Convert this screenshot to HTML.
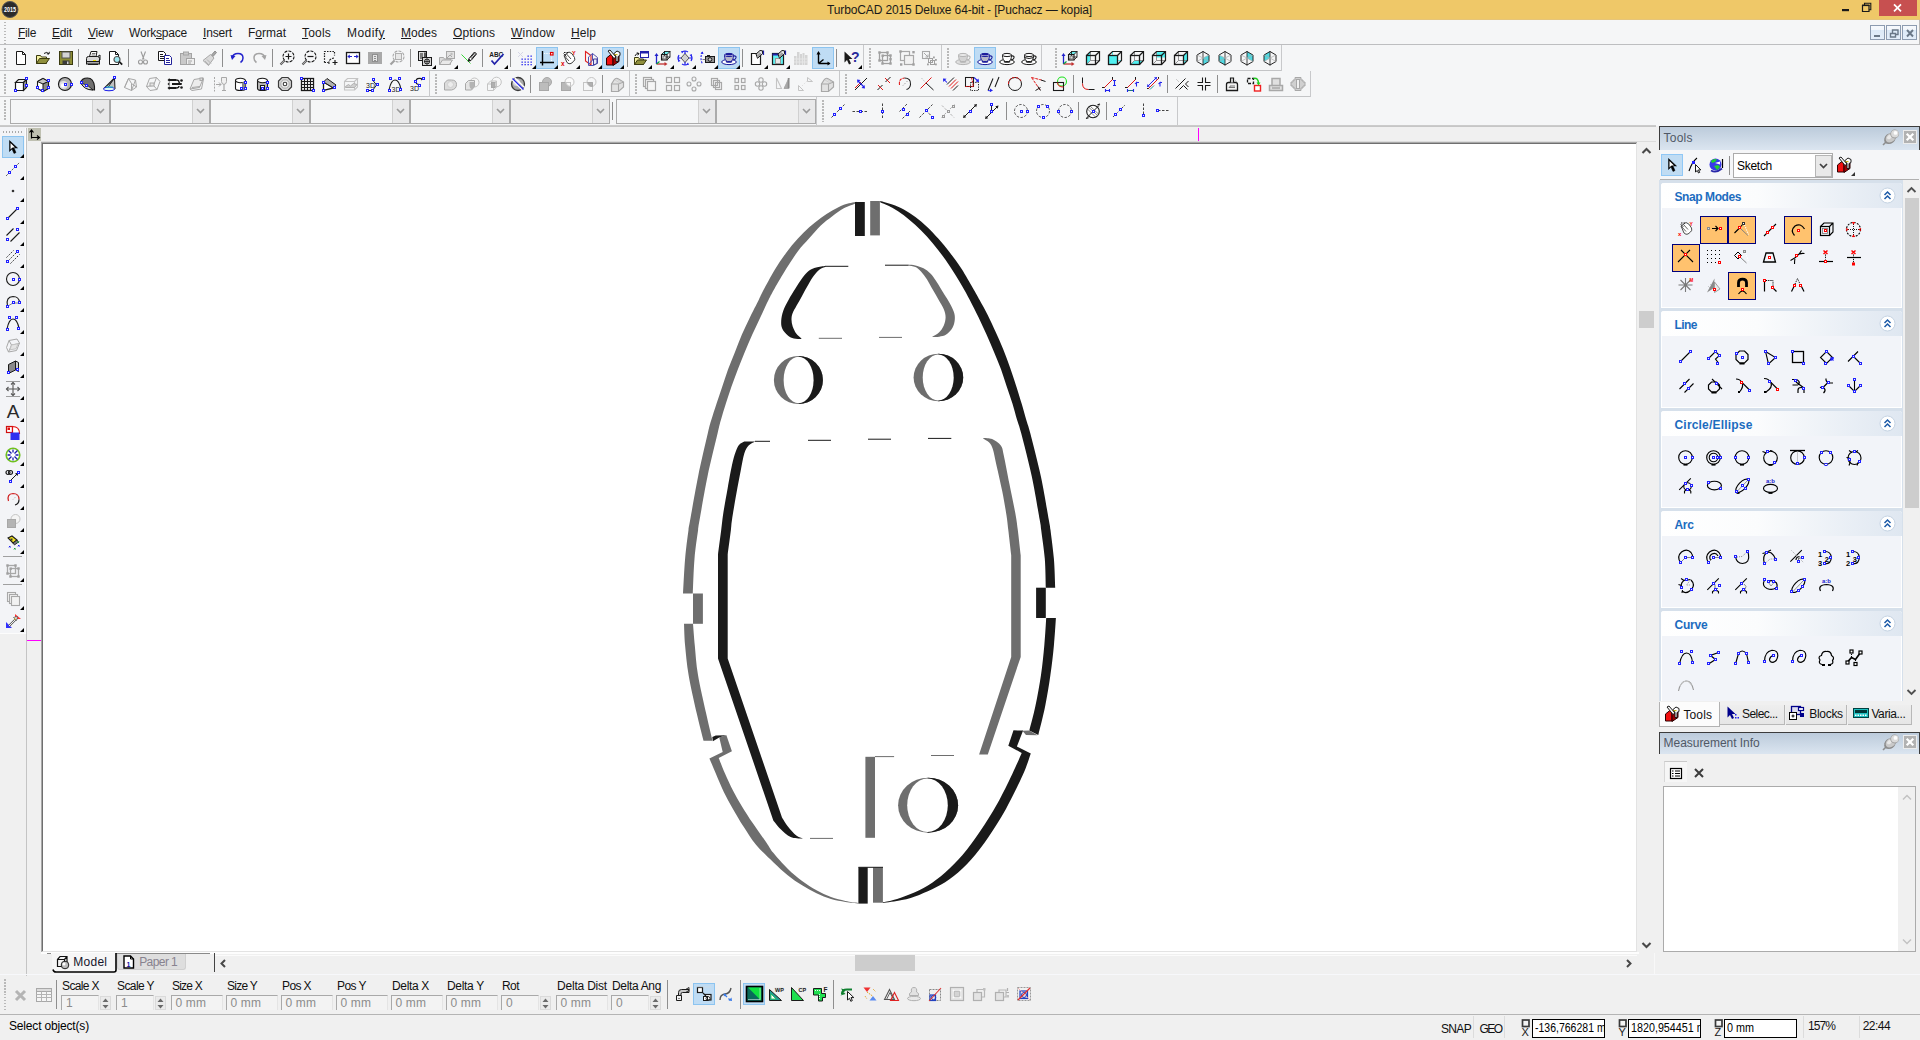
<!DOCTYPE html>
<html><head><meta charset="utf-8"><title>TurboCAD 2015 Deluxe 64-bit - [Puchacz — kopia]</title>
<style>
html,body{margin:0;padding:0;}
body{width:1920px;height:1040px;overflow:hidden;position:relative;background:#f0f0f0;font-family:"Liberation Sans",sans-serif;}
div,span.t,svg{position:absolute;}
span.t{white-space:nowrap;line-height:1;}
svg{overflow:visible;}
.sel{background:#c0dcf3;border:1px solid #90c8f6;box-sizing:border-box;}
</style></head><body>
<div style="left:0px;top:0px;width:1920px;height:19px;background:#efc868;"></div>
<div style="left:0px;top:19px;width:1920px;height:1px;background:#e6c57a;"></div>
<span class="t" style="left:827px;top:3.84px;font-size:12px;color:#1a1a1a;letter-spacing:-0.128px;">TurboCAD 2015 Deluxe 64-bit - [Puchacz — kopia]</span>
<svg style="left:0px;top:0px" width="20" height="20" viewBox="0 0 20 20" ><circle cx="10" cy="9.5" r="8" fill="#2b2b2b"/><circle cx="10" cy="9.5" r="8" fill="none" stroke="#555" stroke-width="1"/><text x="10" y="12" font-size="6.5" font-weight="bold" fill="#fff" text-anchor="middle" font-family="Liberation Sans, sans-serif" textLength="12" lengthAdjust="spacingAndGlyphs">2015</text></svg>
<div style="left:1879px;top:0px;width:38px;height:16px;background:#c75050;"></div>
<svg style="left:1840px;top:0px" width="80" height="20" viewBox="0 0 80 20" ><rect x="2" y="9" width="7" height="2.200" fill="#1a1a1a"/><path d="M22.500 5.500h6.500v6h-6.500z" fill="none" stroke="#1a1a1a" stroke-width="1.200"/><path d="M22 5.300h7.500" stroke="#1a1a1a" stroke-width="1.600"/><path d="M24.500 5v-1.800h6.300v6.500h-1.800" fill="none" stroke="#1a1a1a" stroke-width="1.100"/><path d="M54 4.400l7 7 M61 4.400l-7 7" stroke="#fff" stroke-width="1.700"/></svg>
<div style="left:0px;top:20px;width:1920px;height:106px;background:#f5f6f7;"></div>
<div style="left:0px;top:44px;width:1920px;height:1px;background:#bdbec0;"></div>
<div style="left:0px;top:70px;width:1282px;height:1px;background:#c3c4c6;"></div>
<div style="left:0px;top:96px;width:1311px;height:1px;background:#c3c4c6;"></div>
<div style="left:0px;top:125px;width:1656px;height:1px;background:#cbcbcb;"></div>
<div style="left:0px;top:126px;width:1656px;height:1px;background:#c6c6c6;"></div>
<span class="t" style="left:18px;top:26.84px;font-size:12px;color:#1a1a1a;letter-spacing:-0.334px;"><u>F</u>ile</span>
<span class="t" style="left:52px;top:26.84px;font-size:12px;color:#1a1a1a;letter-spacing:-0.170px;"><u>E</u>dit</span>
<span class="t" style="left:88px;top:26.84px;font-size:12px;color:#1a1a1a;letter-spacing:-0.199px;"><u>V</u>iew</span>
<span class="t" style="left:129px;top:26.84px;font-size:12px;color:#1a1a1a;letter-spacing:-0.200px;">Work<u>s</u>pace</span>
<span class="t" style="left:203px;top:26.84px;font-size:12px;color:#1a1a1a;letter-spacing:-0.169px;"><u>I</u>nsert</span>
<span class="t" style="left:248px;top:26.84px;font-size:12px;color:#1a1a1a;letter-spacing:-0.001px;">F<u>o</u>rmat</span>
<span class="t" style="left:302px;top:26.84px;font-size:12px;color:#1a1a1a;letter-spacing:0.197px;"><u>T</u>ools</span>
<span class="t" style="left:347px;top:26.84px;font-size:12px;color:#1a1a1a;letter-spacing:0.443px;">Modif<u>y</u></span>
<span class="t" style="left:401px;top:26.84px;font-size:12px;color:#1a1a1a;letter-spacing:-0.004px;"><u>M</u>odes</span>
<span class="t" style="left:453px;top:26.84px;font-size:12px;color:#1a1a1a;letter-spacing:0.092px;"><u>O</u>ptions</span>
<span class="t" style="left:511px;top:26.84px;font-size:12px;color:#1a1a1a;letter-spacing:0.220px;"><u>W</u>indow</span>
<span class="t" style="left:571px;top:26.84px;font-size:12px;color:#1a1a1a;letter-spacing:0.080px;"><u>H</u>elp</span>
<div style="left:1870px;top:25px;width:15px;height:15px;background:linear-gradient(#f6f9fd 0%,#f2f6fb 30%,#dce9f7 31%,#e3eefa 100%);border:1px solid #8c9bb0;box-sizing:border-box;"></div>
<div style="left:1886px;top:25px;width:15px;height:15px;background:linear-gradient(#f6f9fd 0%,#f2f6fb 30%,#dce9f7 31%,#e3eefa 100%);border:1px solid #8c9bb0;box-sizing:border-box;"></div>
<div style="left:1902px;top:25px;width:15px;height:15px;background:linear-gradient(#f6f9fd 0%,#f2f6fb 30%,#dce9f7 31%,#e3eefa 100%);border:1px solid #8c9bb0;box-sizing:border-box;"></div>
<svg style="left:1870px;top:25px" width="48" height="15" viewBox="0 0 48 15" ><rect x="4" y="10" width="6" height="2" fill="#6a7888"/><path d="M20.500 8.500h5v3.500h-5z M22.500 8v-3h5.500v4.500h-2" fill="none" stroke="#6a7888" stroke-width="1.400"/><path d="M37 5l6 6.500 M43 5l-6 6.500" stroke="#6a7888" stroke-width="1.900"/></svg>
<div style="left:1919px;top:20px;width:1px;height:25px;background:#b9b9b9;"></div>
<div style="left:4px;top:22px;width:2px;height:22px;background:repeating-linear-gradient(to bottom,#b9b9b9 0,#b9b9b9 1.500px,transparent 1.500px,transparent 3px);"></div>
<div style="left:4px;top:48px;width:2px;height:21px;background:repeating-linear-gradient(to bottom,#b9b9b9 0,#b9b9b9 1.500px,transparent 1.500px,transparent 3px);"></div>
<div style="left:4px;top:74px;width:2px;height:21px;background:repeating-linear-gradient(to bottom,#b9b9b9 0,#b9b9b9 1.500px,transparent 1.500px,transparent 3px);"></div>
<div style="left:4px;top:100px;width:2px;height:21px;background:repeating-linear-gradient(to bottom,#b9b9b9 0,#b9b9b9 1.500px,transparent 1.500px,transparent 3px);"></div>
<div style="left:863px;top:45px;width:1px;height:26px;background:#c8c9cb;"></div>
<div style="left:941px;top:45px;width:1px;height:26px;background:#c8c9cb;"></div>
<div style="left:1041px;top:45px;width:1px;height:26px;background:#c8c9cb;"></div>
<div style="left:1281px;top:45px;width:1px;height:26px;background:#c8c9cb;"></div>
<div style="left:869px;top:48px;width:2px;height:21px;background:repeating-linear-gradient(to bottom,#b9b9b9 0,#b9b9b9 1.500px,transparent 1.500px,transparent 3px);"></div>
<div style="left:947px;top:48px;width:2px;height:21px;background:repeating-linear-gradient(to bottom,#b9b9b9 0,#b9b9b9 1.500px,transparent 1.500px,transparent 3px);"></div>
<div style="left:1055px;top:48px;width:2px;height:21px;background:repeating-linear-gradient(to bottom,#b9b9b9 0,#b9b9b9 1.500px,transparent 1.500px,transparent 3px);"></div>
<div style="left:429px;top:71px;width:1px;height:26px;background:#c8c9cb;"></div>
<div style="left:629px;top:71px;width:1px;height:26px;background:#c8c9cb;"></div>
<div style="left:839px;top:71px;width:1px;height:26px;background:#c8c9cb;"></div>
<div style="left:1310px;top:71px;width:1px;height:26px;background:#c8c9cb;"></div>
<div style="left:435px;top:74px;width:2px;height:21px;background:repeating-linear-gradient(to bottom,#b9b9b9 0,#b9b9b9 1.500px,transparent 1.500px,transparent 3px);"></div>
<div style="left:635px;top:74px;width:2px;height:21px;background:repeating-linear-gradient(to bottom,#b9b9b9 0,#b9b9b9 1.500px,transparent 1.500px,transparent 3px);"></div>
<div style="left:845px;top:74px;width:2px;height:21px;background:repeating-linear-gradient(to bottom,#b9b9b9 0,#b9b9b9 1.500px,transparent 1.500px,transparent 3px);"></div>
<div style="left:816px;top:97px;width:1px;height:28px;background:#c8c9cb;"></div>
<div style="left:822px;top:100px;width:2px;height:22px;background:repeating-linear-gradient(to bottom,#b9b9b9 0,#b9b9b9 1.500px,transparent 1.500px,transparent 3px);"></div>
<div style="left:1177px;top:97px;width:1px;height:28px;background:#c8c9cb;"></div>
<div style="left:10px;top:99px;width:100px;height:25px;background:#f5f6f7;border:1px solid #ababab;box-sizing:border-box;"></div>
<div style="left:92px;top:100px;width:17px;height:23px;background:#e9e9ea;border-left:1px solid #d0d0d0;box-sizing:border-box;"></div>
<svg style="left:96px;top:108px" width="9" height="6" viewBox="0 0 9 6" ><path d="M1 1l3.500 3.500 3.500-3.500" fill="none" stroke="#9a9a9a" stroke-width="1.6"/></svg>
<div style="left:110px;top:99px;width:100px;height:25px;background:#f5f6f7;border:1px solid #ababab;box-sizing:border-box;"></div>
<div style="left:192px;top:100px;width:17px;height:23px;background:#e9e9ea;border-left:1px solid #d0d0d0;box-sizing:border-box;"></div>
<svg style="left:196px;top:108px" width="9" height="6" viewBox="0 0 9 6" ><path d="M1 1l3.500 3.500 3.500-3.500" fill="none" stroke="#9a9a9a" stroke-width="1.6"/></svg>
<div style="left:210px;top:99px;width:100px;height:25px;background:#f5f6f7;border:1px solid #ababab;box-sizing:border-box;"></div>
<div style="left:292px;top:100px;width:17px;height:23px;background:#e9e9ea;border-left:1px solid #d0d0d0;box-sizing:border-box;"></div>
<svg style="left:296px;top:108px" width="9" height="6" viewBox="0 0 9 6" ><path d="M1 1l3.500 3.500 3.500-3.500" fill="none" stroke="#9a9a9a" stroke-width="1.6"/></svg>
<div style="left:310px;top:99px;width:100px;height:25px;background:#f5f6f7;border:1px solid #ababab;box-sizing:border-box;"></div>
<div style="left:392px;top:100px;width:17px;height:23px;background:#e9e9ea;border-left:1px solid #d0d0d0;box-sizing:border-box;"></div>
<svg style="left:396px;top:108px" width="9" height="6" viewBox="0 0 9 6" ><path d="M1 1l3.500 3.500 3.500-3.500" fill="none" stroke="#9a9a9a" stroke-width="1.6"/></svg>
<div style="left:410px;top:99px;width:100px;height:25px;background:#f5f6f7;border:1px solid #ababab;box-sizing:border-box;"></div>
<div style="left:492px;top:100px;width:17px;height:23px;background:#e9e9ea;border-left:1px solid #d0d0d0;box-sizing:border-box;"></div>
<svg style="left:496px;top:108px" width="9" height="6" viewBox="0 0 9 6" ><path d="M1 1l3.500 3.500 3.500-3.500" fill="none" stroke="#9a9a9a" stroke-width="1.6"/></svg>
<div style="left:510px;top:99px;width:100px;height:25px;background:#efefef;border:1px solid #ababab;box-sizing:border-box;"></div>
<div style="left:592px;top:100px;width:17px;height:23px;background:#e9e9ea;border-left:1px solid #d0d0d0;box-sizing:border-box;"></div>
<svg style="left:596px;top:108px" width="9" height="6" viewBox="0 0 9 6" ><path d="M1 1l3.500 3.500 3.500-3.500" fill="none" stroke="#9a9a9a" stroke-width="1.6"/></svg>
<div style="left:612px;top:102px;width:1px;height:18px;background:#8e8e8e;"></div>
<div style="left:616px;top:99px;width:100px;height:25px;background:#f5f6f7;border:1px solid #ababab;box-sizing:border-box;"></div>
<div style="left:698px;top:100px;width:17px;height:23px;background:#e9e9ea;border-left:1px solid #d0d0d0;box-sizing:border-box;"></div>
<svg style="left:702px;top:108px" width="9" height="6" viewBox="0 0 9 6" ><path d="M1 1l3.500 3.500 3.500-3.500" fill="none" stroke="#9a9a9a" stroke-width="1.6"/></svg>
<div style="left:716px;top:99px;width:100px;height:25px;background:#efefef;border:1px solid #ababab;box-sizing:border-box;"></div>
<div style="left:798px;top:100px;width:17px;height:23px;background:#e9e9ea;border-left:1px solid #d0d0d0;box-sizing:border-box;"></div>
<svg style="left:802px;top:108px" width="9" height="6" viewBox="0 0 9 6" ><path d="M1 1l3.500 3.500 3.500-3.500" fill="none" stroke="#9a9a9a" stroke-width="1.6"/></svg>
<div style="left:0px;top:127px;width:26px;height:506px;background:#f3f4f7;"></div>
<div style="left:25px;top:128px;width:1px;height:505px;background:#fdfdfd;"></div>
<div style="left:26px;top:128px;width:1px;height:848px;background:#c4c4c4;"></div>
<div style="left:0px;top:633px;width:26px;height:1px;background:#fcfcfc;"></div>
<div style="left:3px;top:131px;width:20px;height:2px;background:repeating-linear-gradient(to right,#a9a9a9 0,#a9a9a9 1px,transparent 1px,transparent 3px);"></div>
<div style="left:28px;top:128px;width:13px;height:13px;background:#bfc0b1;"></div>
<svg style="left:28px;top:128px" width="13" height="13" viewBox="0 0 13 13" ><path d="M3.500 10.500v-8 M1.500 4.500l2-2.500 2 2.500 M3.500 9.500h8 M9 7.500l2.500 2-2.500 2" fill="none" stroke="#000" stroke-width="1.2"/></svg>
<div style="left:41px;top:141px;width:1615px;height:1px;background:#dcdcdc;"></div>
<div style="left:41px;top:142px;width:1596px;height:810px;background:#fff;border-left:2px solid #9c9c9c;border-top:2px solid #9c9c9c;border-right:1px solid #e3e3e3;border-bottom:1px solid #e3e3e3;box-sizing:border-box;"></div>
<div style="left:41px;top:142px;width:1px;height:809px;background:#a8a8a8;"></div>
<div style="left:42px;top:143px;width:1px;height:808px;background:#6f6f6f;"></div>
<div style="left:41px;top:142px;width:1596px;height:1px;background:#a8a8a8;"></div>
<div style="left:42px;top:143px;width:1594px;height:1px;background:#6f6f6f;"></div>
<div style="left:1198px;top:128px;width:1px;height:13px;background:#ff00ff;"></div>
<div style="left:27px;top:640px;width:14px;height:1px;background:#ff00ff;"></div>
<div style="left:1638px;top:143px;width:17px;height:809px;background:#f0f0f0;"></div>
<div style="left:1639px;top:311px;width:15px;height:17px;background:#cdcdcd;"></div>
<svg style="left:1641px;top:147px" width="11" height="8" viewBox="0 0 11 8" ><path d="M1.500 6l4-4 4 4" fill="none" stroke="#484848" stroke-width="2.100"/></svg>
<svg style="left:1641px;top:941px" width="11" height="8" viewBox="0 0 11 8" ><path d="M1.500 2l4 4 4-4" fill="none" stroke="#484848" stroke-width="2.100"/></svg>
<div style="left:41px;top:952px;width:1598px;height:2px;background:#fdfdfd;"></div>
<div style="left:215px;top:955px;width:1422px;height:1px;background:#fbfbfb;"></div>
<div style="left:1654px;top:953px;width:1px;height:21px;background:#f8f8f8;"></div>
<div style="left:214px;top:953px;width:1px;height:19px;background:#444;"></div>
<div style="left:855px;top:955px;width:60px;height:16px;background:#cdcdcd;"></div>
<svg style="left:219px;top:958px" width="8" height="11" viewBox="0 0 8 11" ><path d="M6 2l-3.500 3.500 3.500 3.500" fill="none" stroke="#484848" stroke-width="2"/></svg>
<svg style="left:1625px;top:958px" width="8" height="11" viewBox="0 0 8 11" ><path d="M2 2l3.500 3.500-3.500 3.500" fill="none" stroke="#484848" stroke-width="2"/></svg>
<div style="left:116px;top:953px;width:94px;height:1px;background:#8a8a8a;"></div>
<div style="left:47px;top:953px;width:4px;height:1px;background:#8a8a8a;"></div>
<div style="left:52px;top:953px;width:64px;height:19px;background:#f6f6f6;border-radius:0 0 3px 3px;"></div>
<svg style="left:50px;top:952px" width="70" height="24" viewBox="0 0 70 24" ><path d="M3 17.500q.5 2.500 3 2.500h58q2 0 2-2v-17" fill="none" stroke="#000" stroke-width="1.600"/></svg>
<div style="left:117px;top:954px;width:69px;height:16px;background:#dedede;border:1px solid #d0d0d0;border-top:none;border-radius:0 0 3px 3px;box-sizing:border-box;"></div>
<svg style="left:56px;top:955px" width="15" height="15" viewBox="0 0 15 15" ><path d="M1.500 4.500h7v7h-7zM1.500 4.500l2.500-3h7v7l-2.500 3M8.500 4.500l2.500-3" fill="#f4f4f4" stroke="#111" stroke-width="1.200"/><circle cx="9" cy="10" r="3.800" fill="#bdbdbd" stroke="#222" stroke-width="1"/><circle cx="8" cy="9" r="1.500" fill="#fff"/></svg>
<svg style="left:123px;top:955px" width="12" height="14" viewBox="0 0 12 14" ><path d="M1 1h6.500l3 3v9h-9.500z" fill="#fff" stroke="#000" stroke-width="1.400"/><path d="M7.500 1v3h3" fill="none" stroke="#000" stroke-width="1"/><text x="5.500" y="11.500" font-size="7" font-weight="bold" fill="#1010a0" text-anchor="middle" font-family="Liberation Sans, sans-serif">1</text></svg>
<span class="t" style="left:73.3px;top:956.14px;font-size:12px;color:#15152a;letter-spacing:0.263px;">Model</span>
<span class="t" style="left:139.2px;top:956.14px;font-size:12px;color:#87828f;letter-spacing:-0.576px;">Paper 1</span>
<div style="left:0px;top:974px;width:1920px;height:1px;background:#f7f8fb;"></div>
<div style="left:0px;top:1014px;width:1920px;height:1px;background:#b4b4b4;"></div>
<div style="left:4px;top:979px;width:2px;height:32px;background:repeating-linear-gradient(to bottom,#b9b9b9 0,#b9b9b9 1.500px,transparent 1.500px,transparent 3px);"></div>
<span class="t" style="left:9px;top:1019.84px;font-size:12px;color:#000;letter-spacing:-0.169px;">Select object(s)</span>
<svg style="left:0;top:0" width="1920" height="1040" viewBox="0 0 1920 1040"><path d="M856.5,201.8 C854.4,202.3 847.8,203.3 843.8,204.8 C839.8,206.3 836.1,208.4 832.3,210.6 C828.5,212.8 824.6,215.3 820.8,218.1 C816.9,220.9 813.1,223.9 809.2,227.3 C805.4,230.8 801.5,234.6 797.7,238.8 C793.9,243.0 790.1,247.5 786.2,252.7 C782.4,257.9 778.5,263.6 774.6,270.0 C770.8,276.4 765.8,285.8 763.1,290.8 C760.5,295.8 760.9,295.6 758.7,300.0 C756.5,304.4 752.8,311.5 750.0,317.3 C747.2,323.1 744.4,328.8 741.9,334.6 C739.4,340.4 737.3,346.1 735.0,351.9 C732.7,357.7 730.2,363.4 728.1,369.2 C726.0,375.0 724.2,380.7 722.3,386.5 C720.4,392.3 718.3,398.2 716.5,403.8 C714.7,409.4 712.8,415.1 711.3,420.0 C709.8,424.9 710.0,423.9 707.8,433.3 C705.6,442.7 701.0,462.1 698.1,476.5 C695.2,490.9 691.8,510.9 690.2,519.8 C688.6,528.7 689.4,523.5 688.5,530.0 C687.6,536.5 686.0,548.2 685.1,558.8 C684.2,569.4 683.4,587.7 683.0,593.5 L692.8,593.5 C693.1,587.7 693.6,569.4 694.5,558.8 C695.4,548.2 697.2,536.5 698.1,530.0 C699.0,523.5 698.0,528.7 699.6,519.8 C701.2,510.9 704.5,490.9 707.5,476.5 C710.5,462.1 715.4,442.7 717.6,433.3 C719.8,423.9 719.5,424.9 720.9,420.0 C722.3,415.1 724.0,409.4 725.8,403.8 C727.6,398.2 729.5,392.3 731.5,386.5 C733.5,380.7 735.7,375.0 737.9,369.2 C740.1,363.4 742.4,357.7 744.8,351.9 C747.2,346.1 749.7,340.4 752.3,334.6 C754.9,328.8 757.7,323.1 760.4,317.3 C763.1,311.5 766.1,304.8 768.5,300.0 C770.9,295.2 771.6,293.7 774.6,288.5 C777.6,283.3 782.4,275.0 786.2,268.8 C790.1,262.6 793.9,256.6 797.7,251.5 C801.5,246.4 805.4,242.6 809.2,238.3 C813.1,234.0 816.9,229.3 820.8,225.6 C824.6,221.9 828.5,219.2 832.3,216.3 C836.1,213.4 839.8,210.5 843.8,208.3 C847.8,206.1 854.4,204.0 856.5,203.2 Z" fill="#6e6e6e"/><rect x="693.0" y="593.5" width="9.9" height="30.3" fill="#6e6e6e"/><path d="M684.0,623.8 C684.2,627.4 684.3,636.9 685.1,645.4 C685.9,653.9 686.7,663.7 688.6,675.0 C690.5,686.3 694.2,702.3 696.7,713.3 C699.2,724.2 702.4,736.1 703.5,740.7 L712.5,740.7 C711.4,736.1 708.5,724.2 706.1,713.3 C703.7,702.3 699.9,686.3 698.0,675.0 C696.1,663.7 695.6,653.9 694.8,645.4 C694.0,636.9 693.3,627.4 693.0,623.8 Z" fill="#6e6e6e"/><polygon points="712.3,737.1 715.8,735.4 726.4,735.2 719.2,737.5 712.9,741.2" fill="#1a1a1a"/><path d="M719.2,737.3 L726.4,735.2 L731.9,751.2 L718.7,758.0 C719.8,760.6 722.6,768.0 725.0,773.5 C727.4,779.0 730.2,785.2 733.1,790.8 C736.0,796.4 739.0,801.5 742.3,806.9 C745.6,812.3 748.7,817.1 752.7,823.1 C756.7,829.1 763.1,837.8 766.5,842.7 C769.9,847.7 769.8,848.5 773.3,852.8 C776.8,857.1 782.9,864.0 787.7,868.7 C792.5,873.4 797.3,877.4 802.1,881.0 C806.9,884.6 811.7,887.6 816.5,890.3 C821.3,893.0 826.2,895.3 831.0,897.1 C835.8,898.9 840.8,900.0 845.4,901.0 C850.0,902.0 856.2,902.6 858.4,902.9 L858.4,903.4 C856.2,903.1 850.0,902.6 845.4,901.9 C840.8,901.2 835.8,900.5 831.0,899.0 C826.2,897.5 821.3,895.5 816.5,893.2 C811.7,890.9 806.9,888.3 802.1,885.3 C797.3,882.3 792.5,879.1 787.7,875.2 C782.9,871.4 778.5,867.2 773.3,862.2 C768.0,857.2 761.2,851.0 756.2,845.0 C751.2,839.0 747.4,832.5 743.5,826.5 C739.6,820.5 736.4,815.0 733.1,809.2 C729.8,803.4 726.7,797.9 723.8,791.9 C720.9,785.9 718.2,779.1 715.8,773.5 C713.4,767.9 710.5,761.0 709.4,758.5 L709.4,758.5 L722.7,752.1 Z" fill="#6e6e6e"/><rect x="855.0" y="202.0" width="9.8" height="34.0" fill="#1a1a1a"/><rect x="870.2" y="201.0" width="9.7" height="34.4" fill="#6e6e6e"/><rect x="858.4" y="867.3" width="9.3" height="36.3" fill="#1a1a1a"/><rect x="873.0" y="867.3" width="9.9" height="35.4" fill="#6e6e6e"/><rect x="858.4" y="866.8" width="24.6" height="1" fill="#1a1a1a"/><path d="M880.2,201.0 C882.2,201.6 888.4,203.1 892.3,204.5 C896.2,205.9 899.9,207.3 903.8,209.4 C907.6,211.5 911.5,214.0 915.4,216.9 C919.2,219.8 923.0,223.0 926.9,226.7 C930.8,230.3 934.6,234.5 938.5,238.8 C942.4,243.1 946.2,247.7 950.0,252.7 C953.8,257.7 957.6,262.8 961.5,268.8 C965.4,274.8 970.1,283.3 973.1,288.5 C976.1,293.7 977.2,295.6 979.6,300.0 C982.0,304.4 985.0,309.6 987.7,315.0 C990.4,320.4 993.2,326.5 995.8,332.3 C998.4,338.1 1000.9,343.6 1003.3,349.6 C1005.7,355.6 1008.1,362.1 1010.2,368.1 C1012.3,374.1 1014.1,379.4 1016.0,385.4 C1017.9,391.3 1020.0,398.0 1021.7,403.8 C1023.4,409.6 1024.9,415.1 1026.3,420.0 C1027.7,424.9 1027.9,423.9 1030.3,433.3 C1032.7,442.7 1037.8,462.1 1040.9,476.5 C1044.0,490.9 1047.2,510.9 1048.8,519.8 C1050.4,528.7 1049.7,523.5 1050.5,530.0 C1051.3,536.5 1053.1,549.2 1053.9,558.8 C1054.7,568.4 1055.0,582.9 1055.2,587.7 L1045.8,587.7 C1045.6,582.9 1045.6,568.4 1044.8,558.8 C1044.0,549.2 1042.0,536.5 1041.2,530.0 C1040.4,523.5 1041.3,528.7 1039.7,519.8 C1038.1,510.9 1034.9,490.9 1031.8,476.5 C1028.7,462.1 1023.7,442.7 1021.2,433.3 C1018.8,423.9 1018.6,424.9 1017.1,420.0 C1015.6,415.1 1014.2,409.4 1012.5,403.8 C1010.8,398.2 1008.6,392.3 1006.7,386.5 C1004.8,380.7 1003.1,375.0 1001.0,369.2 C998.9,363.4 996.4,357.7 994.0,351.9 C991.6,346.1 989.1,340.4 986.5,334.6 C983.9,328.8 981.3,323.1 978.5,317.3 C975.7,311.5 972.6,305.4 969.8,300.0 C967.0,294.6 964.8,290.6 961.5,285.0 C958.2,279.4 953.8,272.3 950.0,266.5 C946.2,260.7 942.4,255.4 938.5,250.4 C934.6,245.4 930.8,240.7 926.9,236.5 C923.0,232.3 919.2,228.6 915.4,225.0 C911.5,221.4 907.6,218.1 903.8,215.2 C899.9,212.3 896.2,209.9 892.3,207.7 C888.4,205.5 882.2,203.1 880.2,202.2 Z" fill="#1a1a1a"/><rect x="1036.1" y="587.7" width="9.7" height="30.3" fill="#1a1a1a"/><path d="M1055.9,618.0 C1055.6,622.6 1054.8,635.9 1053.9,645.4 C1053.0,654.9 1051.9,664.9 1050.4,675.0 C1049.0,685.1 1047.2,696.0 1045.2,706.0 C1043.2,716.0 1039.5,730.1 1038.3,734.9 L1029.3,730.6 C1030.3,726.5 1033.5,715.3 1035.4,706.0 C1037.4,696.7 1039.5,685.1 1041.0,675.0 C1042.5,664.9 1043.4,654.9 1044.3,645.4 C1045.2,635.9 1045.9,622.6 1046.2,618.0 Z" fill="#1a1a1a"/><polygon points="1022.4,730.8 1029.3,730.6 1037.5,735.3 1026.0,735.0" fill="#6e6e6e"/><path d="M1013.5,730.3 L1023.1,730.6 L1016.9,746.4 L1030.8,753.4 C1029.5,756.9 1027.2,765.3 1023.0,774.6 C1018.8,783.9 1011.5,798.8 1005.8,809.2 C1000.0,819.6 994.3,828.5 988.5,836.9 C982.7,845.3 977.0,852.9 971.2,859.4 C965.4,865.9 959.6,871.3 953.8,875.9 C948.0,880.5 942.3,883.9 936.5,887.1 C930.7,890.3 925.0,892.7 919.2,894.9 C913.4,897.1 908.0,898.8 901.9,900.1 C895.8,901.5 886.1,902.5 882.9,903.0 L882.9,902.3 C884.6,901.9 888.7,901.5 893.3,900.1 C897.9,898.7 904.8,896.5 910.6,894.0 C916.4,891.5 922.1,889.0 927.9,885.4 C933.7,881.8 939.4,877.4 945.2,872.4 C951.0,867.4 956.7,861.9 962.5,855.1 C968.3,848.3 974.0,840.2 979.8,831.7 C985.6,823.2 991.7,813.6 997.1,804.0 C1002.5,794.4 1008.2,782.4 1012.3,773.9 C1016.4,765.4 1020.1,756.4 1021.7,752.9 L1021.7,752.9 L1008.3,745.7 Z" fill="#1a1a1a"/><path d="M744.3,441.6 C743.4,442.1 740.7,443.1 739.2,444.8 C737.8,446.5 736.8,448.6 735.6,452.0 C734.4,455.4 733.3,459.0 732.0,465.0 C730.7,471.0 729.1,480.2 727.7,488.1 C726.3,496.0 724.5,505.6 723.4,512.6 C722.3,519.6 722.1,523.0 721.2,530.0 C720.3,537.0 718.5,550.4 718.0,554.5 L718.0,554.5 L718.0,658.4 L773.3,820.4 L773.3,820.4 C774.5,821.8 777.6,826.2 780.5,829.0 C783.4,831.8 787.0,835.4 790.6,837.0 C794.2,838.6 800.1,838.3 802.0,838.6 L802.8,838.2 C801.7,837.8 798.8,837.5 796.3,835.5 C793.8,833.5 790.1,829.2 787.7,826.2 C785.3,823.2 783.0,819.0 782.0,817.5 L782.0,817.5 L727.7,658.4 L727.7,554.5 L727.7,554.5 C728.2,550.4 730.2,535.8 730.9,530.0 C731.6,524.2 731.1,525.8 732.0,519.8 C732.9,513.8 734.8,502.1 736.3,493.9 C737.8,485.7 739.4,477.5 740.7,470.8 C742.0,464.1 743.0,457.7 744.3,453.5 C745.6,449.3 746.8,447.5 748.6,445.5 C750.4,443.5 754.0,442.2 755.1,441.5 Z" fill="#1a1a1a"/><path d="M983.2,437.9 C984.7,438.1 989.2,437.7 992.1,439.0 C995.0,440.3 998.9,442.9 1000.8,445.5 C1002.7,448.1 1002.3,448.5 1003.7,454.9 C1005.1,461.3 1007.5,474.2 1009.4,483.8 C1011.3,493.4 1013.8,504.9 1015.2,512.6 C1016.6,520.3 1016.9,522.9 1017.8,530.0 C1018.7,537.1 1020.2,551.0 1020.7,555.2 L1020.7,555.2 L1020.7,656.9 L987.8,754.4 L979.1,754.4 L1011.2,656.9 L1011.2,555.2 L1011.2,555.2 C1010.7,551.0 1009.1,536.6 1008.3,530.0 C1007.5,523.4 1007.5,522.0 1006.5,515.5 C1005.5,509.0 1003.9,499.4 1002.2,491.0 C1000.5,482.6 998.0,472.0 996.4,465.0 C994.8,458.0 994.0,452.8 992.8,449.1 C991.6,445.4 990.8,444.4 989.2,442.6 C987.6,440.8 984.2,439.2 983.2,438.5 Z" fill="#6e6e6e"/><path d="M825.4,266.0 C823.9,266.2 818.9,266.7 816.2,267.5 C813.5,268.3 811.5,268.8 809.2,270.6 C806.9,272.4 804.6,275.1 802.3,278.1 C800.0,281.1 797.7,284.9 795.4,288.5 C793.1,292.1 790.5,296.2 788.5,300.0 C786.5,303.8 784.4,307.5 783.2,311.0 C782.0,314.5 781.4,317.8 781.2,320.8 C781.1,323.8 781.1,326.3 782.3,328.8 C783.4,331.3 786.2,334.2 788.1,335.8 C790.0,337.4 791.6,337.9 793.8,338.4 C796.0,338.9 800.0,338.8 801.3,338.9 L801.3,338.3 C800.4,337.5 797.6,335.5 796.2,333.5 C794.8,331.5 793.5,328.8 792.7,326.5 C791.9,324.2 791.5,321.8 791.5,319.6 C791.5,317.4 791.7,315.8 792.5,313.5 C793.3,311.2 794.9,308.8 796.5,305.8 C798.1,302.8 800.4,298.9 802.3,295.4 C804.2,291.9 806.2,288.3 808.1,285.0 C810.0,281.7 811.9,278.4 813.8,275.8 C815.7,273.2 817.7,270.9 819.6,269.4 C821.5,267.9 824.4,267.3 825.4,266.9 Z" fill="#1a1a1a"/><path d="M908.5,264.8 C909.6,264.9 912.9,264.8 915.4,265.4 C917.9,266.0 921.0,266.9 923.5,268.3 C926.0,269.7 928.3,271.4 930.4,273.5 C932.5,275.6 933.8,277.6 936.1,281.0 C938.4,284.4 942.2,291.0 944.2,294.2 C946.2,297.4 946.3,297.1 947.9,300.0 C949.5,302.9 952.6,308.2 953.7,311.5 C954.9,314.8 955.0,316.9 954.8,319.6 C954.6,322.3 953.9,325.2 952.5,327.7 C951.1,330.2 948.4,333.1 946.2,334.6 C944.0,336.1 941.5,336.3 939.2,336.7 C936.9,337.1 933.4,337.0 932.3,337.1 L932.3,336.7 C933.4,336.0 937.3,334.2 939.2,332.3 C941.1,330.4 942.7,327.9 943.8,325.4 C944.9,322.9 945.6,320.0 945.6,317.3 C945.6,314.6 944.9,312.1 943.8,309.2 C942.6,306.3 940.6,303.3 938.7,300.0 C936.9,296.7 934.7,293.1 932.7,289.6 C930.7,286.1 928.8,282.2 926.9,279.2 C925.0,276.2 923.1,273.7 921.2,271.7 C919.3,269.7 917.5,268.1 915.4,267.1 C913.3,266.1 909.6,265.9 908.5,265.6 Z" fill="#6e6e6e"/><rect x="825.0" y="265.8" width="23.3" height="1" fill="#1a1a1a"/><rect x="885.0" y="264.7" width="23.6" height="1" fill="#1a1a1a"/><rect x="818.8" y="337.8" width="23.2" height="1" fill="#6e6e6e"/><rect x="879.0" y="336.9" width="23.0" height="1" fill="#6e6e6e"/><rect x="755.0" y="440.8" width="15.0" height="1" fill="#1a1a1a"/><rect x="808.0" y="439.8" width="23.0" height="1" fill="#1a1a1a"/><rect x="868.0" y="438.7" width="23.0" height="1" fill="#1a1a1a"/><rect x="928.0" y="437.9" width="23.3" height="1" fill="#1a1a1a"/><rect x="810.0" y="837.9" width="23.0" height="1" fill="#6e6e6e"/><rect x="875.0" y="756.1" width="19.1" height="1" fill="#6e6e6e"/><rect x="931.0" y="755.0" width="23.0" height="1" fill="#6e6e6e"/><rect x="865.4" y="756.8" width="9.6" height="81.0" fill="#6e6e6e"/><clipPath id="c798"><ellipse cx="798.4" cy="380" rx="24.5" ry="24"/></clipPath><ellipse cx="798.4" cy="380" rx="24.5" ry="24" fill="#6e6e6e"/><path d="M798.6,355 L823.9,355 L823.9,405 L798.6,405 Z" fill="#1a1a1a" clip-path="url(#c798)"/><ellipse cx="798.6" cy="380" rx="15" ry="23.3" fill="#fff"/><clipPath id="c938"><ellipse cx="938.4" cy="377.5" rx="24.8" ry="23.7"/></clipPath><ellipse cx="938.4" cy="377.5" rx="24.8" ry="23.7" fill="#6e6e6e"/><path d="M938.2,352.8 L964.1999999999999,352.8 L964.1999999999999,402.2 L938.2,402.2 Z" fill="#1a1a1a" clip-path="url(#c938)"/><ellipse cx="938.2" cy="377.5" rx="15.5" ry="23" fill="#fff"/><clipPath id="c928"><ellipse cx="928.1" cy="805.2" rx="30" ry="27.5"/></clipPath><ellipse cx="928.1" cy="805.2" rx="30" ry="27.5" fill="#6e6e6e"/><path d="M927.5,776.7 L959.1,776.7 L959.1,833.7 L927.5,833.7 Z" fill="#1a1a1a" clip-path="url(#c928)"/><ellipse cx="927.5" cy="805.2" rx="20.3" ry="26.8" fill="#fff"/></svg>
<div style="left:1656px;top:127px;width:264px;height:847px;background:#f0f0f0;"></div>
<div style="left:1659px;top:126px;width:261px;height:24px;background:linear-gradient(#bccbdb,#dbe5f0);border-top:1px solid #3c3c3c;border-left:1px solid #3c3c3c;border-right:1px solid #3c3c3c;box-sizing:border-box;"></div>
<span class="t" style="left:1663.6px;top:131.84px;font-size:12px;color:#505866;letter-spacing:0.197px;">Tools</span>
<div style="left:1903px;top:130px;width:14px;height:14px;background:#b2b2b2;border:1px solid #ececec;box-sizing:border-box;"></div>
<svg style="left:1903px;top:130px" width="14" height="14" viewBox="0 0 14 14" ><path d="M3.700 3.700l6.600 6.600 M10.300 3.700l-6.600 6.600" stroke="#fff" stroke-width="2.200"/></svg>
<svg style="left:1882px;top:129px" width="18" height="17" viewBox="0 0 18 17" ><path d="M1 16l4.500-4.500" stroke="#8f8f8f" stroke-width="1.600"/><ellipse cx="8" cy="9.500" rx="6.300" ry="5" transform="rotate(-38 8 9.500)" fill="#8c8c8c"/><ellipse cx="8.700" cy="8.800" rx="5.500" ry="4.200" transform="rotate(-38 8.700 8.800)" fill="#c9c9c9"/><ellipse cx="7.500" cy="8" rx="2.800" ry="1.800" transform="rotate(-38 7.500 8)" fill="#e8e8e8"/><circle cx="12.700" cy="5" r="4.400" fill="#9a9a9a"/><circle cx="12.900" cy="4.700" r="3.800" fill="#dadada"/><circle cx="13.500" cy="3.900" r="1.900" fill="#fdfdfd"/></svg>
<div style="left:1660px;top:150px;width:260px;height:30px;background:#f5f6f8;"></div>
<div style="left:1660px;top:179px;width:259px;height:1px;background:#b0b0b0;"></div>
<div style="left:1661px;top:154px;width:22px;height:22px;background:#c0dcf3;border:1px solid #90c8f6;box-sizing:border-box;"></div>
<div style="left:1729px;top:156px;width:1px;height:19px;background:#8e8e8e;"></div>
<div style="left:1733px;top:153px;width:100px;height:25px;background:#fff;border:1px solid #ababab;box-sizing:border-box;"></div>
<div style="left:1815px;top:155px;width:17px;height:22px;background:#e9e9e9;border:1px solid #b5b5b5;box-sizing:border-box;"></div>
<svg style="left:1819px;top:163px" width="9" height="6" viewBox="0 0 9 6" ><path d="M1 1l3.500 3.500 3.500-3.500" fill="none" stroke="#404040" stroke-width="1.7"/></svg>
<span class="t" style="left:1737px;top:159.84px;font-size:12px;color:#000;letter-spacing:-0.281px;">Sketch</span>
<div style="left:1659px;top:180px;width:244px;height:521px;background:#d6e0eb;"></div>
<div style="left:1903px;top:180px;width:17px;height:521px;background:#f0f0f0;"></div>
<div style="left:1905px;top:198px;width:14px;height:310px;background:#cdcdcd;"></div>
<svg style="left:1906px;top:186px" width="11" height="8" viewBox="0 0 11 8" ><path d="M1.500 6l4-4 4 4" fill="none" stroke="#505050" stroke-width="1.8"/></svg>
<svg style="left:1906px;top:688px" width="11" height="8" viewBox="0 0 11 8" ><path d="M1.500 2l4 4 4-4" fill="none" stroke="#505050" stroke-width="1.8"/></svg>
<div style="left:1661px;top:183px;width:241px;height:125px;background:#f2f4f9;border-radius:3px 3px 0 0;border-left:1px solid #fff;border-right:1px solid #fff;border-bottom:1px solid #fff;box-sizing:border-box;"></div>
<div style="left:1661px;top:183px;width:241px;height:25px;background:linear-gradient(to right,#ffffff 0%,#fbfcfd 40%,#dfe7f1 100%);border-radius:3px 3px 0 0;"></div>
<span class="t" style="left:1674.5px;top:190.64px;font-size:12px;color:#1c6cbf;letter-spacing:-0.418px;font-weight:bold;">Snap Modes</span>
<svg style="left:1879px;top:187px" width="17" height="17" viewBox="0 0 17 17" ><circle cx="8.500" cy="8.500" r="7.500" fill="#fff" stroke="#c5d3e3"/><path d="M5.500 8l3-3 3 3 M5.500 12l3-3 3 3" fill="none" stroke="#1c5aa8" stroke-width="1.500"/></svg>
<div style="left:1661px;top:311px;width:241px;height:97px;background:#f2f4f9;border-radius:3px 3px 0 0;border-left:1px solid #fff;border-right:1px solid #fff;border-bottom:1px solid #fff;box-sizing:border-box;"></div>
<div style="left:1661px;top:311px;width:241px;height:25px;background:linear-gradient(to right,#ffffff 0%,#fbfcfd 40%,#dfe7f1 100%);border-radius:3px 3px 0 0;"></div>
<span class="t" style="left:1674.5px;top:318.64px;font-size:12px;color:#1c6cbf;letter-spacing:-0.542px;font-weight:bold;">Line</span>
<svg style="left:1879px;top:315px" width="17" height="17" viewBox="0 0 17 17" ><circle cx="8.500" cy="8.500" r="7.500" fill="#fff" stroke="#c5d3e3"/><path d="M5.500 8l3-3 3 3 M5.500 12l3-3 3 3" fill="none" stroke="#1c5aa8" stroke-width="1.500"/></svg>
<div style="left:1661px;top:411px;width:241px;height:97px;background:#f2f4f9;border-radius:3px 3px 0 0;border-left:1px solid #fff;border-right:1px solid #fff;border-bottom:1px solid #fff;box-sizing:border-box;"></div>
<div style="left:1661px;top:411px;width:241px;height:25px;background:linear-gradient(to right,#ffffff 0%,#fbfcfd 40%,#dfe7f1 100%);border-radius:3px 3px 0 0;"></div>
<span class="t" style="left:1674.5px;top:418.64px;font-size:12px;color:#1c6cbf;letter-spacing:0.188px;font-weight:bold;">Circle/Ellipse</span>
<svg style="left:1879px;top:415px" width="17" height="17" viewBox="0 0 17 17" ><circle cx="8.500" cy="8.500" r="7.500" fill="#fff" stroke="#c5d3e3"/><path d="M5.500 8l3-3 3 3 M5.500 12l3-3 3 3" fill="none" stroke="#1c5aa8" stroke-width="1.500"/></svg>
<div style="left:1661px;top:511px;width:241px;height:97px;background:#f2f4f9;border-radius:3px 3px 0 0;border-left:1px solid #fff;border-right:1px solid #fff;border-bottom:1px solid #fff;box-sizing:border-box;"></div>
<div style="left:1661px;top:511px;width:241px;height:25px;background:linear-gradient(to right,#ffffff 0%,#fbfcfd 40%,#dfe7f1 100%);border-radius:3px 3px 0 0;"></div>
<span class="t" style="left:1674.5px;top:518.64px;font-size:12px;color:#1c6cbf;letter-spacing:-0.337px;font-weight:bold;">Arc</span>
<svg style="left:1879px;top:515px" width="17" height="17" viewBox="0 0 17 17" ><circle cx="8.500" cy="8.500" r="7.500" fill="#fff" stroke="#c5d3e3"/><path d="M5.500 8l3-3 3 3 M5.500 12l3-3 3 3" fill="none" stroke="#1c5aa8" stroke-width="1.500"/></svg>
<div style="left:1661px;top:611px;width:241px;height:90px;background:#f2f4f9;border-radius:3px 3px 0 0;border-left:1px solid #fff;border-right:1px solid #fff;box-sizing:border-box;"></div>
<div style="left:1661px;top:611px;width:241px;height:25px;background:linear-gradient(to right,#ffffff 0%,#fbfcfd 40%,#dfe7f1 100%);border-radius:3px 3px 0 0;"></div>
<span class="t" style="left:1674.5px;top:618.64px;font-size:12px;color:#1c6cbf;letter-spacing:-0.203px;font-weight:bold;">Curve</span>
<svg style="left:1879px;top:615px" width="17" height="17" viewBox="0 0 17 17" ><circle cx="8.500" cy="8.500" r="7.500" fill="#fff" stroke="#c5d3e3"/><path d="M5.500 8l3-3 3 3 M5.500 12l3-3 3 3" fill="none" stroke="#1c5aa8" stroke-width="1.500"/></svg>
<div style="left:1700px;top:216px;width:28px;height:28px;background:#ffc26e;border:1px solid #00007c;box-sizing:border-box;"></div>
<div style="left:1728px;top:216px;width:28px;height:28px;background:#ffc26e;border:1px solid #00007c;box-sizing:border-box;"></div>
<div style="left:1784px;top:216px;width:28px;height:28px;background:#ffc26e;border:1px solid #00007c;box-sizing:border-box;"></div>
<div style="left:1672px;top:244px;width:28px;height:28px;background:#ffc26e;border:1px solid #00007c;box-sizing:border-box;"></div>
<div style="left:1728px;top:272px;width:28px;height:28px;background:#ffc26e;border:1px solid #00007c;box-sizing:border-box;"></div>
<div style="left:1659px;top:701px;width:261px;height:2px;background:#f0f0f0;"></div>
<div style="left:1659px;top:702px;width:61px;height:25px;background:#fcfcfc;border:1px solid #b2b2b2;border-top:none;box-sizing:border-box;"></div>
<span class="t" style="left:1683.5px;top:708.84px;font-size:12px;color:#111;letter-spacing:0.097px;">Tools</span>
<div style="left:1720px;top:705px;width:65px;height:20px;background:linear-gradient(#eeeeee,#e6e6e6);border-right:1px solid #b8b8b8;border-bottom:1px solid #b8b8b8;box-sizing:border-box;"></div>
<span class="t" style="left:1742px;top:707.84px;font-size:12px;color:#111;letter-spacing:-0.565px;">Selec...</span>
<div style="left:1786px;top:705px;width:61px;height:20px;background:linear-gradient(#eeeeee,#e6e6e6);border-right:1px solid #b8b8b8;border-bottom:1px solid #b8b8b8;box-sizing:border-box;"></div>
<span class="t" style="left:1809.3px;top:707.84px;font-size:12px;color:#111;letter-spacing:-0.307px;">Blocks</span>
<div style="left:1848px;top:705px;width:64px;height:20px;background:linear-gradient(#eeeeee,#e6e6e6);border-right:1px solid #b8b8b8;border-bottom:1px solid #b8b8b8;box-sizing:border-box;"></div>
<span class="t" style="left:1871.4px;top:707.84px;font-size:12px;color:#111;letter-spacing:-0.391px;">Varia...</span>
<div style="left:1659px;top:732px;width:261px;height:22px;background:linear-gradient(#bccbdb,#dbe5f0);border-top:1px solid #3c3c3c;border-left:1px solid #3c3c3c;border-right:1px solid #3c3c3c;box-sizing:border-box;"></div>
<span class="t" style="left:1663.6px;top:737.04px;font-size:12px;color:#505866;letter-spacing:-0.045px;">Measurement Info</span>
<div style="left:1903px;top:735px;width:14px;height:14px;background:#b2b2b2;border:1px solid #ececec;box-sizing:border-box;"></div>
<svg style="left:1903px;top:735px" width="14" height="14" viewBox="0 0 14 14" ><path d="M3.700 3.700l6.600 6.600 M10.300 3.700l-6.600 6.600" stroke="#fff" stroke-width="2.200"/></svg>
<svg style="left:1882px;top:734px" width="18" height="17" viewBox="0 0 18 17" ><path d="M1 16l4.500-4.500" stroke="#8f8f8f" stroke-width="1.600"/><ellipse cx="8" cy="9.500" rx="6.300" ry="5" transform="rotate(-38 8 9.500)" fill="#8c8c8c"/><ellipse cx="8.700" cy="8.800" rx="5.500" ry="4.200" transform="rotate(-38 8.700 8.800)" fill="#c9c9c9"/><ellipse cx="7.500" cy="8" rx="2.800" ry="1.800" transform="rotate(-38 7.500 8)" fill="#e8e8e8"/><circle cx="12.700" cy="5" r="4.400" fill="#9a9a9a"/><circle cx="12.900" cy="4.700" r="3.800" fill="#dadada"/><circle cx="13.500" cy="3.900" r="1.900" fill="#fdfdfd"/></svg>
<div style="left:1664px;top:761px;width:23px;height:21px;background:#f6f6f6;border-top:1px solid #c9c9c9;border-left:1px solid #d8d8d8;box-sizing:border-box;"></div>
<svg style="left:1670px;top:768px" width="12" height="11" viewBox="0 0 12 11" ><rect x="0.500" y="0.500" width="11" height="10" fill="#fff" stroke="#000" stroke-width="1.200"/><path d="M2 3h1.500M5 3h5M2 5.500h1.500M5 5.500h5M2 8h1.500M5 8h5" stroke="#000" stroke-width="1"/></svg>
<svg style="left:1694px;top:768px" width="10" height="10" viewBox="0 0 10 10" ><path d="M1 1l8 8M9 1l-8 8" stroke="#3c3c3c" stroke-width="2"/></svg>
<div style="left:1663px;top:786px;width:253px;height:166px;background:#fff;border:1px solid #ababab;box-sizing:border-box;"></div>
<div style="left:1898px;top:787px;width:17px;height:164px;background:#f0f0f0;"></div>
<svg style="left:1902px;top:794px" width="10" height="7" viewBox="0 0 10 7" ><path d="M1 5.500l4-4 4 4" fill="none" stroke="#c2c2c2" stroke-width="1.500"/></svg>
<svg style="left:1902px;top:938px" width="10" height="7" viewBox="0 0 10 7" ><path d="M1 1.500l4 4 4-4" fill="none" stroke="#c2c2c2" stroke-width="1.500"/></svg>
<svg style="left:13px;top:50px" width="16" height="16" viewBox="0 0 16 16" ><path d="M3.500 1.500h6l3 3v10h-9z" fill="#fff" stroke="#1a1a1a" stroke-width="1"/><path d="M9.500 1.500v3h3" fill="none" stroke="#1a1a1a" stroke-width="1" /></svg>
<svg style="left:35px;top:50px" width="16" height="16" viewBox="0 0 16 16" ><path d="M1.500 13.500v-8h4l1 1.500h5v6.500z" fill="#f4f0a0" stroke="#3a3a10" stroke-width="1"/><path d="M1.500 13.500l3-5h10l-3.500 5z" fill="#8f8f3c" stroke="#3a3a10" stroke-width="1"/><path d="M9 3.500q3-2.500 5 .5M14 4l.3-2.200M14 4l-2.200-.2" fill="none" stroke="#1a1a1a" stroke-width="1" /></svg>
<svg style="left:58px;top:50px" width="16" height="16" viewBox="0 0 16 16" ><rect x="1.5" y="1.5" width="13" height="13" fill="#8d8d35" stroke="#3a3a10" stroke-width="1"/><rect x="4" y="2" width="8" height="6" fill="#d4d4d4" stroke="#555" stroke-width="1"/><rect x="4.5" y="10.5" width="7" height="4" fill="#3a3a3a"/><rect x="9" y="11.5" width="1.5" height="2.5" fill="#d0d0d0"/></svg>
<div style="left:78px;top:49px;width:1px;height:18px;background:#8e8e8e;"></div>
<svg style="left:85px;top:50px" width="16" height="16" viewBox="0 0 16 16" ><path d="M4.500 6.500l1.500-5h6l-1 5z" fill="#fff" stroke="#1a1a1a" stroke-width="1"/><path d="M7 3.500h3.500M6.500 5h3.500" fill="none" stroke="#777" stroke-width="1" /><path d="M1.500 8.500q0-2 2-2h9q2 0 2 2v3.500h-13z" fill="#d8d8d8" stroke="#1a1a1a" stroke-width="1"/><rect x="1.5" y="11.5" width="13" height="2.5" fill="#a8a8a8" stroke="#1a1a1a" stroke-width="1"/><rect x="8" y="10" width="3" height="1" fill="#f0e000"/><path d="M12.500 6.500l2.500-1.500v5l-1.500 1" fill="none" stroke="#1a1a1a" stroke-width="1" /><path d="M3 14.500h10" fill="none" stroke="#1a1a1a" stroke-width="1" /></svg>
<svg style="left:107px;top:50px" width="16" height="16" viewBox="0 0 16 16" ><path d="M2.500 1.500h6l3 3v10h-9z" fill="#fff" stroke="#1a1a1a" stroke-width="1"/><path d="M8.500 1.500v3h3" fill="none" stroke="#1a1a1a" stroke-width="1" /><circle cx="10" cy="9.5" r="3" fill="#9fe8f0" stroke="#555" stroke-width="1.2" /><path d="M12.200 11.700l3 3" fill="none" stroke="#1a1a1a" stroke-width="1.8" /></svg>
<div style="left:128px;top:49px;width:1px;height:18px;background:#8e8e8e;"></div>
<svg style="left:135px;top:50px" width="16" height="16" viewBox="0 0 16 16" ><path d="M6 1.500l3 8M10.500 1.500l-3 8" fill="none" stroke="#9a9a9a" stroke-width="1.1" /><circle cx="5.5" cy="12" r="2" fill="none" stroke="#9a9a9a" stroke-width="1.1" /><circle cx="10.5" cy="12" r="2" fill="none" stroke="#9a9a9a" stroke-width="1.1" /></svg>
<svg style="left:157px;top:50px" width="16" height="16" viewBox="0 0 16 16" ><path d="M1.500 1.500h5l2 2v7h-7z" fill="#fff" stroke="#1a1a1a" stroke-width="1"/><path d="M3 4.500h3M3 6.500h4M3 8.500h4" fill="none" stroke="#1a1a1a" stroke-width="1" /><path d="M7.500 5.500h5l2 2v7h-7z" fill="#fff" stroke="#22229a" stroke-width="1"/><path d="M9 8.500h3M9 10.500h4M9 12.500h4" fill="none" stroke="#22229a" stroke-width="1" /></svg>
<svg style="left:179px;top:50px" width="16" height="16" viewBox="0 0 16 16" ><rect x="1.5" y="3.5" width="11" height="11" fill="#c9c9c9" stroke="#a4a4a4" stroke-width="1"/><rect x="4.5" y="2" width="5" height="3" fill="#c9c9c9" stroke="#a4a4a4" stroke-width="1"/><rect x="7.5" y="8.5" width="8" height="6" fill="#efefef" stroke="#a4a4a4" stroke-width="1"/><path d="M9 11h4M9 13h3" fill="none" stroke="#a4a4a4" stroke-width="1" /></svg>
<svg style="left:201px;top:50px" width="16" height="16" viewBox="0 0 16 16" ><path d="M10.500 5l3.500-4 1.500 1.500-3.500 4z" fill="#a6a6a6" stroke="#909090" stroke-width="1"/><path d="M2 10.500l7.500-6 3.500 3.500-5.500 7.500z" fill="#d9d9d9" stroke="#a8a8a8" stroke-width="1"/><path d="M4 11l4 4M6 9.500l4 4" fill="none" stroke="#b4b4b4" stroke-width="1" /></svg>
<div style="left:222px;top:49px;width:1px;height:18px;background:#8e8e8e;"></div>
<svg style="left:229px;top:50px" width="16" height="16" viewBox="0 0 16 16" ><path d="M3 8q1-4.500 6-4.500q5 0 5 4.500q0 3-2.500 4.500" fill="none" stroke="#2222cc" stroke-width="1.5" /><path d="M1.500 5l5 1-3.500 4z" fill="#2222cc"/></svg>
<svg style="left:252px;top:50px" width="16" height="16" viewBox="0 0 16 16" ><path d="M13 8q-1-4.500-6-4.500q-5 0-5 4.500q0 3 2.500 4.500" fill="none" stroke="#a4a4a4" stroke-width="1.5" /><path d="M14.500 5l-5 1 3.500 4z" fill="#a4a4a4"/></svg>
<div style="left:272px;top:49px;width:1px;height:18px;background:#8e8e8e;"></div>
<svg style="left:279px;top:50px" width="16" height="16" viewBox="0 0 16 16" ><circle cx="9.500" cy="6.500" r="5.500" fill="none" stroke="#1a1a1a" stroke-width="1.1" stroke-dasharray="3 1.2"/><path d="M5.500 10.500l-4 4" fill="none" stroke="#555" stroke-width="2.2" /><path d="M5 11l-3.500 3.500" fill="none" stroke="#bbb" stroke-width="0.8" /><path d="M6.500 6.500h6M9.500 3.500v6" fill="none" stroke="#1a1a1a" stroke-width="1.2" /></svg>
<svg style="left:301px;top:50px" width="16" height="16" viewBox="0 0 16 16" ><circle cx="9.500" cy="6.500" r="5.500" fill="none" stroke="#1a1a1a" stroke-width="1.1" stroke-dasharray="3 1.2"/><path d="M5.500 10.500l-4 4" fill="none" stroke="#555" stroke-width="2.2" /><path d="M5 11l-3.500 3.500" fill="none" stroke="#bbb" stroke-width="0.8" /><path d="M6.500 6.500h6" fill="none" stroke="#1a1a1a" stroke-width="1.2" /></svg>
<svg style="left:323px;top:50px" width="16" height="16" viewBox="0 0 16 16" ><path d="M1.500 12.500v-11h10v4" fill="none" stroke="#1a1a1a" stroke-width="1.2" stroke-dasharray="1.500 1.200"/><path d="M1.500 12.500h4" fill="none" stroke="#1a1a1a" stroke-width="1.2" stroke-dasharray="1.500 1.200"/><path d="M6 14q-1-5 5-6" fill="none" stroke="#1a1a1a" stroke-width="1.1" stroke-dasharray="2.500 1"/><path d="M9.500 12.500h5M12 10v5" fill="none" stroke="#1a1a1a" stroke-width="1.2" /></svg>
<svg style="left:345px;top:50px" width="16" height="16" viewBox="0 0 16 16" ><rect x="1.5" y="2.5" width="13" height="11" fill="#fff" stroke="#1a1a1a" stroke-width="1.3"/><path d="M3 6.500h4M13 6.500h-4" fill="none" stroke="#2222cc" stroke-width="1.2" /><path d="M2.300 6.500l2.500-2v4z M13.700 6.500l-2.500-2v4z" fill="#2222cc"/></svg>
<svg style="left:367px;top:50px" width="16" height="16" viewBox="0 0 16 16" ><rect x="1" y="2" width="14" height="12" fill="#a9a9a9"/><rect x="5.5" y="4.5" width="5" height="7" fill="#e4e4e4" stroke="#8f8f8f" stroke-width="1"/><path d="M7 6.500h2M7 8.500h2M7 10.500h2" fill="none" stroke="#8f8f8f" stroke-width="1" /></svg>
<svg style="left:389px;top:50px" width="16" height="16" viewBox="0 0 16 16" ><circle cx="9.5" cy="6.5" r="5.5" fill="none" stroke="#a8a8a8" stroke-width="1.1" stroke-dasharray="3 1.200"/><rect x="6.5" y="3.5" width="6" height="6" fill="#e8e8e8" stroke="#b0b0b0" stroke-width="1"/><path d="M5.500 10.500l-4 4" fill="none" stroke="#a0a0a0" stroke-width="2.2" /></svg>
<div style="left:410px;top:49px;width:1px;height:18px;background:#8e8e8e;"></div>
<svg style="left:417px;top:50px" width="16" height="16" viewBox="0 0 16 16" ><rect x="1.5" y="1.5" width="8" height="9" fill="#e0e0e0" stroke="#1a1a1a" stroke-width="1"/><path d="M3 4h3M3 6h3M3 8h3" fill="none" stroke="#1a1a1a" stroke-width="1.2" /><rect x="7" y="2.5" width="2" height="7" fill="#555"/><rect x="5.5" y="7.5" width="9" height="8" fill="#d8d8d8" stroke="#1a1a1a" stroke-width="1"/><circle cx="10" cy="11.5" r="2.5" fill="none" stroke="#1a1a1a" stroke-width="1" /><path d="M10 8.500v6M7 11.500h6" fill="none" stroke="#1a1a1a" stroke-width="0.8" /></svg>
<svg style="left:432px;top:65px" width="4" height="4" viewBox="0 0 4 4" ><path d="M4 0V4H0Z" fill="#000"/></svg>
<svg style="left:439px;top:50px" width="16" height="16" viewBox="0 0 16 16" ><rect x="7.5" y="1.5" width="8" height="7" fill="#e2e2e2" stroke="#a8a8a8" stroke-width="1"/><circle cx="12.5" cy="4" r="1.2" fill="#bdbdbd" /><path d="M8 8l3-3 2 2" fill="none" stroke="#a8a8a8" stroke-width="1" /><path d="M0.500 14.500v-7h4l1 1.500h6v5.500z" fill="#dcdcdc" stroke="#a8a8a8" stroke-width="1"/><path d="M0.500 14.500l3-4.500h10l-3 4.500z" fill="#e9e9e9" stroke="#a8a8a8" stroke-width="1"/></svg>
<svg style="left:454px;top:65px" width="4" height="4" viewBox="0 0 4 4" ><path d="M4 0V4H0Z" fill="#000"/></svg>
<svg style="left:461px;top:50px" width="16" height="16" viewBox="0 0 16 16" ><path d="M0.500 4.500l9 9" fill="none" stroke="#38d838" stroke-width="1" /><path d="M8 8.500l5.500-6.500 2 2-5.500 6.500-2.800.8z" fill="#fff" stroke="#1a1a1a" stroke-width="1"/><path d="M9.500 8l4.500-5.500M10.500 9l4.500-5.500" fill="none" stroke="#1a1a1a" stroke-width="0.8" /><path d="M8 8.500l2 2-2.800.8z" fill="#1a1a1a"/></svg>
<div style="left:482px;top:49px;width:1px;height:18px;background:#8e8e8e;"></div>
<svg style="left:489px;top:50px" width="16" height="16" viewBox="0 0 16 16" ><text x="0.2" y="6.5" font-size="6.5" fill="#1a1a1a" font-weight="bold" text-anchor="start" font-family="Liberation Sans, sans-serif">ABC</text><path d="M2.500 10.500l3 3.500 9-10" fill="none" stroke="#2222aa" stroke-width="1.8" /></svg>
<svg style="left:504px;top:65px" width="4" height="4" viewBox="0 0 4 4" ><path d="M4 0V4H0Z" fill="#000"/></svg>
<div style="left:510px;top:49px;width:1px;height:18px;background:#8e8e8e;"></div>
<svg style="left:517px;top:50px" width="16" height="16" viewBox="0 0 16 16" ><path d="M1 2l5 5M6 2l-5 5" fill="none" stroke="#d6d6e6" stroke-width="1" /><rect x="10.5" y="5.5" width="1.3" height="1.3" fill="#2222ee"/><rect x="13.5" y="5.5" width="1.3" height="1.3" fill="#2222ee"/><rect x="4.5" y="8.5" width="1.3" height="1.3" fill="#2222ee"/><rect x="7.5" y="8.5" width="1.3" height="1.3" fill="#2222ee"/><rect x="10.5" y="8.5" width="1.3" height="1.3" fill="#2222ee"/><rect x="13.5" y="8.5" width="1.3" height="1.3" fill="#2222ee"/><rect x="4.5" y="11.5" width="1.3" height="1.3" fill="#2222ee"/><rect x="7.5" y="11.5" width="1.3" height="1.3" fill="#2222ee"/><rect x="10.5" y="11.5" width="1.3" height="1.3" fill="#2222ee"/><rect x="13.5" y="11.5" width="1.3" height="1.3" fill="#2222ee"/><rect x="4.5" y="14" width="1.3" height="1.3" fill="#2222ee"/><rect x="7.5" y="14" width="1.3" height="1.3" fill="#2222ee"/><rect x="10.5" y="14" width="1.3" height="1.3" fill="#2222ee"/><rect x="13.5" y="14" width="1.3" height="1.3" fill="#2222ee"/></svg>
<svg style="left:532px;top:65px" width="4" height="4" viewBox="0 0 4 4" ><path d="M4 0V4H0Z" fill="#000"/></svg>
<div style="left:536px;top:47px;width:22px;height:22px;background:#bfdcf4;border:1px solid #8cc4f0;box-sizing:border-box;"></div>
<svg style="left:539px;top:50px" width="16" height="16" viewBox="0 0 16 16" ><path d="M3.500 1v14.500M1 12.500h14" fill="none" stroke="#000" stroke-width="1.4" /><path d="M5 3.500h6M12.500 5v6" fill="none" stroke="#fff" stroke-width="1.2" stroke-dasharray="1.200 1.200"/><rect x="11.5" y="2.5" width="2.5" height="2.5" fill="#fff" stroke="#e00000" stroke-width="1.2"/></svg>
<svg style="left:554px;top:65px" width="4" height="4" viewBox="0 0 4 4" ><path d="M4 0V4H0Z" fill="#000"/></svg>
<svg style="left:561px;top:50px" width="16" height="16" viewBox="0 0 16 16" ><path d="M3 5.500l5-3.500q3 .5 5.500 5.500q1 2.500-1 4l-2.500 2q-2 1-4-1z" fill="#fff" stroke="#3a3a3a" stroke-width="1"/><path d="M3.500 6l4.500 5M5.500 4l4.500 5" fill="none" stroke="#3a3a3a" stroke-width="0.9" /><path d="M3 2.500h5" fill="none" stroke="#1a1a1a" stroke-width="1" stroke-dasharray="1.500 1"/><path d="M2.500 3.500l3 3" fill="none" stroke="#3a3a3a" stroke-width="1" /><text x="11" y="5" font-size="5.5" fill="#e00000" font-weight="bold" text-anchor="start" font-family="Liberation Sans, sans-serif">Y</text><text x="0" y="15.5" font-size="6.5" fill="#e00000" font-weight="bold" text-anchor="start" font-family="Liberation Sans, sans-serif">x</text></svg>
<svg style="left:576px;top:65px" width="4" height="4" viewBox="0 0 4 4" ><path d="M4 0V4H0Z" fill="#000"/></svg>
<svg style="left:583px;top:50px" width="16" height="16" viewBox="0 0 16 16" ><path d="M2.500 1.500l5.500 4v9.500l-5.500-4z" fill="none" stroke="#e02020" stroke-width="1.1" /><path d="M5.500 7l4-3.500 5 4v5.500l-4 2.500h-5zM9.500 3.500v6.500l5 3.500M9.500 10l-4 4.500" fill="none" stroke="#5050b0" stroke-width="1" /><path d="M10.500 9h3.500v4.500l-3.500 1.500z" fill="#e8e8f8" stroke="#3a3a9a" stroke-width="1"/></svg>
<svg style="left:598px;top:65px" width="4" height="4" viewBox="0 0 4 4" ><path d="M4 0V4H0Z" fill="#000"/></svg>
<div style="left:602px;top:47px;width:22px;height:22px;background:#bfdcf4;border:1px solid #8cc4f0;box-sizing:border-box;"></div>
<svg style="left:605px;top:50px" width="16" height="16" viewBox="0 0 16 16" ><path d="M1.500 8l5-4 1.500 1.500v9.500h-6.500z" fill="#f01010" stroke="#2a0000" stroke-width="1"/><path d="M8 5.500l6-1.500v7.500l-6 4z" fill="#a00000" stroke="#2a0000" stroke-width="1"/><path d="M3 1l2-1 6 7-2 1.500z" fill="#f8f8f8" stroke="#1a1a1a" stroke-width="1"/><path d="M9 3.500l3-2.500 3 1.500v3l-2 1v5h-2v-5z" fill="#fff" stroke="#1a1a1a" stroke-width="1"/><rect x="9.5" y="4" width="3" height="1.2" fill="#c8b820"/></svg>
<svg style="left:620px;top:65px" width="4" height="4" viewBox="0 0 4 4" ><path d="M4 0V4H0Z" fill="#000"/></svg>
<div style="left:627px;top:49px;width:1px;height:18px;background:#8e8e8e;"></div>
<svg style="left:633px;top:50px" width="16" height="16" viewBox="0 0 16 16" ><rect x="7.5" y="1.5" width="8" height="6" fill="#fff" stroke="#2222aa" stroke-width="1"/><rect x="7.5" y="1.5" width="8" height="2" fill="#2222aa"/><path d="M1.500 14.500v-7h4l1 1.500h4v5.500z" fill="#f4f0a0" stroke="#3a3a10" stroke-width="1"/><path d="M1.500 14.500l3-4.500h9l-3 4.500z" fill="#8f8f3c" stroke="#3a3a10" stroke-width="1"/><path d="M2 6q1-3 4-2.500M6 3.500l-2.200-.8M6 3.500l-1.300 1.800" fill="none" stroke="#1a1a1a" stroke-width="1" /></svg>
<svg style="left:648px;top:65px" width="4" height="4" viewBox="0 0 4 4" ><path d="M4 0V4H0Z" fill="#000"/></svg>
<svg style="left:655px;top:50px" width="16" height="16" viewBox="0 0 16 16" ><path d="M1.5 14V5" fill="none" stroke="#2222cc" stroke-width="1.3" /><path d="M-0.5 6l2-3 2 3z" fill="#2222cc"/><path d="M1.5 14H10.5" fill="none" stroke="#c03030" stroke-width="1.3" /><path d="M9.5 12l3 2-3 2z" fill="#c03030"/><path d="M1.5 14l3-2.500" fill="none" stroke="#00a040" stroke-width="1.2" /><path d="M6.500 4.500l3-3h5.500l-3 3z" fill="#70f0f0"/><rect x="6.5" y="4.5" width="5.5" height="5.5" fill="none" stroke="#1a1a1a" stroke-width="1.1"/><rect x="9.5" y="1.5" width="5.5" height="5.5" fill="none" stroke="#1a1a1a" stroke-width="0.8800000000000001"/><path d="M6.5 4.5l3 -3M12.0 4.5l3 -3M6.5 10.0l3 -3M12.0 10.0l3 -3" fill="none" stroke="#1a1a1a" stroke-width="0.8800000000000001" /><rect x="8" y="6" width="3" height="3" fill="#ddd" stroke="#555" stroke-width="0.7"/></svg>
<svg style="left:670px;top:65px" width="4" height="4" viewBox="0 0 4 4" ><path d="M4 0V4H0Z" fill="#000"/></svg>
<svg style="left:677px;top:50px" width="16" height="16" viewBox="0 0 16 16" ><path d="M8 3.500l4 4.500-4 4.500-4-4.500z" fill="#d0d0d0" stroke="#555" stroke-width="1"/><path d="M8 1v3M8 12v3M1 8h3M12 8h3" fill="none" stroke="#2222ee" stroke-width="1.2" /><path d="M5 2q3-2 6 0M5 14q3 2 6 0M2 5q-2 3 0 6M14 5q2 3 0 6" fill="none" stroke="#2222ee" stroke-width="1.2" /><path d="M4 1l2.500.5-1.500 2z M12 15l-2.500-.5 1.500-2z M1 12l.5-2.500 2 1.500z M15 4l-.5 2.500-2-1.500z" fill="#2222ee"/></svg>
<svg style="left:692px;top:65px" width="4" height="4" viewBox="0 0 4 4" ><path d="M4 0V4H0Z" fill="#000"/></svg>
<svg style="left:699px;top:50px" width="16" height="16" viewBox="0 0 16 16" ><path d="M3.500 2q-3 6 0 12" fill="none" stroke="#2222ee" stroke-width="1.1" stroke-dasharray="2 1.200"/><path d="M1.500 3.500l2-2 1 2.500z" fill="#2222ee"/><rect x="6.5" y="6.5" width="9" height="6" fill="#909090" stroke="#1a1a1a" stroke-width="1"/><rect x="8" y="5" width="3" height="1.5" fill="#1a1a1a"/><circle cx="11" cy="9.5" r="1.8" fill="#d0d0d0" stroke="#1a1a1a" stroke-width="1" /><path d="M3.500 9.500h3" fill="none" stroke="#555" stroke-width="0.8" /></svg>
<svg style="left:714px;top:65px" width="4" height="4" viewBox="0 0 4 4" ><path d="M4 0V4H0Z" fill="#000"/></svg>
<div style="left:718px;top:47px;width:22px;height:22px;background:#bfdcf4;border:1px solid #8cc4f0;box-sizing:border-box;"></div>
<svg style="left:721px;top:50px" width="16" height="16" viewBox="0 0 16 16" ><ellipse cx="8" cy="12" rx="7.3" ry="2.6" fill="#fff" stroke="#1a1a9a" stroke-width="1" /><ellipse cx="8" cy="11.8" rx="3.3" ry="1" fill="#1a1a9a" /><path d="M3.500 5q0 5.500 2.800 6.500h3.400q2.800-1 2.800-6.500z" fill="#b8b8c8" stroke="#1a1a9a" stroke-width="1"/><ellipse cx="8" cy="5" rx="4.5" ry="1.6" fill="#fff" stroke="#1a1a9a" stroke-width="1" /><path d="M12.500 6q3-.5 2.500 1.800q-.5 1.800-3.300 2.200" fill="none" stroke="#1a1a9a" stroke-width="1.1" /><ellipse cx="8" cy="4.5" rx="3.5" ry="1" fill="#1a1a9a" /></svg>
<svg style="left:736px;top:65px" width="4" height="4" viewBox="0 0 4 4" ><path d="M4 0V4H0Z" fill="#000"/></svg>
<div style="left:742px;top:49px;width:1px;height:18px;background:#8e8e8e;"></div>
<svg style="left:749px;top:50px" width="16" height="16" viewBox="0 0 16 16" ><path d="M2.500 3.500h7l2 2v9h-9z" fill="#fff" stroke="#1a1a1a" stroke-width="1.2"/><path d="M7 4l4-3.500 2.500.3v3l-5 4.500z" fill="#e8e8e8" stroke="#1a1a1a" stroke-width="1"/><path d="M8 4.500l2.500 2.500M9 3.500l2.500 2.500M10 2.500l2.500 2.500" fill="none" stroke="#1a1a1a" stroke-width="0.7" /><path d="M14.500 .5v4.500" fill="none" stroke="#2222aa" stroke-width="1.2" /></svg>
<svg style="left:764px;top:65px" width="4" height="4" viewBox="0 0 4 4" ><path d="M4 0V4H0Z" fill="#000"/></svg>
<svg style="left:771px;top:50px" width="16" height="16" viewBox="0 0 16 16" ><rect x="1.5" y="3.5" width="11" height="11" fill="#60f0f0" stroke="#1a1a1a" stroke-width="1.2"/><rect x="1.5" y="3.5" width="11" height="2" fill="#2222aa"/><rect x="4.5" y="8.5" width="5" height="5" fill="#e8e8e8" stroke="#999" stroke-width="1"/><path d="M7 4l4-3.500 2.500.3v3l-5 4.500z" fill="#e8e8e8" stroke="#1a1a1a" stroke-width="1"/><path d="M8 4.500l2.500 2.500M9 3.500l2.500 2.500M10 2.500l2.500 2.500" fill="none" stroke="#1a1a1a" stroke-width="0.7" /><path d="M14.500 .5v4.500" fill="none" stroke="#2222aa" stroke-width="1.2" /></svg>
<svg style="left:786px;top:65px" width="4" height="4" viewBox="0 0 4 4" ><path d="M4 0V4H0Z" fill="#000"/></svg>
<svg style="left:793px;top:50px" width="16" height="16" viewBox="0 0 16 16" ><rect x="1" y="6" width="2.5" height="9" fill="#d4d4d4"/><rect x="4" y="2" width="2.5" height="13" fill="#d4d4d4"/><rect x="7" y="4" width="2" height="11" fill="#d4d4d4"/><rect x="9.5" y="3" width="2" height="12" fill="#d4d4d4"/><rect x="12" y="5" width="2.5" height="10" fill="#d4d4d4"/><path d="M1 9h14M1 12h14" fill="none" stroke="#e6e6e6" stroke-width="1" /></svg>
<div style="left:812px;top:47px;width:22px;height:22px;background:#bfdcf4;border:1px solid #8cc4f0;box-sizing:border-box;"></div>
<svg style="left:815px;top:50px" width="16" height="16" viewBox="0 0 16 16" ><path d="M3.500 13.500v-11M3.500 13.500h11M3.500 13.500l5-4" fill="none" stroke="#000" stroke-width="1.4" /><path d="M1.500 4.500l2-3.500 2 3.500z M12.500 11.500l3 2-3 2z" fill="#000"/></svg>
<div style="left:836px;top:49px;width:1px;height:18px;background:#8e8e8e;"></div>
<svg style="left:843px;top:50px" width="16" height="16" viewBox="0 0 16 16" ><path d="M1.500 1.500v11l2.500-2.500 2 4.500 2-1-2-4.500h3.500z" fill="#1a1a1a"/><text x="8" y="12" font-size="14" fill="#2a2a9a" font-weight="bold" text-anchor="start" font-family="Liberation Sans, sans-serif">?</text></svg>
<svg style="left:858px;top:65px" width="4" height="4" viewBox="0 0 4 4" ><path d="M4 0V4H0Z" fill="#000"/></svg>
<svg style="left:877px;top:50px" width="16" height="16" viewBox="0 0 16 16" ><rect x="2.5" y="2.5" width="8" height="8" fill="none" stroke="#a0a0a0" stroke-width="1.3"/><rect x="5.5" y="5.5" width="8" height="8" fill="none" stroke="#a0a0a0" stroke-width="1.3"/><rect x="1.3" y="1.3" width="2.4" height="2.4" fill="#a0a0a0"/><rect x="9.3" y="1.3" width="2.4" height="2.4" fill="#a0a0a0"/><rect x="1.3" y="9.3" width="2.4" height="2.4" fill="#a0a0a0"/><rect x="4.3" y="12.3" width="2.4" height="2.4" fill="#a0a0a0"/><rect x="12.3" y="12.3" width="2.4" height="2.4" fill="#a0a0a0"/><rect x="12.3" y="4.3" width="2.4" height="2.4" fill="#a0a0a0"/><rect x="4.5" y="4.5" width="2.4" height="2.4" fill="#a0a0a0"/><rect x="12.3" y="8" width="2.4" height="2.4" fill="#a0a0a0"/></svg>
<svg style="left:899px;top:50px" width="16" height="16" viewBox="0 0 16 16" ><rect x="1.5" y="1.5" width="9" height="9" fill="none" stroke="#a8a8a8" stroke-width="1.2"/><rect x="5.5" y="5.5" width="9" height="9" fill="#f2f2f2" stroke="#a8a8a8" stroke-width="1.2"/><rect x="0.3" y="0.3" width="2.4" height="2.4" fill="#a0a0a0"/><rect x="13.3" y="1" width="2.4" height="2.4" fill="#a0a0a0"/><rect x="1" y="13.3" width="2.4" height="2.4" fill="#a0a0a0"/><rect x="13.3" y="13.3" width="2.4" height="2.4" fill="#a0a0a0"/></svg>
<svg style="left:921px;top:50px" width="16" height="16" viewBox="0 0 16 16" ><rect x="1.5" y="1.5" width="7" height="7" fill="none" stroke="#a8a8a8" stroke-width="1.1"/><path d="M3 3l4 4M7 4.500v2.500h-2.500" fill="none" stroke="#a8a8a8" stroke-width="1" /><rect x="7.5" y="8.5" width="4" height="4" fill="none" stroke="#a0a0a0" stroke-width="1"/><rect x="9.5" y="10.5" width="4" height="4" fill="none" stroke="#a0a0a0" stroke-width="1"/><rect x="12" y="6.5" width="1.8" height="1.8" fill="#a0a0a0"/><rect x="6" y="13.5" width="1.8" height="1.8" fill="#a0a0a0"/><rect x="14" y="13.5" width="1.8" height="1.8" fill="#a0a0a0"/><rect x="14" y="9" width="1.8" height="1.8" fill="#a0a0a0"/></svg>
<svg style="left:955px;top:50px" width="16" height="16" viewBox="0 0 16 16" ><ellipse cx="8" cy="12" rx="7.3" ry="2.6" fill="#dedede" stroke="#b4b4b4" stroke-width="1" /><ellipse cx="8" cy="11.8" rx="3.3" ry="1" fill="#b4b4b4" /><path d="M3.500 5q0 5.500 2.800 6.500h3.400q2.800-1 2.800-6.500z" fill="#d4d4d4" stroke="#b4b4b4" stroke-width="1"/><ellipse cx="8" cy="5" rx="4.5" ry="1.6" fill="#e8e8e8" stroke="#b4b4b4" stroke-width="1" /><path d="M12.500 6q3-.5 2.500 1.800q-.5 1.800-3.300 2.200" fill="none" stroke="#b4b4b4" stroke-width="1.1" /></svg>
<div style="left:974px;top:47px;width:22px;height:22px;background:#bfdcf4;border:1px solid #8cc4f0;box-sizing:border-box;"></div>
<svg style="left:977px;top:50px" width="16" height="16" viewBox="0 0 16 16" ><ellipse cx="8" cy="12" rx="7.3" ry="2.6" fill="#fff" stroke="#1a1a9a" stroke-width="1" /><ellipse cx="8" cy="11.8" rx="3.3" ry="1" fill="#1a1a9a" /><path d="M3.500 5q0 5.500 2.800 6.500h3.400q2.800-1 2.800-6.500z" fill="#b8b8c8" stroke="#1a1a9a" stroke-width="1"/><ellipse cx="8" cy="5" rx="4.5" ry="1.6" fill="#fff" stroke="#1a1a9a" stroke-width="1" /><path d="M12.500 6q3-.5 2.500 1.800q-.5 1.800-3.300 2.200" fill="none" stroke="#1a1a9a" stroke-width="1.1" /><ellipse cx="8" cy="4.5" rx="3.5" ry="1" fill="#1a1a9a" /></svg>
<svg style="left:999px;top:50px" width="16" height="16" viewBox="0 0 16 16" ><ellipse cx="8" cy="12" rx="7.3" ry="2.6" fill="#fff" stroke="#1a1a1a" stroke-width="1" /><ellipse cx="8" cy="11.8" rx="3.3" ry="1" fill="#1a1a1a" /><path d="M3.500 5q0 5.500 2.800 6.500h3.400q2.800-1 2.800-6.500z" fill="#fff" stroke="#1a1a1a" stroke-width="1"/><ellipse cx="8" cy="5" rx="4.5" ry="1.6" fill="#fff" stroke="#1a1a1a" stroke-width="1" /><path d="M12.500 6q3-.5 2.500 1.800q-.5 1.800-3.300 2.200" fill="none" stroke="#1a1a1a" stroke-width="1.1" /></svg>
<svg style="left:1021px;top:50px" width="16" height="16" viewBox="0 0 16 16" ><ellipse cx="8" cy="12" rx="7.3" ry="2.6" fill="#fff" stroke="#1a1a1a" stroke-width="1" /><ellipse cx="8" cy="11.8" rx="3.3" ry="1" fill="#1a1a1a" /><path d="M3.500 5q0 5.500 2.800 6.500h3.400q2.800-1 2.800-6.500z" fill="#fff" stroke="#1a1a1a" stroke-width="1"/><ellipse cx="8" cy="5" rx="4.5" ry="1.6" fill="#fff" stroke="#1a1a1a" stroke-width="1" /><path d="M12.500 6q3-.5 2.500 1.800q-.5 1.800-3.300 2.200" fill="none" stroke="#1a1a1a" stroke-width="1.1" /><path d="M3.200 7.500q5 2 9.600 0" fill="none" stroke="#1a1a1a" stroke-width="1" /></svg>
<svg style="left:1062px;top:50px" width="16" height="16" viewBox="0 0 16 16" ><path d="M1.5 14V5" fill="none" stroke="#2222cc" stroke-width="1.3" /><path d="M-0.5 6l2-3 2 3z" fill="#2222cc"/><path d="M1.5 14H10.5" fill="none" stroke="#c03030" stroke-width="1.3" /><path d="M9.5 12l3 2-3 2z" fill="#c03030"/><path d="M1.5 14l3-2.500" fill="none" stroke="#00a040" stroke-width="1.2" /><path d="M6.500 4.500l3-3h5.500l-3 3z" fill="#70f0f0"/><rect x="6.5" y="4.5" width="5.5" height="5.5" fill="none" stroke="#1a1a1a" stroke-width="1.1"/><rect x="9.5" y="1.5" width="5.5" height="5.5" fill="none" stroke="#1a1a1a" stroke-width="0.8800000000000001"/><path d="M6.5 4.5l3 -3M12.0 4.5l3 -3M6.5 10.0l3 -3M12.0 10.0l3 -3" fill="none" stroke="#1a1a1a" stroke-width="0.8800000000000001" /><rect x="8" y="6" width="3" height="3" fill="#ddd" stroke="#555" stroke-width="0.7"/></svg>
<svg style="left:1085px;top:50px" width="16" height="16" viewBox="0 0 16 16" ><path d="M1.5 5.5l4 -4v9l-4 4z" fill="#50f0f0"/><path d="M5.5 10.5h9M5.5 1.5v9M1.5 14.5l4 -4" fill="none" stroke="#888" stroke-width="0.9" /><rect x="1.5" y="5.5" width="9" height="9" fill="none" stroke="#1a1a1a" stroke-width="1.3"/><path d="M1.5 5.5l4 -4h9v9l-4 4M10.5 5.5l4 -4" fill="none" stroke="#1a1a1a" stroke-width="1.2" /></svg>
<svg style="left:1107px;top:50px" width="16" height="16" viewBox="0 0 16 16" ><rect x="1.5" y="5.5" width="9" height="9" fill="#50f0f0"/><path d="M5.5 10.5h9M5.5 1.5v9M1.5 14.5l4 -4" fill="none" stroke="#50f0f0" stroke-width="0.9" /><rect x="1.5" y="5.5" width="9" height="9" fill="none" stroke="#1a1a1a" stroke-width="1.3"/><path d="M1.5 5.5l4 -4h9v9l-4 4M10.5 5.5l4 -4" fill="none" stroke="#1a1a1a" stroke-width="1.2" /></svg>
<svg style="left:1129px;top:50px" width="16" height="16" viewBox="0 0 16 16" ><path d="M1.5 14.5l4 -4h9l-4 4z" fill="#50f0f0"/><path d="M5.5 10.5h9M5.5 1.5v9M1.5 14.5l4 -4" fill="none" stroke="#888" stroke-width="0.9" /><rect x="1.5" y="5.5" width="9" height="9" fill="none" stroke="#1a1a1a" stroke-width="1.3"/><path d="M1.5 5.5l4 -4h9v9l-4 4M10.5 5.5l4 -4" fill="none" stroke="#1a1a1a" stroke-width="1.2" /></svg>
<svg style="left:1151px;top:50px" width="16" height="16" viewBox="0 0 16 16" ><rect x="5.5" y="1.5" width="9" height="6" fill="#50f0f0"/><path d="M5.5 10.5h9M5.5 1.5v9M1.5 14.5l4 -4" fill="none" stroke="#888" stroke-width="0.9" /><rect x="1.5" y="5.5" width="9" height="9" fill="none" stroke="#1a1a1a" stroke-width="1.3"/><path d="M1.5 5.5l4 -4h9v9l-4 4M10.5 5.5l4 -4" fill="none" stroke="#1a1a1a" stroke-width="1.2" /></svg>
<svg style="left:1173px;top:50px" width="16" height="16" viewBox="0 0 16 16" ><path d="M10.5 5.5l4 -4v9l-4 4z" fill="#50f0f0"/><path d="M5.5 10.5h9M5.5 1.5v9M1.5 14.5l4 -4" fill="none" stroke="#888" stroke-width="0.9" /><rect x="1.5" y="5.5" width="9" height="9" fill="none" stroke="#1a1a1a" stroke-width="1.3"/><path d="M1.5 5.5l4 -4h9v9l-4 4M10.5 5.5l4 -4" fill="none" stroke="#1a1a1a" stroke-width="1.2" /></svg>
<svg style="left:1195px;top:50px" width="16" height="16" viewBox="0 0 16 16" ><path d="M8 8l6-3v6.500l-6 3.500z" fill="#50d8e0"/><path d="M8 1.500l6 3.500v6.500l-6 3.500-6-3.500v-6.500z" fill="none" stroke="#262626" stroke-width="1" /><path d="M8 1v14.500" fill="none" stroke="#262626" stroke-width="0.85" /><path d="M2 5l6 3 6-3M2 11.500l6-3.500 6 3.500" fill="none" stroke="#aaa" stroke-width="0.7" /></svg>
<svg style="left:1217px;top:50px" width="16" height="16" viewBox="0 0 16 16" ><path d="M8 8l-6-3v6.500l6 3.500z" fill="#50d8e0"/><path d="M8 1.500l6 3.500v6.500l-6 3.500-6-3.500v-6.500z" fill="none" stroke="#262626" stroke-width="1" /><path d="M8 1v14.500" fill="none" stroke="#262626" stroke-width="0.85" /><path d="M2 5l6 3 6-3M2 11.500l6-3.500 6 3.500" fill="none" stroke="#aaa" stroke-width="0.7" /></svg>
<svg style="left:1239px;top:50px" width="16" height="16" viewBox="0 0 16 16" ><path d="M8 1.500l6 3.500v6.500l-6-3.500z" fill="#50d8e0"/><path d="M8 1.500l6 3.500v6.500l-6 3.500-6-3.500v-6.500z" fill="none" stroke="#262626" stroke-width="1" /><path d="M8 1v14.500" fill="none" stroke="#262626" stroke-width="0.85" /><path d="M2 5l6 3 6-3M2 11.500l6-3.500 6 3.500" fill="none" stroke="#aaa" stroke-width="0.7" /></svg>
<svg style="left:1262px;top:50px" width="16" height="16" viewBox="0 0 16 16" ><path d="M8 1.500l-6 3.500v6.500l6-3.500z" fill="#50d8e0"/><path d="M8 1.500l6 3.500v6.500l-6 3.500-6-3.500v-6.500z" fill="none" stroke="#262626" stroke-width="1" /><path d="M8 1v14.500" fill="none" stroke="#262626" stroke-width="0.85" /><path d="M2 5l6 3 6-3M2 11.500l6-3.500 6 3.500" fill="none" stroke="#aaa" stroke-width="0.7" /></svg>
<svg style="left:13px;top:76px" width="16" height="16" viewBox="0 0 16 16" ><path d="M2.500 6.500h8v8h-8z" fill="#fff" stroke="#1a1a1a" stroke-width="1.2"/><path d="M2.500 6.500l3-3h8l-3 3z" fill="#e8e8e8" stroke="#1a1a1a" stroke-width="1.1"/><path d="M10.500 6.500l3-3v8l-3 3z" fill="#9a9a9a" stroke="#1a1a1a" stroke-width="1.1"/><rect x="12.5" y="1.5" width="2" height="2" fill="#f4f4ff" stroke="#2020ff" stroke-width="1"/><rect x="12.5" y="8.5" width="2" height="2" fill="#f4f4ff" stroke="#2020ff" stroke-width="1"/><rect x="1.5" y="13.5" width="2" height="2" fill="#f4f4ff" stroke="#2020ff" stroke-width="1"/></svg>
<svg style="left:35px;top:76px" width="16" height="16" viewBox="0 0 16 16" ><path d="M2.500 5.500l5.500-3 5.500 3v7l-5.500 3-5.500-3z" fill="#fff" stroke="#1a1a1a" stroke-width="1.1"/><path d="M2.500 5.500l5.500-3 5.500 3-5.500 2.500z" fill="#c8c8c8" stroke="#1a1a1a" stroke-width="1"/><path d="M8 8l5.500-2.500v7l-5.500 3z" fill="#8a8a8a" stroke="#1a1a1a" stroke-width="1"/><rect x="12.5" y="3.5" width="2" height="2" fill="#f4f4ff" stroke="#2020ff" stroke-width="1"/><rect x="12.5" y="10.5" width="2" height="2" fill="#f4f4ff" stroke="#2020ff" stroke-width="1"/><rect x="1.5" y="10.5" width="2" height="2" fill="#f4f4ff" stroke="#2020ff" stroke-width="1"/><rect x="6.5" y="13.5" width="2" height="2" fill="#f4f4ff" stroke="#2020ff" stroke-width="1"/></svg>
<svg style="left:57px;top:76px" width="16" height="16" viewBox="0 0 16 16" ><circle cx="8" cy="8" r="6.5" fill="#b0b0b0" stroke="#1a1a1a" stroke-width="1.2" /><circle cx="6.5" cy="9" r="4" fill="#e0e0e0" /><circle cx="6" cy="9.5" r="2" fill="#fff" /><rect x="7.5" y="7.5" width="2" height="2" fill="#f4f4ff" stroke="#2020ff" stroke-width="1"/><rect x="13.5" y="7.5" width="2" height="2" fill="#f4f4ff" stroke="#2020ff" stroke-width="1"/></svg>
<svg style="left:79px;top:76px" width="16" height="16" viewBox="0 0 16 16" ><path d="M1.500 7q1-5 7-5q6 0 7 8.500v3.500q-8 0-14-7z" fill="#707070" stroke="#1a1a1a" stroke-width="1.1"/><path d="M2 7q7 1 12 7q-9 0-12-7z" fill="#d0d0d0" stroke="#1a1a1a" stroke-width="1"/><rect x="1.5" y="5.5" width="2" height="2" fill="#f4f4ff" stroke="#2020ff" stroke-width="1"/><rect x="6.5" y="8.5" width="2" height="2" fill="#f4f4ff" stroke="#2020ff" stroke-width="1"/></svg>
<svg style="left:101px;top:76px" width="16" height="16" viewBox="0 0 16 16" ><path d="M13.500 2l.5 11q-3 2.500-9 1z" fill="#c0c0c0" stroke="#1a1a1a" stroke-width="1"/><path d="M13.500 2l-11 11" fill="none" stroke="#1a1a1a" stroke-width="1.1" /><ellipse cx="8" cy="13" rx="5.5" ry="1.8" fill="#e0f8f8" stroke="#2222ee" stroke-width="1" /><path d="M5 11h7" fill="none" stroke="#30c0c0" stroke-width="1.2" /><rect x="12.5" y="0.5" width="2" height="2" fill="#f4f4ff" stroke="#2020ff" stroke-width="1"/></svg>
<svg style="left:123px;top:76px" width="16" height="16" viewBox="0 0 16 16" ><path d="M5.500 2.500l7 1.500 1 7-5 3.500-7-3zM5.500 2.500l-4 9M12.500 4l-4 10.500M8.500 14.500v-7l-3-5M8.500 7.500l5 3.500" fill="none" stroke="#a8a8a8" stroke-width="1" /></svg>
<svg style="left:145px;top:76px" width="16" height="16" viewBox="0 0 16 16" ><path d="M4.500 2.500l7-1 3.500 4-3 8-7 1-3.500-4zM1.500 10.500l7-1 3.500 4M8.500 9.500l3-8" fill="none" stroke="#a8a8a8" stroke-width="1" /><rect x="5" y="7" width="4" height="3" fill="#e4e4e4" stroke="#a8a8a8" stroke-width="1"/></svg>
<svg style="left:167px;top:76px" width="16" height="16" viewBox="0 0 16 16" ><path d="M2 4h7M5 8h9M2 12h7" fill="none" stroke="#1a1a1a" stroke-width="1.8" /><path d="M9 4q3 0 3 2t3 2M9 12q3 0 3-2" fill="none" stroke="#1a1a1a" stroke-width="1.3" /><path d="M2.500 2l-2 2 2 2zM2.500 10l-2 2 2 2zM2.500 6l-2 2 2 2z" fill="#1a1a1a"/><circle cx="14.5" cy="4.5" r="1.3" fill="#1a1a1a" /><circle cx="14.5" cy="11.5" r="1.3" fill="#1a1a1a" /></svg>
<svg style="left:189px;top:76px" width="16" height="16" viewBox="0 0 16 16" ><path d="M5 3.500l9.500-1.500-4 9.500-9.500 1.500z" fill="#ececec" stroke="#a8a8a8" stroke-width="1"/><path d="M1 13l2 1.500 9.500-1.500 2-10M3 11.500l8-1" fill="none" stroke="#a8a8a8" stroke-width="1" /><rect x="11" y="2" width="2.5" height="2.5" fill="#ddd" stroke="#a8a8a8" stroke-width="1"/></svg>
<svg style="left:211px;top:76px" width="16" height="16" viewBox="0 0 16 16" ><path d="M3.500 1v14.500" fill="none" stroke="#a8a8a8" stroke-width="1" stroke-dasharray="2 1.200"/><path d="M5 8.500h5M8 6.500l2 2-2 2" fill="none" stroke="#a8a8a8" stroke-width="1" /><path d="M10.500 1.500h5v4q0 2.500-2.500 3-2.500-.5-2.500-3z" fill="#f0f0f0" stroke="#a8a8a8" stroke-width="1"/><path d="M13 8.500v5.500M11 14.500h4" fill="none" stroke="#a8a8a8" stroke-width="1.2" /></svg>
<svg style="left:233px;top:76px" width="16" height="16" viewBox="0 0 16 16" ><path d="M2.500 4.500v8q0 2 5 2t5-2v-8" fill="#fff" stroke="#1a1a1a" stroke-width="1.1"/><ellipse cx="7.5" cy="4.5" rx="5" ry="2.2" fill="#fff" stroke="#1a1a1a" stroke-width="1.1" /><path d="M9 6.600q3.500-.5 3.500-2v8q0 1.500-3.500 2z" fill="#8a8a8a"/><rect x="11.5" y="5.5" width="2" height="2" fill="#f4f4ff" stroke="#2020ff" stroke-width="1"/><rect x="7.5" y="11.5" width="2" height="2" fill="#f4f4ff" stroke="#2020ff" stroke-width="1"/><rect x="11.5" y="11.5" width="2" height="2" fill="#f4f4ff" stroke="#2020ff" stroke-width="1"/></svg>
<svg style="left:255px;top:76px" width="16" height="16" viewBox="0 0 16 16" ><path d="M2.500 4.500v8q0 2 5 2t5-2v-8" fill="#b8b8b8" stroke="#1a1a1a" stroke-width="1.1"/><ellipse cx="7.5" cy="4.5" rx="5" ry="2.2" fill="#fff" stroke="#1a1a1a" stroke-width="1.1" /><rect x="5.5" y="9.5" width="4" height="5" fill="#fff" stroke="#1a1a1a" stroke-width="1"/><rect x="11.5" y="5.5" width="2" height="2" fill="#f4f4ff" stroke="#2020ff" stroke-width="1"/><rect x="6.5" y="11.5" width="2" height="2" fill="#f4f4ff" stroke="#2020ff" stroke-width="1"/><rect x="11.5" y="11.5" width="2" height="2" fill="#f4f4ff" stroke="#2020ff" stroke-width="1"/></svg>
<svg style="left:277px;top:76px" width="16" height="16" viewBox="0 0 16 16" ><path d="M5 1.500h6l3.500 3.500v6l-3.500 3.500h-6l-3.500-3.500v-6z" fill="#d4d4d4" stroke="#3a3a3a" stroke-width="1.2"/><circle cx="8" cy="8" r="4.2" fill="#eee" stroke="#aaa" stroke-width="1" /><circle cx="8" cy="8" r="1.8" fill="#fff" stroke="#3a3a3a" stroke-width="1.1" /></svg>
<svg style="left:299px;top:76px" width="16" height="16" viewBox="0 0 16 16" ><rect x="2.5" y="2.5" width="12" height="12" fill="#fff" stroke="#1a1a1a" stroke-width="1.3"/><path d="M5.500 2.500v12M8.500 2.500v12M11.500 2.500v12M2.500 5.500h12M2.500 8.500h12M2.500 11.500h12" fill="none" stroke="#1a1a1a" stroke-width="1.2" /><rect x="1.5" y="1.5" width="2" height="2" fill="#f4f4ff" stroke="#2020ff" stroke-width="1"/><rect x="13.5" y="13.5" width="2" height="2" fill="#f4f4ff" stroke="#2020ff" stroke-width="1"/></svg>
<svg style="left:321px;top:76px" width="16" height="16" viewBox="0 0 16 16" ><path d="M2.500 14.500v-8.500l10 6z" fill="#fff" stroke="#1a1a1a" stroke-width="1.3"/><path d="M2.500 6l3.500-3.500 9 6.500-2.500 3z" fill="#b0b0b0" stroke="#1a1a1a" stroke-width="1"/><rect x="1.5" y="5.5" width="2" height="2" fill="#f4f4ff" stroke="#2020ff" stroke-width="1"/><rect x="1.5" y="13.5" width="2" height="2" fill="#f4f4ff" stroke="#2020ff" stroke-width="1"/><rect x="12.5" y="10.5" width="2" height="2" fill="#f4f4ff" stroke="#2020ff" stroke-width="1"/></svg>
<svg style="left:343px;top:76px" width="16" height="16" viewBox="0 0 16 16" ><path d="M1.500 5.500h10v8.500h-10zM1.500 5.500l3-3h10l-3 3M14.500 2.500v8.500l-3 3" fill="none" stroke="#c4c4c4" stroke-width="1.1" /><path d="M2.500 10.500l3-2 2 1.500 3-2.500 3.500 1-2.500 3h-9z" fill="#d0d0d0" stroke="#b0b0b0" stroke-width="1"/></svg>
<svg style="left:365px;top:76px" width="16" height="16" viewBox="0 0 16 16" ><text x="1" y="11.5" font-size="7" fill="#1a1a1a" text-anchor="start" font-family="Liberation Sans, sans-serif">3D</text><path d="M2.500 14.500h5l4-5.500-3.500-4.500" fill="none" stroke="#1a1a1a" stroke-width="1" /><rect x="1.5" y="13.5" width="2" height="2" fill="#f4f4ff" stroke="#2020ff" stroke-width="1"/><rect x="6.5" y="13.5" width="2" height="2" fill="#f4f4ff" stroke="#2020ff" stroke-width="1"/><rect x="11.5" y="7.5" width="2" height="2" fill="#f4f4ff" stroke="#2020ff" stroke-width="1"/><rect x="7.5" y="2.5" width="2" height="2" fill="#f4f4ff" stroke="#2020ff" stroke-width="1"/></svg>
<svg style="left:387px;top:76px" width="16" height="16" viewBox="0 0 16 16" ><path d="M2 14q2-10 6-10t6 9" fill="none" stroke="#1a1a1a" stroke-width="1.1" /><text x="4.5" y="15.5" font-size="7" fill="#1a1a1a" text-anchor="start" font-family="Liberation Sans, sans-serif">3D</text><rect x="1.5" y="13.5" width="2" height="2" fill="#f4f4ff" stroke="#2020ff" stroke-width="1"/><rect x="12.5" y="12.5" width="2" height="2" fill="#f4f4ff" stroke="#2020ff" stroke-width="1"/><rect x="2.5" y="1.5" width="2" height="2" fill="#f4f4ff" stroke="#2020ff" stroke-width="1"/><rect x="11.5" y="1.5" width="2" height="2" fill="#f4f4ff" stroke="#2020ff" stroke-width="1"/></svg>
<svg style="left:409px;top:76px" width="16" height="16" viewBox="0 0 16 16" ><text x="1" y="15" font-size="7" fill="#1a1a1a" text-anchor="start" font-family="Liberation Sans, sans-serif">3D</text><path d="M12.500 2.500q-5-1-5.500 2.500t3.500 3.500" fill="none" stroke="#1a1a1a" stroke-width="1.2" /><path d="M11 2l3.500.5-2 2z" fill="#1a1a1a"/><rect x="13.5" y="1.5" width="2" height="2" fill="#f4f4ff" stroke="#2020ff" stroke-width="1"/><rect x="5.5" y="4.5" width="2" height="2" fill="#f4f4ff" stroke="#2020ff" stroke-width="1"/><rect x="9.5" y="8.5" width="2" height="2" fill="#f4f4ff" stroke="#2020ff" stroke-width="1"/></svg>
<svg style="left:442px;top:76px" width="16" height="16" viewBox="0 0 16 16" ><path d="M2.500 7l3-3h4q5 0 5 4.500t-5 5.500h-7z" fill="#dcdcdc" stroke="#a8a8a8" stroke-width="1"/><circle cx="8.5" cy="8.5" r="3" fill="#ececec" stroke="#cfcfcf" stroke-width="1" /></svg>
<svg style="left:464px;top:76px" width="16" height="16" viewBox="0 0 16 16" ><circle cx="10.5" cy="6.5" r="4.5" fill="#f6f6f6" stroke="#c4c4c4" stroke-width="1" /><path d="M1.500 7.500l3-3h6v6l-3 3.500h-6z" fill="#e4e4e4" stroke="#a8a8a8" stroke-width="1"/><path d="M5.500 6h5v4q-1 3-2.500 3.500-2.500-1-2.500-3.500z" fill="#b4b4b4"/></svg>
<svg style="left:486px;top:76px" width="16" height="16" viewBox="0 0 16 16" ><circle cx="10.5" cy="6" r="4.8" fill="#f8f8f8" stroke="#c4c4c4" stroke-width="1" /><path d="M1.500 8l3-3h6v6l-3 3.500h-6zM1.500 8h6v6.500M7.500 8l3-3" fill="none" stroke="#c4c4c4" stroke-width="1" /><rect x="5.5" y="6.5" width="3.5" height="5" fill="#b0b0b0" stroke="#a8a8a8" stroke-width="1"/></svg>
<svg style="left:510px;top:76px" width="16" height="16" viewBox="0 0 16 16" ><circle cx="8" cy="8" r="6.5" fill="#a8a8a8" stroke="#3a3a3a" stroke-width="1.3" /><circle cx="6.5" cy="6.5" r="3.5" fill="#d8d8d8" /><path d="M2.500 3.500l10 10" fill="none" stroke="#fff" stroke-width="2.2" /><path d="M2.500 2.500l11 11" fill="none" stroke="#2222ee" stroke-width="1.1" /><path d="M4.500 1.500l10 10" fill="none" stroke="#fff" stroke-width="1.4" /></svg>
<div style="left:530px;top:75px;width:1px;height:18px;background:#8e8e8e;"></div>
<svg style="left:537px;top:76px" width="16" height="16" viewBox="0 0 16 16" ><circle cx="10" cy="6" r="4.5" fill="#bcbcbc" stroke="#a8a8a8" stroke-width="1" /><rect x="2.5" y="6.5" width="9" height="8" fill="#bcbcbc" stroke="#a8a8a8" stroke-width="1"/></svg>
<svg style="left:559px;top:76px" width="16" height="16" viewBox="0 0 16 16" ><circle cx="10.5" cy="6" r="4.5" fill="#fafafa" stroke="#c4c4c4" stroke-width="1" /><rect x="2.5" y="6.5" width="9" height="8" fill="#b8b8b8" stroke="#a8a8a8" stroke-width="1"/><path d="M6.500 6.500h5v4q-3 .5-5-4z" fill="#f6f6f6" stroke="#c4c4c4" stroke-width="1"/></svg>
<svg style="left:581px;top:76px" width="16" height="16" viewBox="0 0 16 16" ><circle cx="10.5" cy="6" r="4.5" fill="none" stroke="#c4c4c4" stroke-width="1" /><rect x="2.5" y="6.5" width="9" height="8" fill="none" stroke="#c4c4c4" stroke-width="1"/><path d="M6.500 6.500h5v4q-3 .5-5-4z" fill="#b0b0b0" stroke="#a8a8a8" stroke-width="1"/></svg>
<div style="left:602px;top:75px;width:1px;height:18px;background:#8e8e8e;"></div>
<svg style="left:609px;top:76px" width="16" height="16" viewBox="0 0 16 16" ><path d="M2.500 8l2.500-4q2-2.500 4.500-1l5 3v5l-5 4.500h-7z" fill="#e2e2e2" stroke="#a8a8a8" stroke-width="1.2"/><path d="M2.500 8h7l5-2M9.500 8v7.500" fill="none" stroke="#a8a8a8" stroke-width="1.1" /><path d="M6 4l5 3M7.500 3l5 3" fill="none" stroke="#d0d0d0" stroke-width="1" /></svg>
<svg style="left:642px;top:76px" width="16" height="16" viewBox="0 0 16 16" ><rect x="1.5" y="1.5" width="8" height="9" fill="#f5f5f5" stroke="#a8a8a8" stroke-width="1.2"/><rect x="3.5" y="3.5" width="8" height="9" fill="#f5f5f5" stroke="#a8a8a8" stroke-width="1.2"/><rect x="5.5" y="5.5" width="8" height="9" fill="#f5f5f5" stroke="#a8a8a8" stroke-width="1.2"/></svg>
<svg style="left:665px;top:76px" width="16" height="16" viewBox="0 0 16 16" ><rect x="1.5" y="1.5" width="5" height="5" fill="none" stroke="#a8a8a8" stroke-width="1.2"/><rect x="1.5" y="9.5" width="5" height="5" fill="none" stroke="#a8a8a8" stroke-width="1.2"/><rect x="9.5" y="1.5" width="5" height="5" fill="none" stroke="#a8a8a8" stroke-width="1.2"/><rect x="9.5" y="9.5" width="5" height="5" fill="none" stroke="#a8a8a8" stroke-width="1.2"/></svg>
<svg style="left:686px;top:76px" width="16" height="16" viewBox="0 0 16 16" ><circle cx="8" cy="3" r="2" fill="none" stroke="#a8a8a8" stroke-width="1.1" /><circle cx="3" cy="8" r="2" fill="none" stroke="#a8a8a8" stroke-width="1.1" /><circle cx="13" cy="8" r="2" fill="none" stroke="#a8a8a8" stroke-width="1.1" /><circle cx="8" cy="13" r="2" fill="none" stroke="#a8a8a8" stroke-width="1.1" /></svg>
<svg style="left:709px;top:76px" width="16" height="16" viewBox="0 0 16 16" ><rect x="2.5" y="2.5" width="6" height="7" fill="none" stroke="#a8a8a8" stroke-width="1.2"/><rect x="4.5" y="4.5" width="6" height="7" fill="none" stroke="#a8a8a8" stroke-width="1.2"/><rect x="6.5" y="6.5" width="6" height="7" fill="none" stroke="#a8a8a8" stroke-width="1.2"/></svg>
<svg style="left:732px;top:76px" width="16" height="16" viewBox="0 0 16 16" ><rect x="3" y="2.5" width="3.5" height="4" fill="none" stroke="#a8a8a8" stroke-width="1.2"/><rect x="3" y="9.5" width="3.5" height="4" fill="none" stroke="#a8a8a8" stroke-width="1.2"/><rect x="9.5" y="2.5" width="3.5" height="4" fill="none" stroke="#a8a8a8" stroke-width="1.2"/><rect x="9.5" y="9.5" width="3.5" height="4" fill="none" stroke="#a8a8a8" stroke-width="1.2"/></svg>
<svg style="left:753px;top:76px" width="16" height="16" viewBox="0 0 16 16" ><circle cx="8" cy="4" r="2.2" fill="none" stroke="#a8a8a8" stroke-width="1.1" /><circle cx="4.5" cy="8" r="2.2" fill="none" stroke="#a8a8a8" stroke-width="1.1" /><circle cx="11.5" cy="8" r="2.2" fill="none" stroke="#a8a8a8" stroke-width="1.1" /><circle cx="8" cy="12" r="2.2" fill="none" stroke="#a8a8a8" stroke-width="1.1" /></svg>
<svg style="left:775px;top:76px" width="16" height="16" viewBox="0 0 16 16" ><path d="M1.500 2v10.500h5z" fill="none" stroke="#c4c4c4" stroke-width="1.1" /><path d="M14 2v10.500h-5z" fill="#a8a8a8" stroke="#a8a8a8" stroke-width="1"/><path d="M13.500 2v10" fill="none" stroke="#8a8a8a" stroke-width="1.5" /></svg>
<svg style="left:797px;top:76px" width="16" height="16" viewBox="0 0 16 16" ><path d="M10.500 1.500l5 4h-5z" fill="none" stroke="#c4c4c4" stroke-width="1" /><path d="M1.500 9.500v5h5z" fill="none" stroke="#c4c4c4" stroke-width="1" /><path d="M5 10l5-5" fill="none" stroke="#e0e0e0" stroke-width="1" stroke-dasharray="1.500 1.500"/></svg>
<svg style="left:819px;top:76px" width="16" height="16" viewBox="0 0 16 16" ><path d="M2.500 8l2.500-4q2-2.500 4.500-1l5 3v5l-5 4.500h-7z" fill="#e2e2e2" stroke="#a8a8a8" stroke-width="1.2"/><path d="M2.500 8h7l5-2M9.500 8v7.500" fill="none" stroke="#a8a8a8" stroke-width="1.1" /><path d="M6 4l5 3M7.500 3l5 3" fill="none" stroke="#d0d0d0" stroke-width="1" /></svg>
<svg style="left:853px;top:76px" width="16" height="16" viewBox="0 0 16 16" ><path d="M2 14l12-12" fill="none" stroke="#1a1a1a" stroke-width="1" /><path d="M2 12l6-6" fill="none" stroke="#e01818" stroke-width="1" /><path d="M5 5l3 3M11 11l-3-3" fill="none" stroke="#2222ee" stroke-width="1.100" /><path d="M4 3.500l3.500.5-3 3zM12 12.500l-3.500-.5 3-3z" fill="#2222ee"/></svg>
<svg style="left:876px;top:76px" width="16" height="16" viewBox="0 0 16 16" ><path d="M1.500 14l5-5M9.500 6l5-5" fill="none" stroke="#1a1a1a" stroke-width="1" /><path d="M2 9l5 5M9 2l5 5" fill="none" stroke="#e01818" stroke-width="1" /><path d="M7 8.500l2-2" fill="none" stroke="#fff" stroke-width="1" /></svg>
<svg style="left:897px;top:76px" width="16" height="16" viewBox="0 0 16 16" ><path d="M2.500 9q-1-6.500 5-7" fill="none" stroke="#e01818" stroke-width="1.050" stroke-dasharray="3 1"/><path d="M7.500 2q6.500 0 6 6.500q-.5 4-4 5" fill="none" stroke="#1a1a1a" stroke-width="1.050" /><path d="M6 9.500l5-5" fill="none" stroke="#888" stroke-width="1" stroke-dasharray="1 1.500"/></svg>
<svg style="left:919px;top:76px" width="16" height="16" viewBox="0 0 16 16" ><path d="M1.500 12.500l11-11" fill="none" stroke="#e01818" stroke-width="1" /><path d="M7 7l7.500 7" fill="none" stroke="#1a1a1a" stroke-width="1" /><path d="M2.500 2l4.500 5" fill="none" stroke="#aaa" stroke-width="1" stroke-dasharray="1 1.500"/></svg>
<svg style="left:942px;top:76px" width="16" height="16" viewBox="0 0 16 16" ><path d="M7 10.500l7-7M9 12.500l7-7" fill="none" stroke="#e01818" stroke-width="1" /><path d="M5 8.500l7-7M11 14.500l5-5" fill="none" stroke="#1a1a1a" stroke-width="1" /><path d="M2 3.500l3 3" fill="none" stroke="#2222ee" stroke-width="1.050" /><path d="M1 2.500l3.500.3-3.200 3.200z" fill="#2222ee"/></svg>
<svg style="left:964px;top:76px" width="16" height="16" viewBox="0 0 16 16" ><rect x="1.5" y="1.5" width="8" height="9" fill="none" stroke="#1a1a1a" stroke-width="1.050"/><path d="M1.500 10.500h8l-2-9" fill="none" stroke="#e01818" stroke-width="1.1" stroke-dasharray="2 1"/><rect x="6.5" y="6.5" width="8" height="8" fill="none" stroke="#1a1a1a" stroke-width="1" stroke-dasharray="1.200 1.200"/><path d="M10 1.500l4 3.500" fill="none" stroke="#2222ee" stroke-width="1.050" /><path d="M15 6l-3.500-.5 3-3z" fill="#2222ee"/></svg>
<svg style="left:986px;top:76px" width="16" height="16" viewBox="0 0 16 16" ><path d="M2 14.500l5-12M9 11l4-10" fill="none" stroke="#1a1a1a" stroke-width="1.050" /><path d="M2 14.500l3 .5" fill="none" stroke="#2222ee" stroke-width="1" /><path d="M4 12.500l3 2-3 1.500z" fill="#2222ee"/></svg>
<svg style="left:1007px;top:76px" width="16" height="16" viewBox="0 0 16 16" ><circle cx="8" cy="8" r="6.5" fill="none" stroke="#1a1a1a" stroke-width="1" /><path d="M1.500 8q0-6.500 6.500-6.500q5 0 6.300 4.500" fill="none" stroke="#e01818" stroke-width="1" stroke-dasharray="2.500 1.200"/></svg>
<svg style="left:1030px;top:76px" width="16" height="16" viewBox="0 0 16 16" ><path d="M5.500 14.500l5-3" fill="none" stroke="#1a1a1a" stroke-width="1" /><path d="M1.500 1.500l9 13" fill="none" stroke="#e01818" stroke-width="1" stroke-dasharray="3 1"/><path d="M1.500 1.500l10 2.500" fill="none" stroke="#e01818" stroke-width="1" stroke-dasharray="3 1"/><path d="M11 4l4.500 1.500M10.500 14.500l-2.500-4" fill="none" stroke="#1a1a1a" stroke-width="1" /></svg>
<svg style="left:1052px;top:76px" width="16" height="16" viewBox="0 0 16 16" ><circle cx="10" cy="5.5" r="4.5" fill="none" stroke="#20e020" stroke-width="1.1" /><rect x="1.5" y="6.5" width="10" height="8" fill="none" stroke="#1a1a1a" stroke-width="1.100"/><path d="M5.500 6.500q0 4.500 6 4.500" fill="none" stroke="#e01818" stroke-width="1" /></svg>
<div style="left:1073px;top:75px;width:1px;height:18px;background:#8e8e8e;"></div>
<svg style="left:1080px;top:76px" width="16" height="16" viewBox="0 0 16 16" ><path d="M2.500 1.500v6" fill="none" stroke="#1a1a1a" stroke-width="1.050" /><path d="M2.500 7.500q0 6 6 6" fill="none" stroke="#e01818" stroke-width="1" /><path d="M8.500 13.500h6" fill="none" stroke="#1a1a1a" stroke-width="1.050" /></svg>
<svg style="left:1101px;top:76px" width="16" height="16" viewBox="0 0 16 16" ><path d="M1 11.500h3M11.500 1v3" fill="none" stroke="#1a1a1a" stroke-width="1" /><path d="M3.500 11.500l8-8" fill="none" stroke="#e01818" stroke-width="1" /><path d="M4 14.500h5M13.500 4v6" fill="none" stroke="#2222ee" stroke-width="1.1" /><path d="M4.500 13v3M8.500 13v3M12 4.500h3M12 9.500h3" fill="none" stroke="#2222ee" stroke-width="1.1" /></svg>
<svg style="left:1124px;top:76px" width="16" height="16" viewBox="0 0 16 16" ><path d="M1 11.500h3M11.500 1v3" fill="none" stroke="#1a1a1a" stroke-width="1" /><path d="M3.500 11.500l8-8" fill="none" stroke="#e01818" stroke-width="1" /><path d="M3.500 14.500h6" fill="none" stroke="#207080" stroke-width="1" /><path d="M3.500 13v3M9.500 13v3" fill="none" stroke="#2222ee" stroke-width="1.1" /><path d="M12.500 10.500v-4l-1.500 1.500M12.500 6.500h2.500" fill="none" stroke="#2222ee" stroke-width="1.050" /></svg>
<svg style="left:1146px;top:76px" width="16" height="16" viewBox="0 0 16 16" ><path d="M1 12.500h2M12.500 1v2" fill="none" stroke="#1a1a1a" stroke-width="1" /><path d="M2.500 12.500l10-10" fill="none" stroke="#e01818" stroke-width="1" /><path d="M1.500 10.500l9-9" fill="none" stroke="#2222ee" stroke-width="1" /><path d="M4 13.500l4-4" fill="none" stroke="#20a0a0" stroke-width="1" /><path d="M1 11l.5-3 2.500 2.500zM11 1l-.5 3-2.500-2.500z" fill="#2222ee"/><path d="M14 10.500v-4l-1.500 1.500M14 6.500h2" fill="none" stroke="#2222ee" stroke-width="1.050" /></svg>
<div style="left:1167px;top:75px;width:1px;height:18px;background:#8e8e8e;"></div>
<svg style="left:1174px;top:76px" width="16" height="16" viewBox="0 0 16 16" ><path d="M1.500 12.500l10-10M5.500 13.500l4-4 4 4M14.500 5l-3 3 3 3" fill="none" stroke="#1a1a1a" stroke-width="1" /><path d="M2 3l3 3" fill="none" stroke="#ccc" stroke-width="1" /></svg>
<svg style="left:1196px;top:76px" width="16" height="16" viewBox="0 0 16 16" ><path d="M6.500 1.500v5h-5M9.500 1.500v5h5M6.500 14.500v-5h-5M9.500 14.500v-5h5" fill="none" stroke="#1a1a1a" stroke-width="1.100" /></svg>
<div style="left:1217px;top:75px;width:1px;height:18px;background:#8e8e8e;"></div>
<svg style="left:1224px;top:76px" width="16" height="16" viewBox="0 0 16 16" ><path d="M2.500 14.500v-6q0-2 2-2h7q2 0 2 2v6z" fill="#f4f4f4" stroke="#1a1a1a" stroke-width="1.3"/><path d="M6.500 6.500v-4.500h3v4.500" fill="#ddd" stroke="#1a1a1a" stroke-width="1.2"/><path d="M5 11.500h6M5 11.500l1.500-1.500M11 10h-5" fill="none" stroke="#777" stroke-width="1" /><path d="M11 4.500l2 1.500" fill="none" stroke="#bbb" stroke-width="1" /></svg>
<svg style="left:1246px;top:76px" width="16" height="16" viewBox="0 0 16 16" ><rect x="1.5" y="2.5" width="6" height="5" fill="none" stroke="#1a1a1a" stroke-width="1.3" stroke-dasharray="3 1.500"/><rect x="8.5" y="9.5" width="6" height="5.5" fill="#fff" stroke="#f02020" stroke-width="1.4"/><path d="M7.500 2.500q5-1 5 5" fill="none" stroke="#20d020" stroke-width="1.5" /><path d="M10.500 6.500h4l-2 3z" fill="#20d020"/></svg>
<svg style="left:1268px;top:76px" width="16" height="16" viewBox="0 0 16 16" ><path d="M1.500 14.500v-5h2.500v-7h8v7h2.500v5z" fill="#e0e0e0" stroke="#a8a8a8" stroke-width="1.5"/><path d="M4 9.500h8M4 12h8" fill="none" stroke="#a8a8a8" stroke-width="1.3" /></svg>
<svg style="left:1290px;top:76px" width="16" height="16" viewBox="0 0 16 16" ><path d="M5 1.500h6v2.500h2v2h2v4h-2v2h-2v2.500h-6v-2.500h-2v-2h-2v-4h2v-2h2z" fill="#d0d0d0" stroke="#a8a8a8" stroke-width="1"/><rect x="6.5" y="3.5" width="3" height="9" fill="#f0f0f0" stroke="#a8a8a8" stroke-width="1"/></svg>
<svg style="left:830px;top:103px" width="16" height="16" viewBox="0 0 16 16" ><path d="M1.500 14.500l13-13" fill="none" stroke="#444" stroke-width="1" stroke-dasharray="2.500 1.500"/><rect x="3.5" y="10.5" width="2" height="2" fill="#f4f4ff" stroke="#2020ff" stroke-width="1"/><rect x="9.5" y="4.5" width="2" height="2" fill="#f4f4ff" stroke="#2020ff" stroke-width="1"/></svg>
<svg style="left:852px;top:103px" width="16" height="16" viewBox="0 0 16 16" ><path d="M0.500 8.500h15" fill="none" stroke="#444" stroke-width="1" stroke-dasharray="2.500 1.500"/><rect x="7.5" y="7.5" width="2" height="2" fill="#f4f4ff" stroke="#2020ff" stroke-width="1"/></svg>
<svg style="left:874px;top:103px" width="16" height="16" viewBox="0 0 16 16" ><path d="M8.500 .5v15" fill="none" stroke="#444" stroke-width="1" stroke-dasharray="2.500 1.500"/><rect x="7.5" y="7.5" width="2" height="2" fill="#f4f4ff" stroke="#2020ff" stroke-width="1"/></svg>
<svg style="left:897px;top:103px" width="16" height="16" viewBox="0 0 16 16" ><path d="M2.500 8.500l8-8M5.500 15.500l8-8" fill="none" stroke="#444" stroke-width="1" stroke-dasharray="2.500 1.500"/><rect x="5.5" y="5.5" width="2" height="2" fill="#f4f4ff" stroke="#2020ff" stroke-width="1"/><rect x="9.5" y="10.5" width="2" height="2" fill="#f4f4ff" stroke="#2020ff" stroke-width="1"/></svg>
<svg style="left:918px;top:103px" width="16" height="16" viewBox="0 0 16 16" ><path d="M1.500 14.500l13-13M8 7.500l7 7" fill="none" stroke="#444" stroke-width="1" stroke-dasharray="2.500 1.500"/><rect x="7.5" y="6.5" width="2" height="2" fill="#f4f4ff" stroke="#2020ff" stroke-width="1"/><rect x="13.5" y="13.5" width="2" height="2" fill="#f4f4ff" stroke="#2020ff" stroke-width="1"/></svg>
<svg style="left:940px;top:103px" width="16" height="16" viewBox="0 0 16 16" ><path d="M1.500 14.500l13-13M2 2.500l12 12" fill="none" stroke="#b0b0b0" stroke-width="1" stroke-dasharray="2.500 1.500"/><rect x="7.5" y="7.5" width="2" height="2" fill="#eee" stroke="#9a9a9a" stroke-width="1"/><rect x="2.5" y="12.5" width="2" height="2" fill="#eee" stroke="#9a9a9a" stroke-width="1"/><rect x="12.5" y="2.5" width="2" height="2" fill="#eee" stroke="#9a9a9a" stroke-width="1"/></svg>
<svg style="left:962px;top:103px" width="16" height="16" viewBox="0 0 16 16" ><path d="M2 14l12-12" fill="none" stroke="#1a1a1a" stroke-width="1" /><path d="M1 15l.8-3.200 2.400 2.400zM15 1l-.8 3.200-2.400-2.400z" fill="#1a1a1a"/><rect x="7.5" y="7.5" width="2" height="2" fill="#f4f4ff" stroke="#2020ff" stroke-width="1"/></svg>
<svg style="left:984px;top:103px" width="16" height="16" viewBox="0 0 16 16" ><path d="M2 15l11-11M7.500 1v8" fill="none" stroke="#1a1a1a" stroke-width="1" /><path d="M1 16l.8-3.200 2.400 2.400zM14.500 2.500l-.8 3.200-2.400-2.400z" fill="#1a1a1a"/><rect x="6.5" y="0.5" width="2" height="2" fill="#f4f4ff" stroke="#2020ff" stroke-width="1"/><rect x="6.5" y="7.5" width="2" height="2" fill="#f4f4ff" stroke="#2020ff" stroke-width="1"/></svg>
<div style="left:1006px;top:102px;width:1px;height:18px;background:#8e8e8e;"></div>
<svg style="left:1013px;top:103px" width="16" height="16" viewBox="0 0 16 16" ><circle cx="8" cy="8" r="6.5" fill="none" stroke="#555" stroke-width="1" stroke-dasharray="2.500 1.500"/><rect x="7.5" y="7.5" width="2" height="2" fill="#f4f4ff" stroke="#2020ff" stroke-width="1"/><rect x="13.5" y="7.5" width="2" height="2" fill="#f4f4ff" stroke="#2020ff" stroke-width="1"/></svg>
<svg style="left:1035px;top:103px" width="16" height="16" viewBox="0 0 16 16" ><circle cx="8" cy="8" r="6.5" fill="none" stroke="#555" stroke-width="1" stroke-dasharray="2.500 1.500"/><rect x="2.5" y="2.5" width="2" height="2" fill="#f4f4ff" stroke="#2020ff" stroke-width="1"/><rect x="11.5" y="2.5" width="2" height="2" fill="#f4f4ff" stroke="#2020ff" stroke-width="1"/><rect x="7.5" y="13.5" width="2" height="2" fill="#f4f4ff" stroke="#2020ff" stroke-width="1"/></svg>
<svg style="left:1057px;top:103px" width="16" height="16" viewBox="0 0 16 16" ><circle cx="8" cy="8" r="6.5" fill="none" stroke="#555" stroke-width="1" stroke-dasharray="2.500 1.500"/><rect x="0.5" y="7.5" width="2" height="2" fill="#f4f4ff" stroke="#2020ff" stroke-width="1"/><rect x="13.5" y="7.5" width="2" height="2" fill="#f4f4ff" stroke="#2020ff" stroke-width="1"/></svg>
<div style="left:1078px;top:102px;width:1px;height:18px;background:#8e8e8e;"></div>
<svg style="left:1085px;top:103px" width="16" height="16" viewBox="0 0 16 16" ><circle cx="8" cy="8.5" r="6.3" fill="#fff" stroke="#1a1a1a" stroke-width="1.1" /><path d="M2 14.500l12-12" fill="none" stroke="#1a1a1a" stroke-width="1" /><path d="M3.500 4l9.500 9M5 3l9 8.500M2.500 6l8.500 8.500" fill="none" stroke="#555" stroke-width="0.7" /><path d="M1 15.500l2.500-.8M15 1l-2.500 .8" fill="none" stroke="#1a1a1a" stroke-width="1.3" /><rect x="7.5" y="7.5" width="2" height="2" fill="#f4f4ff" stroke="#2020ff" stroke-width="1"/></svg>
<div style="left:1106px;top:102px;width:1px;height:18px;background:#8e8e8e;"></div>
<svg style="left:1111px;top:103px" width="16" height="16" viewBox="0 0 16 16" ><path d="M2 14l12-12" fill="none" stroke="#444" stroke-width="1" stroke-dasharray="2.500 1.500"/><rect x="3.5" y="10.5" width="2" height="2" fill="#f4f4ff" stroke="#2020ff" stroke-width="1"/><rect x="8.5" y="5.5" width="2" height="2" fill="#f4f4ff" stroke="#2020ff" stroke-width="1"/></svg>
<svg style="left:1135px;top:103px" width="16" height="16" viewBox="0 0 16 16" ><path d="M8.500 .5v12" fill="none" stroke="#444" stroke-width="1" stroke-dasharray="2.500 1.500"/><rect x="7.5" y="11.5" width="2" height="2" fill="#f4f4ff" stroke="#2020ff" stroke-width="1"/></svg>
<svg style="left:1155px;top:103px" width="16" height="16" viewBox="0 0 16 16" ><path d="M3 7.500h12" fill="none" stroke="#444" stroke-width="1" stroke-dasharray="2.500 1.500"/><rect x="1.5" y="6.5" width="2" height="2" fill="#f4f4ff" stroke="#2020ff" stroke-width="1"/></svg>
<div style="left:2px;top:136px;width:22px;height:22px;background:#bfdcf4;border:1px solid #8cc4f0;box-sizing:border-box;"></div>
<svg style="left:5px;top:139px" width="16" height="16" viewBox="0 0 16 16" ><path d="M4.500 1.500v11l2.500-2.500 2 4.500 2-1-2-4.500h3.500z" fill="#000" stroke="#000" stroke-width="0.5"/><path d="M5.500 4v6.500l1.700-1.700.8-.3h2z" fill="#fff"/></svg>
<svg style="left:20px;top:154px" width="4" height="4" viewBox="0 0 4 4" ><path d="M4 0V4H0Z" fill="#000"/></svg>
<svg style="left:5px;top:161px" width="16" height="16" viewBox="0 0 16 16" ><path d="M1 15l14-14" fill="none" stroke="#666" stroke-width="1" stroke-dasharray="2.500 1.500"/><rect x="3.5" y="10.5" width="2" height="2" fill="#f4f4ff" stroke="#2020ff" stroke-width="1"/><rect x="9.5" y="4.5" width="2" height="2" fill="#f4f4ff" stroke="#2020ff" stroke-width="1"/></svg>
<svg style="left:20px;top:176px" width="4" height="4" viewBox="0 0 4 4" ><path d="M4 0V4H0Z" fill="#000"/></svg>
<svg style="left:5px;top:183px" width="16" height="16" viewBox="0 0 16 16" ><circle cx="8" cy="8" r="1.3" fill="#333" /></svg>
<svg style="left:20px;top:198px" width="4" height="4" viewBox="0 0 4 4" ><path d="M4 0V4H0Z" fill="#000"/></svg>
<svg style="left:5px;top:205px" width="16" height="16" viewBox="0 0 16 16" ><path d="M2.500 13.500l10-10" fill="none" stroke="#1a1a1a" stroke-width="1.1" /><rect x="1.5" y="12.5" width="2" height="2" fill="#f4f4ff" stroke="#2020ff" stroke-width="1"/><rect x="11.5" y="2.5" width="2" height="2" fill="#f4f4ff" stroke="#2020ff" stroke-width="1"/></svg>
<svg style="left:20px;top:220px" width="4" height="4" viewBox="0 0 4 4" ><path d="M4 0V4H0Z" fill="#000"/></svg>
<svg style="left:5px;top:227px" width="16" height="16" viewBox="0 0 16 16" ><path d="M1.500 8.500l7-7M5.500 14.500l9-9" fill="none" stroke="#1a1a1a" stroke-width="1.1" /><rect x="1.5" y="11.5" width="2" height="2" fill="#f4f4ff" stroke="#2020ff" stroke-width="1"/><rect x="11.5" y="1.5" width="2" height="2" fill="#f4f4ff" stroke="#2020ff" stroke-width="1"/></svg>
<svg style="left:20px;top:242px" width="4" height="4" viewBox="0 0 4 4" ><path d="M4 0V4H0Z" fill="#000"/></svg>
<svg style="left:5px;top:249px" width="16" height="16" viewBox="0 0 16 16" ><path d="M1.500 8.500l7-7M5.500 14.500l9-9M3.500 11.500l8-8" fill="none" stroke="#1a1a1a" stroke-width="1" stroke-dasharray="1.500 1.500"/><rect x="1.5" y="11.5" width="2" height="2" fill="#f4f4ff" stroke="#2020ff" stroke-width="1"/><rect x="11.5" y="1.5" width="2" height="2" fill="#f4f4ff" stroke="#2020ff" stroke-width="1"/></svg>
<svg style="left:20px;top:264px" width="4" height="4" viewBox="0 0 4 4" ><path d="M4 0V4H0Z" fill="#000"/></svg>
<svg style="left:5px;top:271px" width="16" height="16" viewBox="0 0 16 16" ><circle cx="8" cy="8" r="6.5" fill="none" stroke="#1a1a1a" stroke-width="1.1" /><rect x="7.5" y="7.5" width="2" height="2" fill="#f4f4ff" stroke="#2020ff" stroke-width="1"/><rect x="13.5" y="7.5" width="2" height="2" fill="#f4f4ff" stroke="#2020ff" stroke-width="1"/></svg>
<svg style="left:20px;top:286px" width="4" height="4" viewBox="0 0 4 4" ><path d="M4 0V4H0Z" fill="#000"/></svg>
<svg style="left:5px;top:293px" width="16" height="16" viewBox="0 0 16 16" ><path d="M2.500 13q-2-9 5.500-9.500q6 0 6.500 6" fill="none" stroke="#1a1a1a" stroke-width="1.1" /><path d="M3 13l5-3h5" fill="none" stroke="#777" stroke-width="0.9" /><rect x="1.5" y="12.5" width="2" height="2" fill="#f4f4ff" stroke="#2020ff" stroke-width="1"/><rect x="7.5" y="8.5" width="2" height="2" fill="#f4f4ff" stroke="#2020ff" stroke-width="1"/><rect x="13.5" y="8.5" width="2" height="2" fill="#f4f4ff" stroke="#2020ff" stroke-width="1"/></svg>
<svg style="left:20px;top:308px" width="4" height="4" viewBox="0 0 4 4" ><path d="M4 0V4H0Z" fill="#000"/></svg>
<svg style="left:5px;top:315px" width="16" height="16" viewBox="0 0 16 16" ><path d="M2 14q2-10 6-10t6 9" fill="none" stroke="#1a1a1a" stroke-width="1.2" /><rect x="1.5" y="13.5" width="2" height="2" fill="#f4f4ff" stroke="#2020ff" stroke-width="1"/><rect x="12.5" y="12.5" width="2" height="2" fill="#f4f4ff" stroke="#2020ff" stroke-width="1"/><rect x="3.5" y="1.5" width="2" height="2" fill="#f4f4ff" stroke="#2020ff" stroke-width="1"/><rect x="10.5" y="1.5" width="2" height="2" fill="#f4f4ff" stroke="#2020ff" stroke-width="1"/></svg>
<svg style="left:20px;top:330px" width="4" height="4" viewBox="0 0 4 4" ><path d="M4 0V4H0Z" fill="#000"/></svg>
<svg style="left:5px;top:337px" width="16" height="16" viewBox="0 0 16 16" ><path d="M4 3.500l8-1.500 2.500 4-3 7.500-8 1.500-2-4.500zM4 3.500l2.500 4.500 8-1.500M6.500 8l-3 7" fill="none" stroke="#a8a8a8" stroke-width="1" /><path d="M6.500 8l6.500-1.200-2 5-6 1z" fill="#e4e4e4" stroke="#c4c4c4" stroke-width="1"/></svg>
<svg style="left:20px;top:352px" width="4" height="4" viewBox="0 0 4 4" ><path d="M4 0V4H0Z" fill="#000"/></svg>
<svg style="left:5px;top:359px" width="16" height="16" viewBox="0 0 16 16" ><path d="M3.500 5.500l7-3.500v9l-7 3.500z" fill="#8a8a8a" stroke="#1a1a1a" stroke-width="1"/><path d="M10.500 2l3 1.500v9l-3-1.500z" fill="#d0d0d0" stroke="#1a1a1a" stroke-width="1"/><rect x="2.5" y="12.5" width="2" height="2" fill="#f4f4ff" stroke="#2020ff" stroke-width="1"/><rect x="11.5" y="9.5" width="2" height="2" fill="#f4f4ff" stroke="#2020ff" stroke-width="1"/></svg>
<svg style="left:20px;top:374px" width="4" height="4" viewBox="0 0 4 4" ><path d="M4 0V4H0Z" fill="#000"/></svg>
<svg style="left:5px;top:381px" width="16" height="16" viewBox="0 0 16 16" ><path d="M8 1.500v13M1.500 8h13" fill="none" stroke="#555" stroke-width="1.1" /><path d="M6 3.500l2-2 2 2M6 12.500l2 2 2-2M3.500 6l-2 2 2 2M12.500 6l2 2-2 2" fill="none" stroke="#555" stroke-width="1.1" /><path d="M1 .5h14M1 15.500h14" fill="none" stroke="#888" stroke-width="0.8" /></svg>
<svg style="left:20px;top:396px" width="4" height="4" viewBox="0 0 4 4" ><path d="M4 0V4H0Z" fill="#000"/></svg>
<svg style="left:5px;top:403px" width="16" height="16" viewBox="0 0 16 16" ><text x="8" y="15" font-size="19" fill="#2a2a2a" text-anchor="middle" font-family="Liberation Sans, sans-serif">A</text></svg>
<svg style="left:20px;top:418px" width="4" height="4" viewBox="0 0 4 4" ><path d="M4 0V4H0Z" fill="#000"/></svg>
<svg style="left:5px;top:425px" width="16" height="16" viewBox="0 0 16 16" ><rect x="1.5" y="1.5" width="6" height="6" fill="#fff" stroke="#d01010" stroke-width="1.2"/><rect x="2.5" y="2.5" width="2.5" height="2.5" fill="#e01010"/><path d="M7.500 1.500q7 0 7 7h-7z" fill="#fff" stroke="#e01010" stroke-width="1.2"/><rect x="5.5" y="7.5" width="9" height="7.5" fill="#3030f0"/></svg>
<svg style="left:20px;top:440px" width="4" height="4" viewBox="0 0 4 4" ><path d="M4 0V4H0Z" fill="#000"/></svg>
<svg style="left:5px;top:447px" width="16" height="16" viewBox="0 0 16 16" ><circle cx="8" cy="8" r="6.8" fill="#fff" stroke="#70c020" stroke-width="1.6" /><path d="M3.500 3.500l3 3M12.500 3.500l-3 3M3.500 12.500l3-3M12.500 12.500l-3-3M8 2.500v3M8 13.500v-3M2.500 8h3M13.500 8h-3" fill="none" stroke="#1a1ab0" stroke-width="1.3" /></svg>
<svg style="left:20px;top:462px" width="4" height="4" viewBox="0 0 4 4" ><path d="M4 0V4H0Z" fill="#000"/></svg>
<svg style="left:5px;top:469px" width="16" height="16" viewBox="0 0 16 16" ><circle cx="3" cy="3.5" r="2" fill="none" stroke="#1a1a1a" stroke-width="1.2" /><circle cx="5.5" cy="3.5" r="2" fill="none" stroke="#1a1a1a" stroke-width="1.2" /><path d="M5.500 11.500l7-7" fill="none" stroke="#1a1a1a" stroke-width="1" /><path d="M13.500 3.500l-3.500 1 2.500 2.500z" fill="#1a1a1a"/><rect x="12.5" y="2.5" width="2" height="2" fill="#f4f4ff" stroke="#2020ff" stroke-width="1"/><rect x="4.5" y="11.5" width="2" height="2" fill="#f4f4ff" stroke="#2020ff" stroke-width="1"/></svg>
<svg style="left:20px;top:484px" width="4" height="4" viewBox="0 0 4 4" ><path d="M4 0V4H0Z" fill="#000"/></svg>
<svg style="left:5px;top:491px" width="16" height="16" viewBox="0 0 16 16" ><path d="M3.500 10q-2-7 4.500-7.500q6 0 6 6" fill="none" stroke="#d02020" stroke-width="1.2" /><path d="M14 8.500q0 4.500-4 5.500" fill="none" stroke="#1a1a1a" stroke-width="1.2" /><path d="M8 8.500l5-5" fill="none" stroke="#999" stroke-width="0.9" stroke-dasharray="1 1.500"/></svg>
<svg style="left:20px;top:506px" width="4" height="4" viewBox="0 0 4 4" ><path d="M4 0V4H0Z" fill="#000"/></svg>
<svg style="left:5px;top:513px" width="16" height="16" viewBox="0 0 16 16" ><circle cx="10.5" cy="6" r="4.5" fill="#f4f4f4" stroke="#c4c4c4" stroke-width="1" /><rect x="2.5" y="6.5" width="8" height="8" fill="#b4b4b4" stroke="#a8a8a8" stroke-width="1"/></svg>
<svg style="left:20px;top:528px" width="4" height="4" viewBox="0 0 4 4" ><path d="M4 0V4H0Z" fill="#000"/></svg>
<svg style="left:5px;top:535px" width="16" height="16" viewBox="0 0 16 16" ><path d="M3 3l4-2 5 4-4 3z" fill="#f0e020" stroke="#1a1a1a" stroke-width="1.1"/><path d="M8 8l4-3 1.500 2-4 3z" fill="#777" stroke="#1a1a1a" stroke-width="0.8"/><rect x="5.5" y="3.5" width="2" height="2" fill="#333"/><path d="M4 11l1.500 1.500M5.5 11l-1.500 1.500" fill="none" stroke="#2222ee" stroke-width="1" /><path d="M9 13l1.500 1.500M10.5 13l-1.500 1.500" fill="none" stroke="#20a040" stroke-width="1" /><path d="M13 10l1.500 1.500M14.5 10l-1.500 1.500" fill="none" stroke="#2222ee" stroke-width="1" /><path d="M12.5 6.5l1.500 1.500M14.0 6.5l-1.500 1.500" fill="none" stroke="#20a040" stroke-width="1" /></svg>
<svg style="left:20px;top:550px" width="4" height="4" viewBox="0 0 4 4" ><path d="M4 0V4H0Z" fill="#000"/></svg>
<div style="left:3px;top:556px;width:19px;height:1px;background:#a0a0a0;"></div>
<div style="left:3px;top:584px;width:19px;height:1px;background:#a0a0a0;"></div>
<svg style="left:5px;top:563px" width="16" height="16" viewBox="0 0 16 16" ><rect x="2.5" y="2.5" width="8" height="8" fill="none" stroke="#a8a8a8" stroke-width="1.3"/><rect x="5.5" y="5.5" width="8" height="8" fill="none" stroke="#a8a8a8" stroke-width="1.3"/><rect x="1.3" y="1.3" width="2.4" height="2.4" fill="#a0a0a0"/><rect x="9.3" y="1.3" width="2.4" height="2.4" fill="#a0a0a0"/><rect x="1.3" y="9.3" width="2.4" height="2.4" fill="#a0a0a0"/><rect x="4.3" y="12.3" width="2.4" height="2.4" fill="#a0a0a0"/><rect x="12.3" y="12.3" width="2.4" height="2.4" fill="#a0a0a0"/><rect x="12.3" y="4.3" width="2.4" height="2.4" fill="#a0a0a0"/><rect x="4.5" y="4.5" width="2.4" height="2.4" fill="#a0a0a0"/></svg>
<svg style="left:20px;top:578px" width="4" height="4" viewBox="0 0 4 4" ><path d="M4 0V4H0Z" fill="#000"/></svg>
<svg style="left:5px;top:591px" width="16" height="16" viewBox="0 0 16 16" ><rect x="2.5" y="1.5" width="8" height="9" fill="#f2f2f2" stroke="#a8a8a8" stroke-width="1.1"/><rect x="4.5" y="3.5" width="8" height="9" fill="#f2f2f2" stroke="#a8a8a8" stroke-width="1.1"/><rect x="6.5" y="5.5" width="8" height="9" fill="#f2f2f2" stroke="#a8a8a8" stroke-width="1.1"/></svg>
<svg style="left:20px;top:606px" width="4" height="4" viewBox="0 0 4 4" ><path d="M4 0V4H0Z" fill="#000"/></svg>
<svg style="left:5px;top:613px" width="16" height="16" viewBox="0 0 16 16" ><path d="M10 1l6 5h-6z" fill="#ff3030"/><path d="M1 9v6h6z" fill="#3030ff"/><path d="M4 13l8-8" fill="none" stroke="#555" stroke-width="2.2" /><path d="M4 13l8-8" fill="none" stroke="#fff" stroke-width="0.9" /><path d="M12.500 3.500l-4 1 3 3z" fill="#fff" stroke="#555" stroke-width="0.8"/><circle cx="10" cy="6" r="0.8" fill="#e0c020" /></svg>
<svg style="left:20px;top:628px" width="4" height="4" viewBox="0 0 4 4" ><path d="M4 0V4H0Z" fill="#000"/></svg>
<svg style="left:1678px;top:222px" width="16" height="16" viewBox="0 0 16 16" ><g transform="translate(0,-1.500)"><path d="M3 5.500l5-3.500q3 .5 5.500 5.500q1 2.500-1 4l-2.500 2q-2 1-4-1z" fill="#fff" stroke="#3a3a3a" stroke-width="0.9"/><path d="M3.500 6l4.500 5M5.500 4l4.500 5" fill="none" stroke="#3a3a3a" stroke-width="0.8" /><path d="M3 2.500h5" fill="none" stroke="#1a1a1a" stroke-width="1" stroke-dasharray="1.500 1"/><path d="M2.500 3.500l3 3" fill="none" stroke="#3a3a3a" stroke-width="0.9" /><text x="11.5" y="5" font-size="5" fill="#ff0000" font-weight="bold" text-anchor="start" font-family="Liberation Sans, sans-serif">Y</text><text x="0" y="15" font-size="6" fill="#ff0000" font-weight="bold" text-anchor="start" font-family="Liberation Sans, sans-serif">x</text></g></svg>
<svg style="left:1706px;top:222px" width="16" height="16" viewBox="0 0 16 16" ><rect x="1.5" y="5.5" width="2" height="2" fill="#ddd" stroke="#8a8a8a" stroke-width="1"/><path d="M6 6.500h6M9.500 4l2.500 2.500-2.500 2.500" fill="none" stroke="#000" stroke-width="1.1" /><rect x="13.5" y="5.5" width="2" height="2" fill="#fff" stroke="#ff0000" stroke-width="1"/></svg>
<svg style="left:1734px;top:222px" width="16" height="16" viewBox="0 0 16 16" ><path d="M0.500 11l5-5M6 5.500l3-3.500" fill="none" stroke="#000" stroke-width="1.1" /><path d="M6.500 6.500l7.500 7" fill="none" stroke="#777" stroke-width="0.9" /><path d="M10.500 3l4 9.500" fill="none" stroke="#fff" stroke-width="1.2" stroke-dasharray="1.200 1.200"/><rect x="4.5" y="4.5" width="2" height="2" fill="#fff" stroke="#ff0000" stroke-width="1"/><rect x="8.5" y="0.5" width="2" height="2" fill="#fff" stroke="#333" stroke-width="1"/></svg>
<svg style="left:1762px;top:222px" width="16" height="16" viewBox="0 0 16 16" ><path d="M2 14l12-12" fill="none" stroke="#000" stroke-width="1.1" /><rect x="4.5" y="9.5" width="2" height="2" fill="#fff" stroke="#ff0000" stroke-width="1"/><rect x="9.5" y="4.5" width="2" height="2" fill="#fff" stroke="#ff0000" stroke-width="1"/></svg>
<svg style="left:1790px;top:222px" width="16" height="16" viewBox="0 0 16 16" ><path d="M4.500 13.500q-4.500-5 .5-9.500q5.500-3.500 9.500 3" fill="none" stroke="#000" stroke-width="1.2" /><rect x="7.5" y="7.5" width="2" height="2" fill="#fff" stroke="#ff0000" stroke-width="1"/></svg>
<svg style="left:1818px;top:222px" width="16" height="16" viewBox="0 0 16 16" ><rect x="2.5" y="4.5" width="9" height="9" fill="none" stroke="#000" stroke-width="1.2"/><path d="M2.500 4.500l3.500-3.500h9v9l-3.500 3.500M11.500 4.500l3.500-3.500" fill="none" stroke="#000" stroke-width="1.1" /><rect x="4.5" y="6.5" width="5" height="5" fill="none" stroke="#777" stroke-width="0.8"/><rect x="6.5" y="7.5" width="2" height="2" fill="#fff" stroke="#ff0000" stroke-width="1"/></svg>
<svg style="left:1846px;top:222px" width="16" height="16" viewBox="0 0 16 16" ><circle cx="7.5" cy="7.5" r="7" fill="none" stroke="#000" stroke-width="1.1" stroke-dasharray="2 1.300"/><path d="M7.500 2v11M2 7.500h11" fill="none" stroke="#000" stroke-width="0.9" stroke-dasharray="1 1"/><path d="M6.500 0l1 1.500 1-1.500M6.500 15l1-1.500 1 1.500M0 6.500l1.500 1-1.500 1M15 6.500l-1.500 1 1.500 1" fill="none" stroke="#ff0000" stroke-width="1.3" /></svg>
<svg style="left:1678px;top:250px" width="16" height="16" viewBox="0 0 16 16" ><path d="M3 0l12 12M12 0l-12 12" fill="none" stroke="#000" stroke-width="1.1" /><rect x="6.5" y="3.5" width="2" height="2" fill="#fff" stroke="#ff0000" stroke-width="1"/></svg>
<svg style="left:1706px;top:250px" width="16" height="16" viewBox="0 0 16 16" ><rect x="1" y="0" width="1" height="1" fill="#000"/><rect x="1" y="4" width="1" height="1" fill="#000"/><rect x="1" y="8" width="1" height="1" fill="#000"/><rect x="1" y="12" width="1" height="1" fill="#000"/><rect x="5" y="0" width="1" height="1" fill="#000"/><rect x="5" y="4" width="1" height="1" fill="#000"/><rect x="5" y="8" width="1" height="1" fill="#000"/><rect x="5" y="12" width="1" height="1" fill="#000"/><rect x="9" y="0" width="1" height="1" fill="#000"/><rect x="9" y="4" width="1" height="1" fill="#000"/><rect x="9" y="8" width="1" height="1" fill="#000"/><rect x="9" y="12" width="1" height="1" fill="#000"/><rect x="13" y="0" width="1" height="1" fill="#000"/><rect x="13" y="4" width="1" height="1" fill="#000"/><rect x="13" y="8" width="1" height="1" fill="#000"/><rect x="13" y="12" width="1" height="1" fill="#000"/><rect x="12.5" y="11.5" width="2" height="2" fill="#fff" stroke="#ff0000" stroke-width="1"/></svg>
<svg style="left:1734px;top:250px" width="16" height="16" viewBox="0 0 16 16" ><path d="M0.500 5.500l3.500-3.500 3.500 3.500-3.500 3.500z" fill="none" stroke="#000" stroke-width="1" /><path d="M6.500 7.500l6 5.500" fill="none" stroke="#777" stroke-width="0.9" /><path d="M11.500 3l3 8.500" fill="none" stroke="#fff" stroke-width="1.2" stroke-dasharray="1.200 1.200"/><rect x="4.5" y="5.5" width="2" height="2" fill="#fff" stroke="#ff0000" stroke-width="1"/><rect x="9.5" y="0.5" width="2" height="2" fill="#ddd" stroke="#8a8a8a" stroke-width="1"/></svg>
<svg style="left:1762px;top:250px" width="16" height="16" viewBox="0 0 16 16" ><path d="M1.500 12l2.500-9h7l2.500 9z" fill="none" stroke="#000" stroke-width="1.3" /><rect x="6.5" y="6.5" width="2" height="2" fill="#fff" stroke="#ff0000" stroke-width="1"/></svg>
<svg style="left:1790px;top:250px" width="16" height="16" viewBox="0 0 16 16" ><path d="M0.500 10.500q7-3 11-10M4.500 14q0-6 1.500-8M7 5q3-2 7.500-1.500" fill="none" stroke="#000" stroke-width="1.1" /><rect x="5.5" y="4.5" width="2" height="2" fill="#fff" stroke="#ff0000" stroke-width="1"/></svg>
<svg style="left:1818px;top:250px" width="16" height="16" viewBox="0 0 16 16" ><path d="M1 11.500h14" fill="none" stroke="#000" stroke-width="1.2" /><path d="M7.500 4.500v5" fill="none" stroke="#000" stroke-width="1" stroke-dasharray="1.200 1"/><path d="M5.500 .5l4 3.500M9.500 .5l-4 3.500" fill="none" stroke="#ff0000" stroke-width="1.5" /><rect x="6.5" y="10.5" width="2" height="2" fill="#fff" stroke="#ff0000" stroke-width="1"/></svg>
<svg style="left:1846px;top:250px" width="16" height="16" viewBox="0 0 16 16" ><path d="M1 7.500h14" fill="none" stroke="#000" stroke-width="1.2" /><path d="M7.500 4.500v8" fill="none" stroke="#000" stroke-width="1" stroke-dasharray="1.200 1"/><path d="M5.500 .5l4 3.500M9.500 .5l-4 3.500" fill="none" stroke="#ff0000" stroke-width="1.5" /><rect x="6.5" y="13" width="2" height="2" fill="#fff" stroke="#ff0000" stroke-width="1"/></svg>
<svg style="left:1678px;top:278px" width="16" height="16" viewBox="0 0 16 16" ><path d="M7.500 0v14M0.500 7h14M2.500 2l10 10M12.500 2l-10 10" fill="none" stroke="#7a7a7a" stroke-width="1.1" /><text x="11.5" y="3.5" font-size="4.5" fill="#ff0000" font-weight="bold" text-anchor="start" font-family="Liberation Sans, sans-serif">M</text></svg>
<svg style="left:1706px;top:278px" width="16" height="16" viewBox="0 0 16 16" ><path d="M1 14.500l7-4.500 .5-9.500z" fill="#8a8a8a"/><path d="M8.500 4l5.500 7-5.500 3.500z" fill="#e8e8e8" stroke="#8a8a8a" stroke-width="0.8"/><path d="M2.500 8.500l1 1M4.500 6.500l1 1" fill="none" stroke="#8a8a8a" stroke-width="0.8" /><rect x="7.5" y="10.5" width="2" height="2" fill="#fff" stroke="#ff0000" stroke-width="1"/></svg>
<svg style="left:1734px;top:278px" width="16" height="16" viewBox="0 0 16 16" ><path d="M4.500 9v-4.200q0-3.600 4-3.600t4 3.600v4.200" fill="none" stroke="#000" stroke-width="2.8" /><path d="M4.500 16q4-6 8 0" fill="none" stroke="#000" stroke-width="1.1" /><rect x="7.5" y="10.5" width="2" height="2" fill="#fff" stroke="#ff0000" stroke-width="1"/></svg>
<svg style="left:1762px;top:278px" width="16" height="16" viewBox="0 0 16 16" ><path d="M2.500 3.500v10M11 10l3.500 3.500" fill="none" stroke="#000" stroke-width="1.2" /><path d="M4 2.500h7v5.500" fill="none" stroke="#000" stroke-width="1" stroke-dasharray="1.200 1"/><rect x="1.5" y="1.5" width="2" height="2" fill="#fff" stroke="#ff0000" stroke-width="1"/><rect x="9.5" y="8.5" width="2" height="2" fill="#fff" stroke="#ff0000" stroke-width="1"/></svg>
<svg style="left:1790px;top:278px" width="16" height="16" viewBox="0 0 16 16" ><path d="M1.500 13.500l3-6M14 13.500l-3-6" fill="none" stroke="#000" stroke-width="1.2" /><path d="M5 6l2.500-5.500 2.500 5.500" fill="none" stroke="#000" stroke-width="1" stroke-dasharray="1.200 1.200"/><rect x="3.5" y="6.5" width="2" height="2" fill="#fff" stroke="#ff0000" stroke-width="1"/><rect x="9.5" y="6.5" width="2" height="2" fill="#fff" stroke="#ff0000" stroke-width="1"/></svg>
<svg style="left:1678px;top:349px" width="16" height="16" viewBox="0 0 16 16" ><path d="M2.500 12.500l10-10" fill="none" stroke="#000" stroke-width="1.1" /><rect x="1.5" y="11.5" width="2" height="2" fill="#f4f4ff" stroke="#2020ff" stroke-width="1"/><rect x="11.5" y="1.5" width="2" height="2" fill="#f4f4ff" stroke="#2020ff" stroke-width="1"/></svg>
<svg style="left:1706px;top:349px" width="16" height="16" viewBox="0 0 16 16" ><path d="M2.500 9.500l7-7 4 4-4 3.500 3 4" fill="none" stroke="#000" stroke-width="1.1" /><rect x="1.5" y="8.5" width="2" height="2" fill="#f4f4ff" stroke="#2020ff" stroke-width="1"/><rect x="8.5" y="1.5" width="2" height="2" fill="#f4f4ff" stroke="#2020ff" stroke-width="1"/><rect x="12.5" y="5.5" width="2" height="2" fill="#f4f4ff" stroke="#2020ff" stroke-width="1"/><rect x="10.5" y="13.5" width="2" height="2" fill="#f4f4ff" stroke="#2020ff" stroke-width="1"/></svg>
<svg style="left:1734px;top:349px" width="16" height="16" viewBox="0 0 16 16" ><path d="M5.500 2h5l3.500 3.500v5l-3.500 3.500h-5l-3.500-3.500v-5z" fill="none" stroke="#000" stroke-width="1.2" /><path d="M5.500 14.500h5" fill="none" stroke="#000" stroke-width="2" /><rect x="1.5" y="3.5" width="2" height="2" fill="#f4f4ff" stroke="#2020ff" stroke-width="1"/><rect x="7.5" y="7.5" width="2" height="2" fill="#f4f4ff" stroke="#2020ff" stroke-width="1"/></svg>
<svg style="left:1762px;top:349px" width="16" height="16" viewBox="0 0 16 16" ><path d="M3.500 2.500l10 6-7 6.500z" fill="none" stroke="#000" stroke-width="1.1" /><rect x="2.5" y="1.5" width="2" height="2" fill="#f4f4ff" stroke="#2020ff" stroke-width="1"/><rect x="12.5" y="7.5" width="2" height="2" fill="#f4f4ff" stroke="#2020ff" stroke-width="1"/><rect x="5.5" y="13.5" width="2" height="2" fill="#f4f4ff" stroke="#2020ff" stroke-width="1"/></svg>
<svg style="left:1790px;top:349px" width="16" height="16" viewBox="0 0 16 16" ><rect x="2.5" y="2.5" width="11" height="11" fill="none" stroke="#000" stroke-width="1.3"/><rect x="1.5" y="1.5" width="2" height="2" fill="#f4f4ff" stroke="#2020ff" stroke-width="1"/><rect x="12.5" y="13.5" width="2" height="2" fill="#f4f4ff" stroke="#2020ff" stroke-width="1"/></svg>
<svg style="left:1818px;top:349px" width="16" height="16" viewBox="0 0 16 16" ><path d="M8.500 2.500l6 6-6 6-6-6z" fill="none" stroke="#000" stroke-width="1.1" /><rect x="7.5" y="1.5" width="2" height="2" fill="#f4f4ff" stroke="#2020ff" stroke-width="1"/><rect x="6.5" y="13.5" width="2" height="2" fill="#f4f4ff" stroke="#2020ff" stroke-width="1"/><path d="M13 12v-3h3M13 9l2.500 2.500" fill="none" stroke="#2020ff" stroke-width="1.3" /></svg>
<svg style="left:1846px;top:349px" width="16" height="16" viewBox="0 0 16 16" ><path d="M2 12.500l10-10M7.500 7.500l7 7" fill="none" stroke="#000" stroke-width="1.1" /><rect x="6.5" y="6.5" width="2" height="2" fill="#f4f4ff" stroke="#2020ff" stroke-width="1"/><rect x="13.5" y="13.5" width="2" height="2" fill="#f4f4ff" stroke="#2020ff" stroke-width="1"/></svg>
<svg style="left:1678px;top:377px" width="16" height="16" viewBox="0 0 16 16" ><path d="M1.500 12l10-10M6.500 15.500l9-9" fill="none" stroke="#000" stroke-width="1.1" /><rect x="5.5" y="5.5" width="2" height="2" fill="#f4f4ff" stroke="#2020ff" stroke-width="1"/><rect x="9.5" y="10.5" width="2" height="2" fill="#f4f4ff" stroke="#2020ff" stroke-width="1"/></svg>
<svg style="left:1706px;top:377px" width="16" height="16" viewBox="0 0 16 16" ><path d="M5.500 5h5l3 3v4l-3 3h-5l-3-3v-4z" fill="none" stroke="#000" stroke-width="1.2" /><path d="M5.500 15.500h5" fill="none" stroke="#000" stroke-width="2" /><path d="M6 2l10 10" fill="none" stroke="#000" stroke-width="1.1" /><rect x="9.5" y="5.5" width="2" height="2" fill="#f4f4ff" stroke="#2020ff" stroke-width="1"/></svg>
<svg style="left:1734px;top:377px" width="16" height="16" viewBox="0 0 16 16" ><path d="M2 2q4 0 6 3.500t-2 9" fill="none" stroke="#000" stroke-width="1.2" /><path d="M7.500 5l8 8" fill="none" stroke="#000" stroke-width="1.1" /><rect x="4" y="14" width="2" height="2" fill="#000"/><rect x="6.5" y="4.5" width="2" height="2" fill="#fff" stroke="#ff0000" stroke-width="1"/><rect x="14.5" y="12.5" width="2" height="2" fill="#f4f4ff" stroke="#2020ff" stroke-width="1"/></svg>
<svg style="left:1762px;top:377px" width="16" height="16" viewBox="0 0 16 16" ><path d="M2 1.500q5 0 7 4.500t-5 9" fill="none" stroke="#000" stroke-width="1.2" /><path d="M8 4.500l8 8" fill="none" stroke="#000" stroke-width="1.1" /><rect x="2" y="14" width="2.5" height="2" fill="#000"/><rect x="6.5" y="3.5" width="2" height="2" fill="#f4f4ff" stroke="#2020ff" stroke-width="1"/><rect x="14.5" y="11.5" width="2" height="2" fill="#fff" stroke="#ff0000" stroke-width="1"/></svg>
<svg style="left:1790px;top:377px" width="16" height="16" viewBox="0 0 16 16" ><path d="M2 2.500h3q3 0 4 2t-1.500 3.500h-5M6 5l8 6M8 16v-3q0-2.500 3-2.500t3 2.500v3" fill="none" stroke="#000" stroke-width="1.2" /><rect x="4.5" y="2.5" width="2" height="2" fill="#f4f4ff" stroke="#2020ff" stroke-width="1"/><rect x="12.5" y="10.5" width="2" height="2" fill="#f4f4ff" stroke="#2020ff" stroke-width="1"/></svg>
<svg style="left:1818px;top:377px" width="16" height="16" viewBox="0 0 16 16" ><path d="M8 1.500q-.5 3 3 4.500h4M2 10.500q3-1 4.500 1t-1 4.500M5 10.500l6-6" fill="none" stroke="#000" stroke-width="1.2" /><rect x="9.5" y="4.5" width="2" height="2" fill="#f4f4ff" stroke="#2020ff" stroke-width="1"/><rect x="3.5" y="9.5" width="2" height="2" fill="#f4f4ff" stroke="#2020ff" stroke-width="1"/></svg>
<svg style="left:1846px;top:377px" width="16" height="16" viewBox="0 0 16 16" ><path d="M8.500 2v12M2.500 8.500l6 6 6-6" fill="none" stroke="#000" stroke-width="1.1" /><rect x="7.5" y="1.5" width="2" height="2" fill="#f4f4ff" stroke="#2020ff" stroke-width="1"/><rect x="1.5" y="7.5" width="2" height="2" fill="#f4f4ff" stroke="#2020ff" stroke-width="1"/><rect x="13.5" y="7.5" width="2" height="2" fill="#f4f4ff" stroke="#2020ff" stroke-width="1"/><rect x="7.5" y="13.5" width="2" height="2" fill="#f4f4ff" stroke="#2020ff" stroke-width="1"/></svg>
<svg style="left:1678px;top:450px" width="16" height="16" viewBox="0 0 16 16" ><circle cx="7.5" cy="7.5" r="6.8" fill="none" stroke="#000" stroke-width="1.15" /><path d="M5.500 14.700h4" fill="none" stroke="#000" stroke-width="1.8" /><rect x="6.5" y="6.5" width="2" height="2" fill="#f4f4ff" stroke="#2020ff" stroke-width="1"/><rect x="13.5" y="6.5" width="2" height="2" fill="#f4f4ff" stroke="#2020ff" stroke-width="1"/></svg>
<svg style="left:1706px;top:450px" width="16" height="16" viewBox="0 0 16 16" ><circle cx="7.5" cy="7.5" r="6.8" fill="none" stroke="#000" stroke-width="1.15" /><circle cx="7.5" cy="7.5" r="4.3" fill="none" stroke="#000" stroke-width="1.1" /><path d="M5.500 14.700h4" fill="none" stroke="#000" stroke-width="1.8" /><rect x="6.5" y="6.5" width="2" height="2" fill="#f4f4ff" stroke="#2020ff" stroke-width="1"/><rect x="10.5" y="6.5" width="2" height="2" fill="#f4f4ff" stroke="#2020ff" stroke-width="1"/><rect x="13.5" y="6.5" width="2" height="2" fill="#f4f4ff" stroke="#2020ff" stroke-width="1"/></svg>
<svg style="left:1734px;top:450px" width="16" height="16" viewBox="0 0 16 16" ><circle cx="8" cy="7.5" r="6.8" fill="none" stroke="#000" stroke-width="1.15" /><path d="M6 14.700h4" fill="none" stroke="#000" stroke-width="1.8" /><rect x="0.5" y="6.5" width="2" height="2" fill="#f4f4ff" stroke="#2020ff" stroke-width="1"/><rect x="13.5" y="6.5" width="2" height="2" fill="#f4f4ff" stroke="#2020ff" stroke-width="1"/></svg>
<svg style="left:1762px;top:450px" width="16" height="16" viewBox="0 0 16 16" ><circle cx="8.5" cy="8" r="6.8" fill="none" stroke="#000" stroke-width="1.15" /><path d="M0.500 1.500l4 1.500M8 0.500l2.500 .5" fill="none" stroke="#000" stroke-width="1.1" /><path d="M6.500 14.900h4" fill="none" stroke="#000" stroke-width="1.8" /><rect x="4.5" y="0.5" width="2" height="2" fill="#f4f4ff" stroke="#2020ff" stroke-width="1"/><rect x="11.5" y="11.5" width="2" height="2" fill="#f4f4ff" stroke="#2020ff" stroke-width="1"/></svg>
<svg style="left:1790px;top:450px" width="16" height="16" viewBox="0 0 16 16" ><circle cx="7.5" cy="7.7" r="6.8" fill="none" stroke="#000" stroke-width="1.15" /><path d="M0 0.500h15" fill="none" stroke="#000" stroke-width="1.3" /><path d="M7.500 1.500v12" fill="none" stroke="#888" stroke-width="0.9" stroke-dasharray="1 1"/><rect x="13.5" y="6.5" width="2" height="2" fill="#f4f4ff" stroke="#2020ff" stroke-width="1"/><rect x="6.5" y="12.5" width="2" height="2" fill="#f4f4ff" stroke="#2020ff" stroke-width="1"/></svg>
<svg style="left:1818px;top:450px" width="16" height="16" viewBox="0 0 16 16" ><circle cx="8" cy="7.5" r="6.8" fill="none" stroke="#000" stroke-width="1.15" /><rect x="2.5" y="1.5" width="2" height="2" fill="#f4f4ff" stroke="#2020ff" stroke-width="1"/><rect x="11.5" y="1.5" width="2" height="2" fill="#f4f4ff" stroke="#2020ff" stroke-width="1"/><rect x="7" y="13.5" width="2" height="2" fill="#f4f4ff" stroke="#2020ff" stroke-width="1"/></svg>
<svg style="left:1846px;top:450px" width="16" height="16" viewBox="0 0 16 16" ><circle cx="8.5" cy="8" r="6.5" fill="none" stroke="#000" stroke-width="1.15" /><path d="M3 0.500l3 2M12 0.500l-3 2M0.500 7.500l3 .5M3 15.500l1.500-4M11 15.500l1-3" fill="none" stroke="#000" stroke-width="1.1" /><rect x="7.5" y="0.5" width="2" height="2" fill="#f4f4ff" stroke="#2020ff" stroke-width="1"/><rect x="2.5" y="8.5" width="2" height="2" fill="#f4f4ff" stroke="#2020ff" stroke-width="1"/><rect x="12.5" y="10.5" width="2" height="2" fill="#f4f4ff" stroke="#2020ff" stroke-width="1"/></svg>
<svg style="left:1678px;top:478px" width="16" height="16" viewBox="0 0 16 16" ><path d="M1.200 11.800l11.600-11.500M6.500 15.600v-2.500M12.800 15.600v-2.500" fill="none" stroke="#000" stroke-width="1.1" /><circle cx="9.5" cy="8.5" r="3.7" fill="none" stroke="#000" stroke-width="1.1" /><path d="M6.500 13q3-2.500 6.300 0" fill="none" stroke="#000" stroke-width="1.1" /><rect x="6.5" y="4.5" width="2" height="2" fill="#f4f4ff" stroke="#2020ff" stroke-width="1"/><rect x="12.5" y="6.5" width="2" height="2" fill="#f4f4ff" stroke="#2020ff" stroke-width="1"/><rect x="8.5" y="10.5" width="2" height="2" fill="#f4f4ff" stroke="#2020ff" stroke-width="1"/></svg>
<svg style="left:1706px;top:478px" width="16" height="16" viewBox="0 0 16 16" ><ellipse cx="8.4" cy="7.5" rx="7" ry="4.3" fill="none" stroke="#000" stroke-width="1.15" /><rect x="1.5" y="3.5" width="2" height="2" fill="#f4f4ff" stroke="#2020ff" stroke-width="1"/><rect x="13.5" y="9.5" width="2" height="2" fill="#f4f4ff" stroke="#2020ff" stroke-width="1"/></svg>
<svg style="left:1734px;top:478px" width="16" height="16" viewBox="0 0 16 16" ><ellipse cx="8.3" cy="7.8" rx="8.6" ry="3.8" fill="none" stroke="#000" stroke-width="1.15" transform="rotate(-46 8.300 7.800)"/><path d="M3 13.500l11-11.500" fill="none" stroke="#777" stroke-width="0.8" /><path d="M2.500 15h3" fill="none" stroke="#000" stroke-width="1.8" /><rect x="13.5" y="0.5" width="2" height="2" fill="#f4f4ff" stroke="#2020ff" stroke-width="1"/><rect x="1.5" y="12.5" width="2" height="2" fill="#f4f4ff" stroke="#2020ff" stroke-width="1"/><rect x="7.5" y="6.5" width="2" height="2" fill="#f4f4ff" stroke="#2020ff" stroke-width="1"/><rect x="10.5" y="9.5" width="2" height="2" fill="#f4f4ff" stroke="#2020ff" stroke-width="1"/></svg>
<svg style="left:1762px;top:478px" width="16" height="16" viewBox="0 0 16 16" ><ellipse cx="8.5" cy="10.4" rx="7" ry="4" fill="none" stroke="#000" stroke-width="1.15" /><path d="M6.500 15h4" fill="none" stroke="#000" stroke-width="1.8" /><text x="8.5" y="4.5" font-size="6" fill="#2020d0" font-weight="bold" text-anchor="middle" font-family="Liberation Sans, sans-serif">a:b</text></svg>
<svg style="left:1678px;top:550px" width="16" height="16" viewBox="0 0 16 16" ><path d="M2.500 12.500q-4-6 1-10.500q5.500-4 9.500 .5q2 2.500 1.500 5" fill="none" stroke="#000" stroke-width="1.15" /><path d="M3 12l4.500-4.500h6" fill="none" stroke="#777" stroke-width="0.9" /><rect x="1.5" y="11.5" width="2" height="2" fill="#f4f4ff" stroke="#2020ff" stroke-width="1"/><rect x="6.5" y="6.5" width="2" height="2" fill="#f4f4ff" stroke="#2020ff" stroke-width="1"/><rect x="13.5" y="6.5" width="2" height="2" fill="#f4f4ff" stroke="#2020ff" stroke-width="1"/></svg>
<svg style="left:1706px;top:550px" width="16" height="16" viewBox="0 0 16 16" ><path d="M2.500 12.500q-4-6 1-10.500q5.500-4 9.500 .5q2 2.500 1.500 5M4.500 10q-2-4 1.500-6q4-2 6 2" fill="none" stroke="#000" stroke-width="1.15" /><path d="M3 12l4.500-4.500h6" fill="none" stroke="#777" stroke-width="0.9" /><rect x="1.5" y="11.5" width="2" height="2" fill="#f4f4ff" stroke="#2020ff" stroke-width="1"/><rect x="6.5" y="6.5" width="2" height="2" fill="#f4f4ff" stroke="#2020ff" stroke-width="1"/><rect x="13.5" y="6.5" width="2" height="2" fill="#f4f4ff" stroke="#2020ff" stroke-width="1"/></svg>
<svg style="left:1734px;top:550px" width="16" height="16" viewBox="0 0 16 16" ><path d="M1.500 6.500q1 7 7 7q7.500-.5 6-9q-.3-2-1-3" fill="none" stroke="#000" stroke-width="1.15" /><path d="M3 7l5-.5 5-4.500" fill="none" stroke="#888" stroke-width="0.9" stroke-dasharray="1 1"/><rect x="0.5" y="5.5" width="2" height="2" fill="#f4f4ff" stroke="#2020ff" stroke-width="1"/><rect x="12.5" y="0.5" width="2" height="2" fill="#f4f4ff" stroke="#2020ff" stroke-width="1"/></svg>
<svg style="left:1762px;top:550px" width="16" height="16" viewBox="0 0 16 16" ><path d="M2.500 14q-2.500-8 2-11q5-3 9 6" fill="none" stroke="#000" stroke-width="1.15" /><path d="M0.500 3.500l4 -1M6 1.500l3-1.500" fill="none" stroke="#000" stroke-width="1.1" /><path d="M3 13.500l5-4.500h5" fill="none" stroke="#888" stroke-width="0.9" stroke-dasharray="1 1"/><rect x="3.5" y="1.5" width="2" height="2" fill="#f4f4ff" stroke="#2020ff" stroke-width="1"/><rect x="12.5" y="8.5" width="2" height="2" fill="#f4f4ff" stroke="#2020ff" stroke-width="1"/><rect x="1.5" y="12.5" width="2" height="2" fill="#f4f4ff" stroke="#2020ff" stroke-width="1"/></svg>
<svg style="left:1790px;top:550px" width="16" height="16" viewBox="0 0 16 16" ><path d="M0.300 11.700l11.500-11.600" fill="none" stroke="#000" stroke-width="1.1" /><path d="M1.500 0.500l12 12" fill="none" stroke="#999" stroke-width="0.9" stroke-dasharray="1 1.200"/><path d="M6 10q0-3 3.500-3.500" fill="none" stroke="#000" stroke-width="1.15" /><path d="M8.500 11.500v-3.500h3.500" fill="none" stroke="#666" stroke-width="0.9" /><rect x="11.5" y="6.5" width="2" height="2" fill="#f4f4ff" stroke="#2020ff" stroke-width="1"/><rect x="7.5" y="10.5" width="2" height="2" fill="#f4f4ff" stroke="#2020ff" stroke-width="1"/></svg>
<svg style="left:1818px;top:550px" width="16" height="16" viewBox="0 0 16 16" ><text x="0" y="6.5" font-size="7.5" fill="#000" font-weight="bold" text-anchor="start" font-family="Liberation Sans, sans-serif">1</text><text x="0" y="16" font-size="7.5" fill="#000" font-weight="bold" text-anchor="start" font-family="Liberation Sans, sans-serif">3</text><text x="6.8" y="11.5" font-size="7.5" fill="#000" font-weight="bold" text-anchor="start" font-family="Liberation Sans, sans-serif">2</text><path d="M7 1.500q6 0 6.200 6t-6.200 6.500" fill="none" stroke="#000" stroke-width="1.15" /><rect x="5.5" y="0.5" width="2" height="2" fill="#f4f4ff" stroke="#2020ff" stroke-width="1"/><rect x="11.5" y="6.5" width="2" height="2" fill="#f4f4ff" stroke="#2020ff" stroke-width="1"/><rect x="5.5" y="12.5" width="2" height="2" fill="#f4f4ff" stroke="#2020ff" stroke-width="1"/></svg>
<svg style="left:1846px;top:550px" width="16" height="16" viewBox="0 0 16 16" ><text x="0" y="6.5" font-size="7.5" fill="#000" font-weight="bold" text-anchor="start" font-family="Liberation Sans, sans-serif">1</text><text x="0" y="16" font-size="7.5" fill="#000" font-weight="bold" text-anchor="start" font-family="Liberation Sans, sans-serif">2</text><text x="6.8" y="11.5" font-size="7.5" fill="#000" font-weight="bold" text-anchor="start" font-family="Liberation Sans, sans-serif">3</text><path d="M7 1.500q6 0 6.200 6t-6.200 6.500" fill="none" stroke="#000" stroke-width="1.15" /><rect x="5.5" y="0.5" width="2" height="2" fill="#f4f4ff" stroke="#2020ff" stroke-width="1"/><rect x="11.5" y="6.5" width="2" height="2" fill="#f4f4ff" stroke="#2020ff" stroke-width="1"/><rect x="5.5" y="12.5" width="2" height="2" fill="#f4f4ff" stroke="#2020ff" stroke-width="1"/></svg>
<svg style="left:1678px;top:578px" width="16" height="16" viewBox="0 0 16 16" ><path d="M3.500 9.500q-1.500-5.500 4.500-8M13 2q4.500 4.500 .5 9.500M4 13q4 3.500 9-1" fill="none" stroke="#000" stroke-width="1.15" /><path d="M3 0.500l3 2M12.500 1.500l-3 .5M0.500 6.500l3 1M4 15l.5-3M14.500 9v3.500" fill="none" stroke="#000" stroke-width="1.05" /><path d="M12 2.500l-3.500 4.500h4" fill="none" stroke="#888" stroke-width="0.9" stroke-dasharray="1 1"/><rect x="7.5" y="0.5" width="2" height="2" fill="#f4f4ff" stroke="#2020ff" stroke-width="1"/><rect x="2.5" y="8.5" width="2" height="2" fill="#f4f4ff" stroke="#2020ff" stroke-width="1"/><rect x="12.5" y="10.5" width="2" height="2" fill="#f4f4ff" stroke="#2020ff" stroke-width="1"/></svg>
<svg style="left:1706px;top:578px" width="16" height="16" viewBox="0 0 16 16" ><path d="M1.300 11.800l11.500-11.500M6.500 15.600v-2q3-2.500 6 0v2" fill="none" stroke="#000" stroke-width="1.1" /><path d="M9 6.500v4h3" fill="none" stroke="#777" stroke-width="1" /><rect x="6.5" y="4.5" width="2" height="2" fill="#f4f4ff" stroke="#2020ff" stroke-width="1"/><rect x="12.5" y="6.5" width="2" height="2" fill="#f4f4ff" stroke="#2020ff" stroke-width="1"/><rect x="8.5" y="10.5" width="2" height="2" fill="#f4f4ff" stroke="#2020ff" stroke-width="1"/></svg>
<svg style="left:1734px;top:578px" width="16" height="16" viewBox="0 0 16 16" ><path d="M1.300 11.800l11.500-11.500M6.500 15.600v-2q3-2.500 6 0v2" fill="none" stroke="#000" stroke-width="1.1" /><path d="M10 6q3.500 2 1 5.500" fill="none" stroke="#888" stroke-width="1" /><rect x="6.5" y="4.5" width="2" height="2" fill="#f4f4ff" stroke="#2020ff" stroke-width="1"/><rect x="8.5" y="10.5" width="2" height="2" fill="#f4f4ff" stroke="#2020ff" stroke-width="1"/></svg>
<svg style="left:1762px;top:578px" width="16" height="16" viewBox="0 0 16 16" ><path d="M2.500 2q-3 6 2.500 8.500q5 2 9-.5M6 3.500q5-2.500 8.500 1.500q1.500 3-.5 5.500" fill="none" stroke="#000" stroke-width="1.15" /><path d="M6.500 4.500l2.500 3.500 3-3.500" fill="none" stroke="#888" stroke-width="0.9" /><rect x="1.5" y="0.5" width="2" height="2" fill="#f4f4ff" stroke="#2020ff" stroke-width="1"/><rect x="5.5" y="2.5" width="2" height="2" fill="#f4f4ff" stroke="#2020ff" stroke-width="1"/><rect x="10.5" y="2.5" width="2" height="2" fill="#f4f4ff" stroke="#2020ff" stroke-width="1"/><rect x="13.5" y="9.5" width="2" height="2" fill="#f4f4ff" stroke="#2020ff" stroke-width="1"/></svg>
<svg style="left:1790px;top:578px" width="16" height="16" viewBox="0 0 16 16" ><ellipse cx="8.3" cy="7.8" rx="8.6" ry="3.8" fill="none" stroke="#000" stroke-width="1.15" transform="rotate(-46 8.300 7.800)"/><path d="M3 13.500l11-11.500" fill="none" stroke="#777" stroke-width="0.8" /><rect x="13.5" y="0.5" width="2" height="2" fill="#f4f4ff" stroke="#2020ff" stroke-width="1"/><rect x="0.5" y="12.5" width="2" height="2" fill="#f4f4ff" stroke="#2020ff" stroke-width="1"/><rect x="11.5" y="7.5" width="2" height="2" fill="#f4f4ff" stroke="#2020ff" stroke-width="1"/><rect x="7.5" y="11.5" width="2" height="2" fill="#f4f4ff" stroke="#2020ff" stroke-width="1"/></svg>
<svg style="left:1818px;top:578px" width="16" height="16" viewBox="0 0 16 16" ><path d="M2.500 13q-3-6 6-6.500q9 .5 6 6.500" fill="none" stroke="#000" stroke-width="1.15" /><text x="8.5" y="4.5" font-size="6" fill="#2020d0" font-weight="bold" text-anchor="middle" font-family="Liberation Sans, sans-serif">a:b</text></svg>
<svg style="left:1678px;top:650px" width="16" height="16" viewBox="0 0 16 16" ><path d="M1.500 14q2-11 7-11t6 9.500" fill="none" stroke="#000" stroke-width="1.15" /><rect x="0.5" y="12.5" width="2" height="2" fill="#f4f4ff" stroke="#2020ff" stroke-width="1"/><rect x="13.5" y="11.5" width="2" height="2" fill="#f4f4ff" stroke="#2020ff" stroke-width="1"/><rect x="2.5" y="0.5" width="2" height="2" fill="#f4f4ff" stroke="#2020ff" stroke-width="1"/><rect x="12.5" y="0.5" width="2" height="2" fill="#f4f4ff" stroke="#2020ff" stroke-width="1"/></svg>
<svg style="left:1706px;top:650px" width="16" height="16" viewBox="0 0 16 16" ><path d="M12.500 2.500l-8 3 5 4-7 4.500" fill="none" stroke="#000" stroke-width="1.3" /><rect x="11.5" y="1.5" width="2" height="2" fill="#f4f4ff" stroke="#2020ff" stroke-width="1"/><rect x="3.5" y="4.5" width="2" height="2" fill="#f4f4ff" stroke="#2020ff" stroke-width="1"/><rect x="8.5" y="8.5" width="2" height="2" fill="#f4f4ff" stroke="#2020ff" stroke-width="1"/><rect x="1.5" y="12.5" width="2" height="2" fill="#f4f4ff" stroke="#2020ff" stroke-width="1"/></svg>
<svg style="left:1734px;top:650px" width="16" height="16" viewBox="0 0 16 16" ><path d="M1.500 14l3-10.500q3.500-5 8 0l2 9" fill="none" stroke="#000" stroke-width="1.15" /><rect x="0.5" y="12.5" width="2" height="2" fill="#f4f4ff" stroke="#2020ff" stroke-width="1"/><rect x="13.5" y="11.5" width="2" height="2" fill="#f4f4ff" stroke="#2020ff" stroke-width="1"/><rect x="3.5" y="2.5" width="2" height="2" fill="#f4f4ff" stroke="#2020ff" stroke-width="1"/><rect x="11.5" y="2.5" width="2" height="2" fill="#f4f4ff" stroke="#2020ff" stroke-width="1"/></svg>
<svg style="left:1762px;top:650px" width="16" height="16" viewBox="0 0 16 16" ><path d="M2.500 11.500q0-10 7.500-11.300q6 0 5.800 5.400q-.5 5.500-4.800 6.800q-3.500 0-3.500-3.100q.5-3 4-3.800" fill="none" stroke="#000" stroke-width="1.15" /><rect x="1.5" y="10.5" width="2" height="2" fill="#f4f4ff" stroke="#2020ff" stroke-width="1"/><rect x="10.5" y="4.5" width="2" height="2" fill="#f4f4ff" stroke="#2020ff" stroke-width="1"/></svg>
<svg style="left:1790px;top:650px" width="16" height="16" viewBox="0 0 16 16" ><path d="M2.500 11.500q0-10 7.500-11.300q6 0 5.800 5.400q-.5 5.500-4.800 6.800q-3.500 0-3.500-3.100q.5-3 4-3.800" fill="none" stroke="#000" stroke-width="1.15" /><rect x="1.5" y="10.5" width="2" height="2" fill="#f4f4ff" stroke="#2020ff" stroke-width="1"/><rect x="10.5" y="4.5" width="2" height="2" fill="#f4f4ff" stroke="#2020ff" stroke-width="1"/></svg>
<svg style="left:1818px;top:650px" width="16" height="16" viewBox="0 0 16 16" ><path d="M4 14.500q-4-1-2-4.500q-2.500-3.500 1.500-4.500q.5-4.500 5-4q4.500-.5 5 4q3.500 2 1 5q1.500 3.500-2.500 4" fill="none" stroke="#000" stroke-width="1.2" /><path d="M4 15h3M10 15h3" fill="none" stroke="#000" stroke-width="1.8" /></svg>
<svg style="left:1846px;top:650px" width="16" height="16" viewBox="0 0 16 16" ><path d="M1.500 12l4-4.500 4 2 5-7" fill="none" stroke="#000" stroke-width="1.7" /><path d="M5.500 2v5M9.500 10v4" fill="none" stroke="#000" stroke-width="1.1" stroke-dasharray="1 1"/><rect x="4.0" y="0.0" width="3" height="3" fill="#fff" stroke="#000" stroke-width="1.2"/><rect x="13.0" y="1.0" width="3" height="3" fill="#fff" stroke="#000" stroke-width="1.2"/><rect x="0.0" y="11.0" width="3" height="3" fill="#fff" stroke="#000" stroke-width="1.2"/><rect x="8.0" y="12.5" width="3" height="3" fill="#fff" stroke="#000" stroke-width="1.2"/></svg>
<svg style="left:1678px;top:678px" width="16" height="16" viewBox="0 0 16 16" ><path d="M0.500 13q2-9.500 7.500-10t7.500 9" fill="none" stroke="#9a9a9a" stroke-width="1.1" /><path d="M2 8q3-5.500 6-5q2.500-.5 5.500 4" fill="none" stroke="#c4c4c4" stroke-width="1" /></svg>
<svg style="left:1664px;top:157px" width="16" height="16" viewBox="0 0 16 16" ><path d="M4.500 1.500v11l2.500-2.500 2 4.500 2-1-2-4.500h3.500z" fill="#000" stroke="#000" stroke-width="0.5"/><path d="M5.500 4v6.500l1.700-1.700.8-.3h2z" fill="#fff"/></svg>
<svg style="left:1687px;top:157px" width="16" height="16" viewBox="0 0 16 16" ><path d="M2 14q3-9 8-13" fill="none" stroke="#000" stroke-width="1.1" /><rect x="5.5" y="4.5" width="2" height="2" fill="#2020ff" stroke="#2020ff" stroke-width="1"/><path d="M8.500 7.500v7.500l1.800-1.500 1.200 2.500 1.200-.6-1.200-2.500h2.300z" fill="#fff" stroke="#000" stroke-width="0.9"/></svg>
<svg style="left:1708px;top:157px" width="16" height="16" viewBox="0 0 16 16" ><circle cx="7.5" cy="7.5" r="6" fill="#3838e8" /><path d="M3 4q3-3 6-1.500l-2 2.500-3 1zM6 9l4-1 2 2-3 3z" fill="#20d030"/><path d="M14.500 2v9" fill="none" stroke="#000" stroke-width="1.2" /><path d="M3 13.500q5 3 11-2" fill="none" stroke="#2828a8" stroke-width="1.8" /><path d="M7 6l5-1.500v3z" fill="#fff"/></svg>
<svg style="left:1836px;top:157px" width="16" height="16" viewBox="0 0 16 16" ><path d="M1.500 8l5-4 1.500 1.500v9.500h-6.500z" fill="#f01010" stroke="#2a0000" stroke-width="1"/><path d="M8 5.500l6-1.500v7.500l-6 4z" fill="#a00000" stroke="#2a0000" stroke-width="1"/><path d="M3 1l2-1 6 7-2 1.500z" fill="#f8f8f8" stroke="#1a1a1a" stroke-width="1"/><path d="M9 3.500l3-2.500 3 1.500v3l-2 1v5h-2v-5z" fill="#fff" stroke="#1a1a1a" stroke-width="1"/><rect x="9.5" y="4" width="3" height="1.2" fill="#c8b820"/></svg>
<svg style="left:1851px;top:172px" width="4" height="4" viewBox="0 0 4 4" ><path d="M4 0V4H0Z" fill="#333"/></svg>
<svg style="left:1664px;top:706px" width="16" height="16" viewBox="0 0 16 16" ><path d="M1.500 8l5-4 1.500 1.500v9.500h-6.500z" fill="#f01010" stroke="#2a0000" stroke-width="1"/><path d="M8 5.500l6-1.500v7.500l-6 4z" fill="#a00000" stroke="#2a0000" stroke-width="1"/><path d="M3 1l2-1 6 7-2 1.500z" fill="#f8f8f8" stroke="#1a1a1a" stroke-width="1"/><path d="M9 3.500l3-2.500 3 1.500v3l-2 1v5h-2v-5z" fill="#fff" stroke="#1a1a1a" stroke-width="1"/><rect x="9.5" y="4" width="3" height="1.2" fill="#c8b820"/></svg>
<svg style="left:1724px;top:705px" width="16" height="16" viewBox="0 0 16 16" ><path d="M3.500 1.500v11l2.500-2.500 2 4 2-1-2-4h3.500z" fill="#00008a"/><rect x="11" y="9" width="1.5" height="1.5" fill="#2222ee"/><rect x="11" y="12" width="1.5" height="1.5" fill="#2222ee"/><rect x="13.5" y="12" width="1.5" height="1.5" fill="#2222ee"/></svg>
<svg style="left:1789px;top:705px" width="16" height="16" viewBox="0 0 16 16" ><rect x="2.5" y="1.5" width="9" height="8" fill="#dde" stroke="#00008a" stroke-width="1.3"/><rect x="0.5" y="7.5" width="7" height="7" fill="#fff" stroke="#000" stroke-width="1"/><path d="M2.500 11h3M4 9.500v3" fill="none" stroke="#000" stroke-width="1" /><rect x="9.5" y="2.5" width="5" height="3" fill="#fff" stroke="#00008a" stroke-width="1.2"/><rect x="11" y="8" width="4" height="4" fill="#00008a"/></svg>
<svg style="left:1853px;top:705px" width="16" height="16" viewBox="0 0 16 16" ><rect x="0.5" y="3.5" width="15" height="9" fill="#20c0c0" stroke="#004040" stroke-width="1"/><rect x="2" y="5" width="12" height="3" fill="#003838"/><rect x="2" y="9.5" width="1.5" height="1.5" fill="#fff"/><rect x="4.5" y="9.5" width="1.5" height="1.5" fill="#fff"/><rect x="7" y="9.5" width="1.5" height="1.5" fill="#fff"/><rect x="9.5" y="9.5" width="1.5" height="1.5" fill="#fff"/><rect x="12" y="9.5" width="1.5" height="1.5" fill="#fff"/></svg>
<svg style="left:14px;top:989px" width="13" height="13" viewBox="0 0 13 13" ><path d="M2 2l9 9M11 2l-9 9" stroke="#b4b4b4" stroke-width="3"/></svg>
<svg style="left:36px;top:988px" width="16" height="14" viewBox="0 0 16 14" ><rect x="0.5" y="0.5" width="15" height="13" fill="#f6f6f6" stroke="#a8a8a8" stroke-width="1"/><rect x="0.5" y="0.5" width="15" height="3" fill="#dcdcdc" stroke="#a8a8a8" stroke-width="1"/><path d="M0.500 6.500h15M0.500 9.500h15M5.500 3.500v10M10.500 3.500v10" fill="none" stroke="#b4b4b4" stroke-width="1" /></svg>
<div style="left:56px;top:980px;width:1px;height:29px;background:#8e8e8e;"></div>
<span class="t" style="left:62px;top:979.84px;font-size:12px;color:#111;letter-spacing:-0.622px;">Scale X</span>
<div style="left:61px;top:995px;width:38px;height:15px;background:#f3f3f3;border-top:1px solid #a9a9a9;border-left:1px solid #a9a9a9;border-right:1px solid #e4e4e4;box-sizing:border-box;"></div>
<span class="t" style="left:66px;top:996.84px;font-size:12px;color:#8c8c8c;">1</span>
<div style="left:100px;top:996px;width:11px;height:14px;background:#eaeaea;border:1px solid #dadada;box-sizing:border-box;"></div>
<svg style="left:102px;top:998px" width="7" height="11" viewBox="0 0 7 11" ><path d="M3.500 0.500l3 3.500h-6zM3.500 10.500l3-3.500h-6z" fill="#6a6a6a"/></svg>
<span class="t" style="left:117px;top:979.84px;font-size:12px;color:#111;letter-spacing:-0.591px;">Scale Y</span>
<div style="left:116px;top:995px;width:38px;height:15px;background:#f3f3f3;border-top:1px solid #a9a9a9;border-left:1px solid #a9a9a9;border-right:1px solid #e4e4e4;box-sizing:border-box;"></div>
<span class="t" style="left:121px;top:996.84px;font-size:12px;color:#8c8c8c;">1</span>
<div style="left:155px;top:996px;width:11px;height:14px;background:#eaeaea;border:1px solid #dadada;box-sizing:border-box;"></div>
<svg style="left:157px;top:998px" width="7" height="11" viewBox="0 0 7 11" ><path d="M3.500 0.500l3 3.500h-6zM3.500 10.500l3-3.500h-6z" fill="#6a6a6a"/></svg>
<span class="t" style="left:172px;top:979.84px;font-size:12px;color:#111;letter-spacing:-0.780px;">Size X</span>
<div style="left:171px;top:995px;width:52px;height:15px;background:#f3f3f3;border-top:1px solid #a9a9a9;border-left:1px solid #a9a9a9;border-right:1px solid #e4e4e4;box-sizing:border-box;"></div>
<span class="t" style="left:175.5px;top:996.84px;font-size:12px;color:#8c8c8c;letter-spacing:0.125px;">0 mm</span>
<span class="t" style="left:227px;top:979.84px;font-size:12px;color:#111;letter-spacing:-0.744px;">Size Y</span>
<div style="left:226px;top:995px;width:52px;height:15px;background:#f3f3f3;border-top:1px solid #a9a9a9;border-left:1px solid #a9a9a9;border-right:1px solid #e4e4e4;box-sizing:border-box;"></div>
<span class="t" style="left:230.5px;top:996.84px;font-size:12px;color:#8c8c8c;letter-spacing:0.125px;">0 mm</span>
<span class="t" style="left:282px;top:979.84px;font-size:12px;color:#111;letter-spacing:-0.603px;">Pos X</span>
<div style="left:281px;top:995px;width:52px;height:15px;background:#f3f3f3;border-top:1px solid #a9a9a9;border-left:1px solid #a9a9a9;border-right:1px solid #e4e4e4;box-sizing:border-box;"></div>
<span class="t" style="left:285.5px;top:996.84px;font-size:12px;color:#8c8c8c;letter-spacing:0.125px;">0 mm</span>
<span class="t" style="left:337px;top:979.84px;font-size:12px;color:#111;letter-spacing:-0.560px;">Pos Y</span>
<div style="left:336px;top:995px;width:52px;height:15px;background:#f3f3f3;border-top:1px solid #a9a9a9;border-left:1px solid #a9a9a9;border-right:1px solid #e4e4e4;box-sizing:border-box;"></div>
<span class="t" style="left:340.5px;top:996.84px;font-size:12px;color:#8c8c8c;letter-spacing:0.125px;">0 mm</span>
<span class="t" style="left:392px;top:979.84px;font-size:12px;color:#111;letter-spacing:-0.336px;">Delta X</span>
<div style="left:391px;top:995px;width:52px;height:15px;background:#f3f3f3;border-top:1px solid #a9a9a9;border-left:1px solid #a9a9a9;border-right:1px solid #e4e4e4;box-sizing:border-box;"></div>
<span class="t" style="left:395.5px;top:996.84px;font-size:12px;color:#8c8c8c;letter-spacing:0.125px;">0 mm</span>
<span class="t" style="left:447px;top:979.84px;font-size:12px;color:#111;letter-spacing:-0.305px;">Delta Y</span>
<div style="left:446px;top:995px;width:52px;height:15px;background:#f3f3f3;border-top:1px solid #a9a9a9;border-left:1px solid #a9a9a9;border-right:1px solid #e4e4e4;box-sizing:border-box;"></div>
<span class="t" style="left:450.5px;top:996.84px;font-size:12px;color:#8c8c8c;letter-spacing:0.125px;">0 mm</span>
<span class="t" style="left:502px;top:979.84px;font-size:12px;color:#111;letter-spacing:-0.558px;">Rot</span>
<div style="left:501px;top:995px;width:38px;height:15px;background:#f3f3f3;border-top:1px solid #a9a9a9;border-left:1px solid #a9a9a9;border-right:1px solid #e4e4e4;box-sizing:border-box;"></div>
<span class="t" style="left:506px;top:996.84px;font-size:12px;color:#8c8c8c;">0</span>
<div style="left:540px;top:996px;width:11px;height:14px;background:#eaeaea;border:1px solid #dadada;box-sizing:border-box;"></div>
<svg style="left:542px;top:998px" width="7" height="11" viewBox="0 0 7 11" ><path d="M3.500 0.500l3 3.500h-6zM3.500 10.500l3-3.500h-6z" fill="#6a6a6a"/></svg>
<span class="t" style="left:557px;top:979.84px;font-size:12px;color:#111;letter-spacing:-0.201px;">Delta Dist</span>
<div style="left:556px;top:995px;width:52px;height:15px;background:#f3f3f3;border-top:1px solid #a9a9a9;border-left:1px solid #a9a9a9;border-right:1px solid #e4e4e4;box-sizing:border-box;"></div>
<span class="t" style="left:560.5px;top:996.84px;font-size:12px;color:#8c8c8c;letter-spacing:0.125px;">0 mm</span>
<span class="t" style="left:612px;top:979.84px;font-size:12px;color:#111;letter-spacing:-0.338px;">Delta Ang</span>
<div style="left:611px;top:995px;width:38px;height:15px;background:#f3f3f3;border-top:1px solid #a9a9a9;border-left:1px solid #a9a9a9;border-right:1px solid #e4e4e4;box-sizing:border-box;"></div>
<span class="t" style="left:616px;top:996.84px;font-size:12px;color:#8c8c8c;">0</span>
<div style="left:650px;top:996px;width:11px;height:14px;background:#eaeaea;border:1px solid #dadada;box-sizing:border-box;"></div>
<svg style="left:652px;top:998px" width="7" height="11" viewBox="0 0 7 11" ><path d="M3.500 0.500l3 3.500h-6zM3.500 10.500l3-3.500h-6z" fill="#6a6a6a"/></svg>
<div style="left:0px;top:1010px;width:1920px;height:4px;background:#f0f0f0;"></div>
<div style="left:667px;top:980px;width:1px;height:29px;background:#8e8e8e;"></div>
<div style="left:740px;top:980px;width:1px;height:29px;background:#8e8e8e;"></div>
<div style="left:833px;top:980px;width:1px;height:29px;background:#8e8e8e;"></div>
<div style="left:693px;top:983px;width:22px;height:22px;background:#bfdcf4;border:1px solid #8cc4f0;box-sizing:border-box;"></div>
<div style="left:743px;top:983px;width:22px;height:22px;background:#bfdcf4;border:1px solid #8cc4f0;box-sizing:border-box;"></div>
<svg style="left:674px;top:986px" width="16" height="16" viewBox="0 0 16 16" ><path d="M2.500 14.500v-5h5v5zM4.500 12.500h1" fill="none" stroke="#1a1a1a" stroke-width="1" /><path d="M4.500 9.500v-3q0-3 3-3h7.500v3h-6.500q-1.500 0-1.500 1.500v1.500z" fill="#c8c8c8" stroke="#1a1a1a" stroke-width="1"/><path d="M11.500 3.500l3.500-2M11.500 6.500l3.500-2v-3" fill="none" stroke="#1a1a1a" stroke-width="0.9" /></svg>
<svg style="left:696px;top:986px" width="16" height="16" viewBox="0 0 16 16" ><rect x="1.5" y="1.5" width="5" height="5" fill="#fff" stroke="#1a1a1a" stroke-width="1.2"/><path d="M7 7l3 3" fill="none" stroke="#1a1a1a" stroke-width="1.2" /><rect x="9.5" y="8.5" width="5.5" height="5.5" fill="#fff" stroke="#1a1a1a" stroke-width="1.2"/><rect x="7.5" y="10.5" width="4" height="4" fill="#fff" stroke="#1a1a1a" stroke-width="1"/><circle cx="12" cy="12.5" r="2" fill="none" stroke="#1a1a1a" stroke-width="0.9" /><path d="M1 1l14 0" fill="none" stroke="#ddd" stroke-width="0.5" /></svg>
<svg style="left:718px;top:986px" width="16" height="16" viewBox="0 0 16 16" ><path d="M2 14q0-5.500 5-6t6-6" fill="none" stroke="#555" stroke-width="1.4" /><path d="M9 11l-2.500-2.500M12 14l-1.500-1.500" fill="none" stroke="#3a7ae8" stroke-width="1.3" /><path d="M5.500 7.500l3 .5-2.500 2.500zM14 15l-3.500-.5 3-3z" fill="#3a7ae8"/></svg>
<svg style="left:746px;top:986px" width="16" height="16" viewBox="0 0 16 16" ><rect x="0.5" y="0.5" width="16" height="15" fill="#0a6a5a" stroke="#000" stroke-width="1.6"/><path d="M2 1.500l13 13v-13z" fill="#10e040"/><path d="M2.500 13.500h12M14 2.500v11" fill="none" stroke="#fff" stroke-width="1" stroke-dasharray="1 1"/></svg>
<svg style="left:768px;top:986px" width="16" height="16" viewBox="0 0 16 16" ><path d="M1.500 3.500l12 11h-12z" fill="#20a090" stroke="#1a1a1a" stroke-width="1"/><path d="M3 8l5 5h-5z" fill="#fff" stroke="#20c050" stroke-width="0.8"/><rect x="6.5" y="1" width="9" height="5" fill="#e8e8e8"/><text x="7" y="6" font-size="5.5" fill="#1a1a1a" font-weight="bold" text-anchor="start" font-family="Liberation Sans, sans-serif">WP</text></svg>
<svg style="left:790px;top:986px" width="16" height="16" viewBox="0 0 16 16" ><path d="M1.500 1.500l12 13h-12z" fill="#20e050" stroke="#1a1a1a" stroke-width="1"/><path d="M2 14.500h11" fill="none" stroke="#1a1a1a" stroke-width="1" stroke-dasharray="1 1"/><rect x="8" y="1" width="8" height="5" fill="#e8e8e8"/><text x="8.5" y="6" font-size="5.5" fill="#1a1a1a" font-weight="bold" text-anchor="start" font-family="Liberation Sans, sans-serif">CP</text></svg>
<svg style="left:812px;top:986px" width="16" height="16" viewBox="0 0 16 16" ><path d="M1.500 2.500h8v5h4v4h-3v3.500h-4v-6h-5z" fill="#20e050" stroke="#1a1a1a" stroke-width="1"/><path d="M3 4.500h5M7.500 8v5" fill="none" stroke="#fff" stroke-width="0.9" stroke-dasharray="1 1"/><text x="11.5" y="6" font-size="6.5" fill="#1a1a1a" font-weight="bold" text-anchor="start" font-family="Liberation Sans, sans-serif">F</text></svg>
<svg style="left:840px;top:986px" width="16" height="16" viewBox="0 0 16 16" ><path d="M2 8q0-4.500 5-4.500h5" fill="none" stroke="#108030" stroke-width="2.2" /><path d="M1 2.500l4 1-1 3.500zM0.500 9.500l5-1.500-2-2z" fill="#108030"/><path d="M7.500 5.500v8.500l2-1.700 1.300 3 1.500-.7-1.300-3h2.800z" fill="#fff" stroke="#1a1a1a" stroke-width="1"/></svg>
<svg style="left:862px;top:986px" width="16" height="16" viewBox="0 0 16 16" ><path d="M1.500 1.500h7l-3.500 4.500z" fill="#f03030"/><path d="M14.500 14.500h-7l3.500-4.500z" fill="#5a8af0"/><path d="M5 6l5.500 4" fill="none" stroke="#e0a020" stroke-width="1" stroke-dasharray="1.500 1"/><path d="M11 3l3 3M3 10l2 3" fill="none" stroke="#e0a020" stroke-width="1" stroke-dasharray="1 1"/></svg>
<svg style="left:883px;top:986px" width="16" height="16" viewBox="0 0 16 16" ><path d="M1.500 13.500l5-10 5 10z" fill="none" stroke="#555" stroke-width="1.1" /><path d="M3.500 13.500l3.500-7 3.500 7" fill="none" stroke="#555" stroke-width="0.9" /><path d="M7.500 14.500l4-8 4 8z" fill="none" stroke="#e02020" stroke-width="1.1" /></svg>
<svg style="left:906px;top:986px" width="16" height="16" viewBox="0 0 16 16" ><path d="M5.500 6q-1-4.500 2.500-4.500t2.500 4.500l2 1.500v2h-9v-2z" fill="#e2e2e2" stroke="#b0b0b0" stroke-width="1"/><ellipse cx="8" cy="12.5" rx="6.5" ry="2.2" fill="#e8e8e8" stroke="#b0b0b0" stroke-width="1" /></svg>
<svg style="left:927px;top:986px" width="16" height="16" viewBox="0 0 16 16" ><rect x="2.5" y="3.5" width="11" height="11" fill="none" stroke="#888" stroke-width="1" stroke-dasharray="2 1"/><rect x="3" y="9" width="5.5" height="5.5" fill="#dde" stroke="#2040c0" stroke-width="1.2"/><circle cx="6.5" cy="11.5" r="2.2" fill="none" stroke="#2040c0" stroke-width="1" /><path d="M2 15l12-13" fill="none" stroke="#e03030" stroke-width="1.1" /></svg>
<svg style="left:949px;top:986px" width="16" height="16" viewBox="0 0 16 16" ><rect x="1.5" y="1.5" width="13" height="13" fill="#e6e6e6" stroke="#b0b0b0" stroke-width="1.2"/><path d="M4 4l8 8M12 4l-8 8" fill="none" stroke="#fafafa" stroke-width="1.5" /><rect x="5.5" y="5.5" width="5" height="5" fill="#d4d4d4" stroke="#b8b8b8" stroke-width="0.8"/></svg>
<svg style="left:971px;top:986px" width="16" height="16" viewBox="0 0 16 16" ><rect x="2.5" y="6.5" width="8" height="8" fill="#e4e4e4" stroke="#b0b0b0" stroke-width="1.2"/><path d="M6 6v-2.500h7.500v7.500h-2.500" fill="none" stroke="#b8b8b8" stroke-width="1.2" /><rect x="12" y="2" width="2.5" height="2.5" fill="#c0c0c0"/></svg>
<svg style="left:994px;top:986px" width="16" height="16" viewBox="0 0 16 16" ><rect x="1.5" y="6.5" width="8" height="8" fill="#e4e4e4" stroke="#b0b0b0" stroke-width="1.2"/><path d="M5 6v-2h7v7h-2" fill="none" stroke="#b8b8b8" stroke-width="1.2" /><path d="M12 6.500h3M13.500 2v3" fill="none" stroke="#b0b0b0" stroke-width="1.2" /><rect x="12.5" y="9" width="2.5" height="2.5" fill="#c0c0c0"/></svg>
<svg style="left:1016px;top:986px" width="16" height="16" viewBox="0 0 16 16" ><rect x="1.5" y="1.5" width="13" height="13" fill="none" stroke="#999" stroke-width="1" stroke-dasharray="2 1"/><rect x="4" y="5" width="7.5" height="7.5" fill="#dde" stroke="#2040c0" stroke-width="1.2"/><circle cx="8" cy="9" r="2.5" fill="none" stroke="#2040c0" stroke-width="1" /><path d="M2 14l12-12" fill="none" stroke="#e03030" stroke-width="1.2" /><path d="M2 2l12 12" fill="none" stroke="#e8a0a0" stroke-width="0.8" /></svg>
<span class="t" style="left:1441px;top:1022.84px;font-size:12px;color:#111;letter-spacing:-0.670px;">SNAP</span>
<span class="t" style="left:1479.6px;top:1022.84px;font-size:12px;color:#111;letter-spacing:-1.557px;">GEO</span>
<div style="left:1473px;top:1016px;width:1px;height:22px;background:#dcdcdc;"></div>
<div style="left:1504px;top:1016px;width:1px;height:22px;background:#dcdcdc;"></div>
<div style="left:1803px;top:1016px;width:1px;height:22px;background:#dcdcdc;"></div>
<div style="left:1859px;top:1016px;width:1px;height:22px;background:#dcdcdc;"></div>
<svg style="left:1521px;top:1019px" width="11" height="18" viewBox="0 0 11 18" ><rect x="1.5" y="1" width="6.5" height="6.5" fill="#f4f4f4" stroke="#3a3a3a" stroke-width="1.7"/><text x="0.6" y="16.7" font-size="11" fill="#1a1a1a" text-anchor="start" font-family="Liberation Sans, sans-serif">X</text></svg>
<div style="left:1532px;top:1019px;width:73px;height:19px;background:#fff;border:1px solid #000;box-sizing:border-box;"></div>
<div style="left:1533px;top:1020px;width:71px;height:17px;overflow:hidden;"><span class="t" style="left:1.600px;top:2.24px;font-size:12px;color:#000;transform:scaleX(0.875);transform-origin:0 0;">-136,766281 mm</span></div>
<svg style="left:1618px;top:1019px" width="11" height="18" viewBox="0 0 11 18" ><rect x="1.5" y="1" width="6.5" height="6.5" fill="#f4f4f4" stroke="#3a3a3a" stroke-width="1.7"/><text x="0.6" y="16.7" font-size="11" fill="#1a1a1a" text-anchor="start" font-family="Liberation Sans, sans-serif">Y</text></svg>
<div style="left:1628px;top:1019px;width:73px;height:19px;background:#fff;border:1px solid #000;box-sizing:border-box;"></div>
<div style="left:1629px;top:1020px;width:71px;height:17px;overflow:hidden;"><span class="t" style="left:1.600px;top:2.24px;font-size:12px;color:#000;transform:scaleX(0.895);transform-origin:0 0;">1820,954451 mm</span></div>
<svg style="left:1714px;top:1019px" width="11" height="18" viewBox="0 0 11 18" ><rect x="1.5" y="1" width="6.5" height="6.5" fill="#f4f4f4" stroke="#3a3a3a" stroke-width="1.7"/><text x="0.6" y="16.7" font-size="11" fill="#1a1a1a" text-anchor="start" font-family="Liberation Sans, sans-serif">Z</text></svg>
<div style="left:1724px;top:1019px;width:73px;height:19px;background:#fff;border:1px solid #000;box-sizing:border-box;"></div>
<div style="left:1725px;top:1020px;width:71px;height:17px;overflow:hidden;"><span class="t" style="left:1.600px;top:2.24px;font-size:12px;color:#000;transform:scaleX(0.9);transform-origin:0 0;">0 mm</span></div>
<span class="t" style="left:1808px;top:1019.84px;font-size:12px;color:#111;letter-spacing:-0.923px;">157%</span>
<span class="t" style="left:1862.7px;top:1019.84px;font-size:12px;color:#111;letter-spacing:-0.506px;">22:44</span></body></html>
